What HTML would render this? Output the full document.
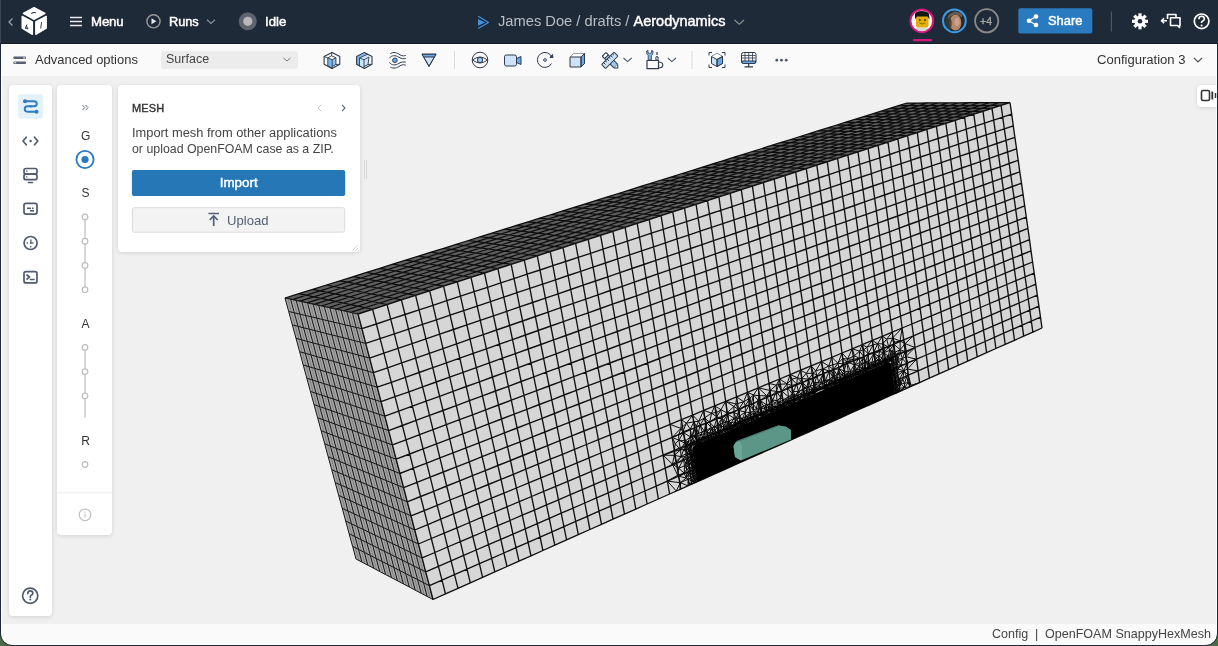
<!DOCTYPE html>
<html><head><meta charset="utf-8">
<style>
*{box-sizing:border-box;margin:0;padding:0}
html,body{width:1218px;height:646px;overflow:hidden}
body{background:#1f2a38;font-family:"Liberation Sans",sans-serif;position:relative}
.abs{position:absolute}
.ht,.abs{will-change:transform}
#green{position:absolute;left:0;top:600px;width:1218px;height:46px;background:#4b6b47}
#frame{position:absolute;left:0;top:0;width:1218px;height:646px;background:#1f2a38;border-radius:0 0 13px 13px}
#app{position:absolute;left:1px;top:44px;width:1216px;height:601px;background:#fff;border-radius:0 0 12px 12px;overflow:hidden}
#tb{position:absolute;left:1px;top:1px;width:1214px;height:31px;background:#fafafa}
#vp{position:absolute;left:1px;top:32px;width:1214px;height:548px;background:#f0f0f0;overflow:hidden}
#ft{position:absolute;left:1px;top:580px;width:1214px;height:20px;background:#fafafa}
.ht{position:absolute;color:#fff;font-size:14px;font-weight:normal;-webkit-text-stroke:0.45px #fff;white-space:nowrap;line-height:1}
.card{position:absolute;background:#fff;border-radius:4px;box-shadow:0 1px 4px rgba(0,0,0,0.13)}
</style></head>
<body>
<div id="green"></div>
<div id="frame"></div>
<div style="position:absolute;left:0;top:0;width:1px;height:44px;background:#3b4556"></div>
<div style="position:absolute;left:0;top:43px;width:1218px;height:1px;background:#141c27"></div>

<!-- HEADER -->
<svg class="abs" style="left:0;top:0" width="1218" height="44">
  <!-- back chevron -->
  <path d="M12.5 18.5 L9 22 L12.5 25.5" stroke="#9aa0aa" stroke-width="1.3" fill="none"/>
  <!-- logo cube -->
  <g fill="#fff" stroke="#fff" stroke-width="1.4" stroke-linejoin="round">
    <path d="M23.4 13.4 L34.1 7.6 L44.9 13.4 L34.1 19.3 Z"/>
    <path d="M22.2 16.4 L32.4 21.9 L32.4 34.3 L22.2 28.2 Z"/>
    <path d="M35.8 21.9 L46.2 16.4 L46.2 28.2 L35.8 34.3 Z"/>
  </g>
  <path d="M31.2 13.6 q2.2 -1.6 4.6 -0.9" stroke="#1f2a38" stroke-width="1.1" fill="none"/>
  <path d="M27 24.5 l-1.8 3.8 h3.2 M26.6 25.5 l0.8 3.8" stroke="#1f2a38" stroke-width="0.9" fill="none"/>
  <path d="M41.6 22 l-0.9 6.5" stroke="#1f2a38" stroke-width="0.9" fill="none"/>
  <!-- hamburger -->
  <path d="M70 17.5 H82 M70 21.5 H82 M70 25.5 H82" stroke="#e8eaee" stroke-width="1.7"/>
  <!-- play circle -->
  <circle cx="153.5" cy="21.3" r="6.6" stroke="#9a9a9a" stroke-width="1.4" fill="none"/>
  <path d="M151.5 18.3 L156.3 21.3 L151.5 24.3 Z" fill="#e8e8e8"/>
  <path d="M207 19.8 L211 23.5 L215 19.8" stroke="#8a8f96" stroke-width="1.2" fill="none"/>
  <!-- idle -->
  <circle cx="247.8" cy="21.3" r="9" fill="#5c6470"/>
  <circle cx="247.8" cy="21.3" r="4.6" fill="#b8b8b8"/>
  <!-- title arrow -->
  <path d="M478.2 16.3 L488.5 22.4 L478.2 28.5" fill="none" stroke="#3d93e0" stroke-width="1.2" stroke-linejoin="round"/><path d="M478 19.1 L485 22.4 L478 25.7 Z" fill="#3d93e0"/>
  <path d="M734.5 20 L739.3 24.3 L744 20" stroke="#8a8f96" stroke-width="1.2" fill="none"/>
  <!-- avatars -->
  <defs><clipPath id="av1"><circle cx="921.8" cy="20.8" r="11"/></clipPath><clipPath id="av2"><circle cx="954.4" cy="20.8" r="11"/></clipPath></defs>
  <g clip-path="url(#av1)">
    <rect x="905" y="5" width="34" height="34" fill="#f6f6f6"/>
    <rect x="908" y="28" width="28" height="6" fill="#d8d8d8"/>
    <rect x="916" y="15.5" width="12.5" height="12" rx="2" fill="#e3ae0a"/>
    <path d="M915 19.5 L915 14 q1 -3 6.5 -3 q6.5 0 7.5 3 L929.5 19.5 L927.5 16.5 L917 16.5 Z" fill="#151515"/>
    <circle cx="919.8" cy="20" r="0.9" fill="#3a2a00"/><circle cx="925" cy="20" r="0.9" fill="#3a2a00"/>
    <path d="M919.5 23 q2.8 2 5.5 0" stroke="#6a4a00" stroke-width="0.7" fill="none"/>
  </g>
  <circle cx="921.8" cy="20.8" r="11.4" fill="none" stroke="#d6187c" stroke-width="2"/>
  <rect x="912.8" y="39.1" width="19.3" height="2.1" rx="1" fill="#d6187c"/>
  <g clip-path="url(#av2)">
    <rect x="940" y="5" width="30" height="32" fill="#262a2a"/>
    <ellipse cx="949" cy="23" rx="4" ry="8" fill="#2e3a34"/>
    <ellipse cx="955.5" cy="22.5" rx="5.8" ry="8" fill="#b4876c"/>
    <path d="M948 16 q6 -8 14 -2 l0 4 q-3 -4 -8 -3 q-4 1 -6 4z" fill="#6a5a4e"/>
    <path d="M950 19 q2 4 0 9" stroke="#5a4032" stroke-width="1.6" fill="none"/>
    <ellipse cx="957" cy="22" rx="2.5" ry="4" fill="#d0a088"/>
  </g>
  <circle cx="954.4" cy="20.8" r="11.4" fill="none" stroke="#3a9be8" stroke-width="2"/>
  <circle cx="986.7" cy="20.8" r="11.6" fill="none" stroke="#8b8b8b" stroke-width="1.8"/>
  <!-- share btn -->
  <rect x="1018.3" y="8.2" width="74" height="25.3" rx="2" fill="#2a7abf"/>
  <g fill="#fff">
    <circle cx="1036" cy="16.5" r="2.3"/><circle cx="1029" cy="20.8" r="2.3"/><circle cx="1036" cy="25" r="2.3"/>
  </g>
  <path d="M1029 20.8 L1036 16.5 M1029 20.8 L1036 25" stroke="#fff" stroke-width="1.3"/>
  <rect x="1110.8" y="11.5" width="1.2" height="20" fill="#4d5663"/>
  <!-- gear -->
  <g transform="translate(1140,21.3)">
    <circle r="5.5" fill="#fff"/>
    <g fill="#fff">
      <rect x="-1.6" y="-8" width="3.2" height="16"/>
      <rect x="-1.6" y="-8" width="3.2" height="16" transform="rotate(45)"/>
      <rect x="-1.6" y="-8" width="3.2" height="16" transform="rotate(90)"/>
      <rect x="-1.6" y="-8" width="3.2" height="16" transform="rotate(135)"/>
    </g>
    <circle r="2.3" fill="#1f2a38"/>
  </g>
  <!-- switch icon -->
  <g stroke="#fff" stroke-width="1.6" fill="none" stroke-linejoin="round">
    <path d="M1167.5 19 V14.5 H1176 V17.5"/>
    <path d="M1170.5 17.8 H1180 V25.5 H1179.5 V27.5 L1177.5 25.5 H1170.5 Z" fill="#1f2a38"/>
    <path d="M1161.5 20.8 H1167 M1164 18.3 L1161.5 20.8 L1164 23.3"/>
  </g>
  <!-- help -->
  <circle cx="1201.6" cy="21.3" r="7.3" stroke="#fff" stroke-width="1.7" fill="none"/>
  <path d="M1198.9 19.2 q0 -2.9 2.7 -2.9 q2.7 0 2.7 2.6 q0 1.6 -2 2.4 q-0.8 0.4 -0.8 1.7" stroke="#fff" stroke-width="1.6" fill="none"/>
  <circle cx="1201.6" cy="25.6" r="1" fill="#fff"/>
</svg>
<div class="ht" style="left:91px;top:15px;font-size:13.2px;letter-spacing:-0.1px">Menu</div>
<div class="ht" style="left:169px;top:16px;font-size:12.8px;letter-spacing:-0.1px">Runs</div>
<div class="ht" style="left:265.4px;top:15px;font-size:13.2px">Idle</div>
<div class="ht" style="left:498px;top:14.2px;font-size:14.7px;font-weight:normal;-webkit-text-stroke:0;color:#b9bec6">James Doe / drafts / <span style="color:#fff;font-weight:normal;-webkit-text-stroke:0.45px #fff;font-size:14.5px">Aerodynamics</span></div>
<div class="ht" style="left:980px;top:16px;font-size:10.6px;color:#a4a4a4;-webkit-text-stroke:0.4px #a4a4a4">+4</div>
<div class="ht" style="left:1048px;top:15px;font-size:12.9px">Share</div>
<div id="app">
  <div id="tb"></div>
  <div id="vp"></div>
  <div id="ft"></div>
</div>

<!-- MESH -->
<svg width="1218" height="646" viewBox="0 0 1218 646" style="position:absolute;left:0;top:0">
<polygon points="285.0,298.0 907.0,103.0 1010.0,102.5 358.0,314.0" fill="#606060"/>
<path d="M285.0,298.0 L292.3,299.6 L299.6,301.2 L306.9,302.8 L314.2,304.4 L321.5,306.0 L328.8,307.6 L336.1,309.2 L343.4,310.8 L350.7,312.4 L358.0,314.0 M298.9,293.6 L306.3,295.2 L313.7,296.8 L321.0,298.3 L328.4,299.9 L335.8,301.4 L343.1,303.0 L350.5,304.6 L357.9,306.1 L365.2,307.7 L372.6,309.3 M312.7,289.3 L320.2,290.8 L327.6,292.4 L335.0,293.9 L342.5,295.4 L349.9,296.9 L357.3,298.5 L364.8,300.0 L372.2,301.5 L379.7,303.0 L387.1,304.6 M326.4,285.0 L333.9,286.5 L341.4,288.0 L348.9,289.5 L356.4,291.0 L363.9,292.5 L371.4,294.0 L378.9,295.4 L386.4,296.9 L393.9,298.4 L401.4,299.9 M340.0,280.8 L347.5,282.2 L355.1,283.7 L362.6,285.1 L370.2,286.6 L377.8,288.0 L385.3,289.5 L392.9,291.0 L400.5,292.4 L408.0,293.9 L415.6,295.3 M353.4,276.6 L361.0,278.0 L368.6,279.4 L376.2,280.8 L383.9,282.2 L391.5,283.7 L399.1,285.1 L406.8,286.5 L414.4,287.9 L422.0,289.3 L429.7,290.8 M366.6,272.4 L374.3,273.8 L382.0,275.2 L389.7,276.6 L397.4,277.9 L405.1,279.3 L412.8,280.7 L420.5,282.1 L428.2,283.5 L435.9,284.9 L443.6,286.2 M379.8,268.3 L387.5,269.6 L395.3,271.0 L403.0,272.3 L410.8,273.7 L418.6,275.0 L426.3,276.4 L434.1,277.7 L441.8,279.1 L449.6,280.4 L457.3,281.8 M392.8,264.2 L400.6,265.5 L408.4,266.8 L416.3,268.1 L424.1,269.5 L431.9,270.8 L439.7,272.1 L447.5,273.4 L455.4,274.7 L463.2,276.0 L471.0,277.3 M405.7,260.2 L413.6,261.4 L421.5,262.7 L429.3,264.0 L437.2,265.3 L445.1,266.6 L453.0,267.8 L460.9,269.1 L468.7,270.4 L476.6,271.7 L484.5,273.0 M418.5,256.2 L426.4,257.4 L434.4,258.7 L442.3,259.9 L450.2,261.1 L458.2,262.4 L466.1,263.6 L474.1,264.9 L482.0,266.1 L490.0,267.4 L497.9,268.6 M431.1,252.2 L439.1,253.4 L447.1,254.6 L455.1,255.8 L463.1,257.0 L471.1,258.3 L479.1,259.5 L487.2,260.7 L495.2,261.9 L503.2,263.1 L511.2,264.3 M443.7,248.3 L451.7,249.4 L459.8,250.6 L467.8,251.8 L475.9,253.0 L484.0,254.2 L492.0,255.3 L500.1,256.5 L508.2,257.7 L516.2,258.9 L524.3,260.1 M456.1,244.4 L464.2,245.5 L472.3,246.7 L480.4,247.8 L488.6,249.0 L496.7,250.1 L504.8,251.2 L512.9,252.4 L521.1,253.5 L529.2,254.7 L537.3,255.8 M468.4,240.5 L476.6,241.6 L484.7,242.7 L492.9,243.9 L501.1,245.0 L509.3,246.1 L517.5,247.2 L525.7,248.3 L533.8,249.4 L542.0,250.5 L550.2,251.6 M480.6,236.7 L488.8,237.8 L497.0,238.9 L505.3,239.9 L513.5,241.0 L521.8,242.1 L530.0,243.2 L538.3,244.3 L546.5,245.3 L554.7,246.4 L563.0,247.5 M492.6,232.9 L500.9,234.0 L509.2,235.0 L517.5,236.1 L525.8,237.1 L534.1,238.2 L542.4,239.2 L550.7,240.3 L559.0,241.3 L567.3,242.3 L575.6,243.4 M504.6,229.2 L513.0,230.2 L521.3,231.2 L529.7,232.2 L538.0,233.2 L546.4,234.2 L554.7,235.3 L563.1,236.3 L571.5,237.3 L579.8,238.3 L588.2,239.3 M516.4,225.4 L524.9,226.4 L533.3,227.4 L541.7,228.4 L550.1,229.4 L558.5,230.4 L566.9,231.4 L575.4,232.3 L583.8,233.3 L592.2,234.3 L600.6,235.3 M528.2,221.8 L536.7,222.7 L545.1,223.7 L553.6,224.6 L562.1,225.6 L570.6,226.5 L579.0,227.5 L587.5,228.4 L596.0,229.4 L604.5,230.4 L612.9,231.3 M539.8,218.1 L548.4,219.0 L556.9,220.0 L565.4,220.9 L573.9,221.8 L582.5,222.7 L591.0,223.7 L599.5,224.6 L608.1,225.5 L616.6,226.4 L625.1,227.3 M551.4,214.5 L560.0,215.4 L568.5,216.3 L577.1,217.2 L585.7,218.1 L594.3,219.0 L602.9,219.9 L611.5,220.7 L620.0,221.6 L628.6,222.5 L637.2,223.4 M562.8,210.9 L571.4,211.8 L580.1,212.6 L588.7,213.5 L597.4,214.4 L606.0,215.2 L614.6,216.1 L623.3,217.0 L631.9,217.8 L640.6,218.7 L649.2,219.5 M574.1,207.4 L582.8,208.2 L591.5,209.0 L600.2,209.9 L608.9,210.7 L617.6,211.5 L626.3,212.4 L635.0,213.2 L643.7,214.0 L652.4,214.9 L661.1,215.7 M585.4,203.8 L594.1,204.6 L602.9,205.4 L611.6,206.2 L620.4,207.0 L629.1,207.9 L637.8,208.7 L646.6,209.5 L655.3,210.3 L664.1,211.1 L672.8,211.9 M596.5,200.3 L605.3,201.1 L614.1,201.9 L622.9,202.7 L631.7,203.4 L640.5,204.2 L649.3,205.0 L658.1,205.8 L666.9,206.5 L675.7,207.3 L684.5,208.1 M607.5,196.9 L616.4,197.6 L625.2,198.4 L634.1,199.1 L642.9,199.9 L651.8,200.6 L660.6,201.4 L669.5,202.1 L678.4,202.8 L687.2,203.6 L696.1,204.3 M618.4,193.5 L627.4,194.2 L636.3,194.9 L645.2,195.6 L654.1,196.3 L663.0,197.0 L671.9,197.8 L680.8,198.5 L689.7,199.2 L698.6,199.9 L707.5,200.6 M629.3,190.1 L638.2,190.8 L647.2,191.4 L656.2,192.1 L665.1,192.8 L674.1,193.5 L683.1,194.2 L692.0,194.9 L701.0,195.6 L709.9,196.2 L718.9,196.9 M640.0,186.7 L649.0,187.4 L658.1,188.0 L667.1,188.7 L676.1,189.3 L685.1,190.0 L694.1,190.6 L703.1,191.3 L712.1,192.0 L721.1,192.6 L730.2,193.3 M650.7,183.4 L659.7,184.0 L668.8,184.6 L677.9,185.2 L686.9,185.9 L696.0,186.5 L705.1,187.1 L714.1,187.8 L723.2,188.4 L732.3,189.0 L741.3,189.7 M661.2,180.0 L670.4,180.6 L679.5,181.3 L688.6,181.9 L697.7,182.5 L706.8,183.1 L715.9,183.7 L725.0,184.3 L734.2,184.9 L743.3,185.5 L752.4,186.1 M671.7,176.8 L680.9,177.3 L690.0,177.9 L699.2,178.5 L708.4,179.1 L717.5,179.6 L726.7,180.2 L735.9,180.8 L745.0,181.4 L754.2,181.9 L763.4,182.5 M682.1,173.5 L691.3,174.1 L700.5,174.6 L709.7,175.2 L718.9,175.7 L728.2,176.2 L737.4,176.8 L746.6,177.3 L755.8,177.9 L765.0,178.4 L774.2,179.0 M692.4,170.3 L701.6,170.8 L710.9,171.3 L720.2,171.8 L729.4,172.4 L738.7,172.9 L748.0,173.4 L757.2,173.9 L766.5,174.4 L775.8,175.0 L785.0,175.5 M702.6,167.1 L711.9,167.6 L721.2,168.1 L730.5,168.6 L739.8,169.1 L749.1,169.5 L758.5,170.0 L767.8,170.5 L777.1,171.0 L786.4,171.5 L795.7,172.0 M712.7,163.9 L722.1,164.4 L731.4,164.8 L740.8,165.3 L750.1,165.8 L759.5,166.2 L768.9,166.7 L778.2,167.2 L787.6,167.6 L797.0,168.1 L806.3,168.6 M722.7,160.8 L732.1,161.2 L741.5,161.6 L751.0,162.1 L760.4,162.5 L769.8,163.0 L779.2,163.4 L788.6,163.8 L798.0,164.3 L807.4,164.7 L816.8,165.2 M732.7,157.7 L742.1,158.1 L751.6,158.5 L761.1,158.9 L770.5,159.3 L780.0,159.7 L789.4,160.1 L798.9,160.5 L808.3,161.0 L817.8,161.4 L827.3,161.8 M742.5,154.6 L752.0,154.9 L761.6,155.3 L771.1,155.7 L780.6,156.1 L790.1,156.5 L799.6,156.9 L809.1,157.3 L818.6,157.7 L828.1,158.0 L837.6,158.4 M752.3,151.5 L761.9,151.9 L771.4,152.2 L781.0,152.6 L790.5,152.9 L800.1,153.3 L809.6,153.7 L819.2,154.0 L828.8,154.4 L838.3,154.7 L847.9,155.1 M762.0,148.5 L771.6,148.8 L781.2,149.1 L790.8,149.5 L800.4,149.8 L810.0,150.1 L819.6,150.5 L829.2,150.8 L838.8,151.1 L848.4,151.5 L858.0,151.8 M771.6,145.4 L781.3,145.7 L790.9,146.1 L800.6,146.4 L810.2,146.7 L819.9,147.0 L829.5,147.3 L839.2,147.6 L848.8,147.9 L858.5,148.2 L868.1,148.5 M781.2,142.4 L790.9,142.7 L800.6,143.0 L810.3,143.3 L820.0,143.6 L829.6,143.9 L839.3,144.1 L849.0,144.4 L858.7,144.7 L868.4,145.0 L878.1,145.3 M790.6,139.5 L800.4,139.7 L810.1,140.0 L819.9,140.3 L829.6,140.5 L839.3,140.8 L849.1,141.0 L858.8,141.3 L868.6,141.5 L878.3,141.8 L888.0,142.1 M800.0,136.5 L809.8,136.8 L819.6,137.0 L829.4,137.2 L839.2,137.5 L849.0,137.7 L858.7,137.9 L868.5,138.2 L878.3,138.4 L888.1,138.6 L897.9,138.9 M809.3,133.6 L819.2,133.8 L829.0,134.0 L838.8,134.2 L848.7,134.5 L858.5,134.7 L868.3,134.9 L878.1,135.1 L888.0,135.3 L897.8,135.5 L907.6,135.7 M818.6,130.7 L828.5,130.9 L838.3,131.1 L848.2,131.3 L858.1,131.5 L868.0,131.6 L877.8,131.8 L887.7,132.0 L897.6,132.2 L907.4,132.4 L917.3,132.6 M827.7,127.8 L837.7,128.0 L847.6,128.2 L857.5,128.3 L867.4,128.5 L877.3,128.6 L887.3,128.8 L897.2,129.0 L907.1,129.1 L917.0,129.3 L926.9,129.4 M836.8,125.0 L846.8,125.1 L856.8,125.3 L866.7,125.4 L876.7,125.5 L886.6,125.7 L896.6,125.8 L906.6,126.0 L916.5,126.1 L926.5,126.2 L936.4,126.4 M845.8,122.2 L855.9,122.3 L865.9,122.4 L875.9,122.5 L885.9,122.6 L895.9,122.7 L905.9,122.8 L915.9,123.0 L925.9,123.1 L935.9,123.2 L945.9,123.3 M854.8,119.4 L864.8,119.5 L874.9,119.5 L884.9,119.6 L895.0,119.7 L905.0,119.8 L915.1,119.9 L925.1,120.0 L935.2,120.1 L945.2,120.2 L955.3,120.3 M863.7,116.6 L873.8,116.7 L883.8,116.7 L893.9,116.8 L904.0,116.8 L914.1,116.9 L924.2,117.0 L934.3,117.0 L944.4,117.1 L954.5,117.2 L964.6,117.2 M872.5,113.8 L882.6,113.9 L892.7,113.9 L902.9,114.0 L913.0,114.0 L923.1,114.0 L933.3,114.1 L943.4,114.1 L953.5,114.2 L963.7,114.2 L973.8,114.2 M881.2,111.1 L891.4,111.1 L901.6,111.1 L911.7,111.1 L921.9,111.2 L932.1,111.2 L942.3,111.2 L952.4,111.2 L962.6,111.2 L972.8,111.3 L983.0,111.3 M889.9,108.4 L900.1,108.4 L910.3,108.4 L920.5,108.4 L930.7,108.4 L941.0,108.3 L951.2,108.3 L961.4,108.3 L971.6,108.3 L981.8,108.3 L992.0,108.3 M898.5,105.7 L908.7,105.6 L919.0,105.6 L929.2,105.6 L939.5,105.6 L949.8,105.5 L960.0,105.5 L970.3,105.5 L980.5,105.5 L990.8,105.4 L1001.1,105.4 M907.0,103.0 L917.3,103.0 L927.6,102.9 L937.9,102.8 L948.2,102.8 L958.5,102.8 L968.8,102.7 L979.1,102.7 L989.4,102.6 L999.7,102.5 L1010.0,102.5 M285.0,298.0 L298.9,293.6 L312.7,289.3 L326.4,285.0 L340.0,280.8 L353.4,276.6 L366.6,272.4 L379.8,268.3 L392.8,264.2 L405.7,260.2 L418.5,256.2 L431.1,252.2 L443.7,248.3 L456.1,244.4 L468.4,240.5 L480.6,236.7 L492.6,232.9 L504.6,229.2 L516.4,225.4 L528.2,221.8 L539.8,218.1 L551.4,214.5 L562.8,210.9 L574.1,207.4 L585.4,203.8 L596.5,200.3 L607.5,196.9 L618.4,193.5 L629.3,190.1 L640.0,186.7 L650.7,183.4 L661.2,180.0 L671.7,176.8 L682.1,173.5 L692.4,170.3 L702.6,167.1 L712.7,163.9 L722.7,160.8 L732.7,157.7 L742.5,154.6 L752.3,151.5 L762.0,148.5 L771.6,145.4 L781.2,142.4 L790.6,139.5 L800.0,136.5 L809.3,133.6 L818.6,130.7 L827.7,127.8 L836.8,125.0 L845.8,122.2 L854.8,119.4 L863.7,116.6 L872.5,113.8 L881.2,111.1 L889.9,108.4 L898.5,105.7 L907.0,103.0 M292.3,299.6 L306.3,295.2 L320.2,290.8 L333.9,286.5 L347.5,282.2 L361.0,278.0 L374.3,273.8 L387.5,269.6 L400.6,265.5 L413.6,261.4 L426.4,257.4 L439.1,253.4 L451.7,249.4 L464.2,245.5 L476.6,241.6 L488.8,237.8 L500.9,234.0 L513.0,230.2 L524.9,226.4 L536.7,222.7 L548.4,219.0 L560.0,215.4 L571.4,211.8 L582.8,208.2 L594.1,204.6 L605.3,201.1 L616.4,197.6 L627.4,194.2 L638.2,190.8 L649.0,187.4 L659.7,184.0 L670.4,180.6 L680.9,177.3 L691.3,174.1 L701.6,170.8 L711.9,167.6 L722.1,164.4 L732.1,161.2 L742.1,158.1 L752.0,154.9 L761.9,151.9 L771.6,148.8 L781.3,145.7 L790.9,142.7 L800.4,139.7 L809.8,136.8 L819.2,133.8 L828.5,130.9 L837.7,128.0 L846.8,125.1 L855.9,122.3 L864.8,119.5 L873.8,116.7 L882.6,113.9 L891.4,111.1 L900.1,108.4 L908.7,105.6 L917.3,103.0 M299.6,301.2 L313.7,296.8 L327.6,292.4 L341.4,288.0 L355.1,283.7 L368.6,279.4 L382.0,275.2 L395.3,271.0 L408.4,266.8 L421.5,262.7 L434.4,258.7 L447.1,254.6 L459.8,250.6 L472.3,246.7 L484.7,242.7 L497.0,238.9 L509.2,235.0 L521.3,231.2 L533.3,227.4 L545.1,223.7 L556.9,220.0 L568.5,216.3 L580.1,212.6 L591.5,209.0 L602.9,205.4 L614.1,201.9 L625.2,198.4 L636.3,194.9 L647.2,191.4 L658.1,188.0 L668.8,184.6 L679.5,181.3 L690.0,177.9 L700.5,174.6 L710.9,171.3 L721.2,168.1 L731.4,164.8 L741.5,161.6 L751.6,158.5 L761.6,155.3 L771.4,152.2 L781.2,149.1 L790.9,146.1 L800.6,143.0 L810.1,140.0 L819.6,137.0 L829.0,134.0 L838.3,131.1 L847.6,128.2 L856.8,125.3 L865.9,122.4 L874.9,119.5 L883.8,116.7 L892.7,113.9 L901.6,111.1 L910.3,108.4 L919.0,105.6 L927.6,102.9 M306.9,302.8 L321.0,298.3 L335.0,293.9 L348.9,289.5 L362.6,285.1 L376.2,280.8 L389.7,276.6 L403.0,272.3 L416.3,268.1 L429.3,264.0 L442.3,259.9 L455.1,255.8 L467.8,251.8 L480.4,247.8 L492.9,243.9 L505.3,239.9 L517.5,236.1 L529.7,232.2 L541.7,228.4 L553.6,224.6 L565.4,220.9 L577.1,217.2 L588.7,213.5 L600.2,209.9 L611.6,206.2 L622.9,202.7 L634.1,199.1 L645.2,195.6 L656.2,192.1 L667.1,188.7 L677.9,185.2 L688.6,181.9 L699.2,178.5 L709.7,175.2 L720.2,171.8 L730.5,168.6 L740.8,165.3 L751.0,162.1 L761.1,158.9 L771.1,155.7 L781.0,152.6 L790.8,149.5 L800.6,146.4 L810.3,143.3 L819.9,140.3 L829.4,137.2 L838.8,134.2 L848.2,131.3 L857.5,128.3 L866.7,125.4 L875.9,122.5 L884.9,119.6 L893.9,116.8 L902.9,114.0 L911.7,111.1 L920.5,108.4 L929.2,105.6 L937.9,102.8 M314.2,304.4 L328.4,299.9 L342.5,295.4 L356.4,291.0 L370.2,286.6 L383.9,282.2 L397.4,277.9 L410.8,273.7 L424.1,269.5 L437.2,265.3 L450.2,261.1 L463.1,257.0 L475.9,253.0 L488.6,249.0 L501.1,245.0 L513.5,241.0 L525.8,237.1 L538.0,233.2 L550.1,229.4 L562.1,225.6 L573.9,221.8 L585.7,218.1 L597.4,214.4 L608.9,210.7 L620.4,207.0 L631.7,203.4 L642.9,199.9 L654.1,196.3 L665.1,192.8 L676.1,189.3 L686.9,185.9 L697.7,182.5 L708.4,179.1 L718.9,175.7 L729.4,172.4 L739.8,169.1 L750.1,165.8 L760.4,162.5 L770.5,159.3 L780.6,156.1 L790.5,152.9 L800.4,149.8 L810.2,146.7 L820.0,143.6 L829.6,140.5 L839.2,137.5 L848.7,134.5 L858.1,131.5 L867.4,128.5 L876.7,125.5 L885.9,122.6 L895.0,119.7 L904.0,116.8 L913.0,114.0 L921.9,111.2 L930.7,108.4 L939.5,105.6 L948.2,102.8 M321.5,306.0 L335.8,301.4 L349.9,296.9 L363.9,292.5 L377.8,288.0 L391.5,283.7 L405.1,279.3 L418.6,275.0 L431.9,270.8 L445.1,266.6 L458.2,262.4 L471.1,258.3 L484.0,254.2 L496.7,250.1 L509.3,246.1 L521.8,242.1 L534.1,238.2 L546.4,234.2 L558.5,230.4 L570.6,226.5 L582.5,222.7 L594.3,219.0 L606.0,215.2 L617.6,211.5 L629.1,207.9 L640.5,204.2 L651.8,200.6 L663.0,197.0 L674.1,193.5 L685.1,190.0 L696.0,186.5 L706.8,183.1 L717.5,179.6 L728.2,176.2 L738.7,172.9 L749.1,169.5 L759.5,166.2 L769.8,163.0 L780.0,159.7 L790.1,156.5 L800.1,153.3 L810.0,150.1 L819.9,147.0 L829.6,143.9 L839.3,140.8 L849.0,137.7 L858.5,134.7 L868.0,131.6 L877.3,128.6 L886.6,125.7 L895.9,122.7 L905.0,119.8 L914.1,116.9 L923.1,114.0 L932.1,111.2 L941.0,108.3 L949.8,105.5 L958.5,102.8 M328.8,307.6 L343.1,303.0 L357.3,298.5 L371.4,294.0 L385.3,289.5 L399.1,285.1 L412.8,280.7 L426.3,276.4 L439.7,272.1 L453.0,267.8 L466.1,263.6 L479.1,259.5 L492.0,255.3 L504.8,251.2 L517.5,247.2 L530.0,243.2 L542.4,239.2 L554.7,235.3 L566.9,231.4 L579.0,227.5 L591.0,223.7 L602.9,219.9 L614.6,216.1 L626.3,212.4 L637.8,208.7 L649.3,205.0 L660.6,201.4 L671.9,197.8 L683.1,194.2 L694.1,190.6 L705.1,187.1 L715.9,183.7 L726.7,180.2 L737.4,176.8 L748.0,173.4 L758.5,170.0 L768.9,166.7 L779.2,163.4 L789.4,160.1 L799.6,156.9 L809.6,153.7 L819.6,150.5 L829.5,147.3 L839.3,144.1 L849.1,141.0 L858.7,137.9 L868.3,134.9 L877.8,131.8 L887.3,128.8 L896.6,125.8 L905.9,122.8 L915.1,119.9 L924.2,117.0 L933.3,114.1 L942.3,111.2 L951.2,108.3 L960.0,105.5 L968.8,102.7 M336.1,309.2 L350.5,304.6 L364.8,300.0 L378.9,295.4 L392.9,291.0 L406.8,286.5 L420.5,282.1 L434.1,277.7 L447.5,273.4 L460.9,269.1 L474.1,264.9 L487.2,260.7 L500.1,256.5 L512.9,252.4 L525.7,248.3 L538.3,244.3 L550.7,240.3 L563.1,236.3 L575.4,232.3 L587.5,228.4 L599.5,224.6 L611.5,220.7 L623.3,217.0 L635.0,213.2 L646.6,209.5 L658.1,205.8 L669.5,202.1 L680.8,198.5 L692.0,194.9 L703.1,191.3 L714.1,187.8 L725.0,184.3 L735.9,180.8 L746.6,177.3 L757.2,173.9 L767.8,170.5 L778.2,167.2 L788.6,163.8 L798.9,160.5 L809.1,157.3 L819.2,154.0 L829.2,150.8 L839.2,147.6 L849.0,144.4 L858.8,141.3 L868.5,138.2 L878.1,135.1 L887.7,132.0 L897.2,129.0 L906.6,126.0 L915.9,123.0 L925.1,120.0 L934.3,117.0 L943.4,114.1 L952.4,111.2 L961.4,108.3 L970.3,105.5 L979.1,102.7 M343.4,310.8 L357.9,306.1 L372.2,301.5 L386.4,296.9 L400.5,292.4 L414.4,287.9 L428.2,283.5 L441.8,279.1 L455.4,274.7 L468.7,270.4 L482.0,266.1 L495.2,261.9 L508.2,257.7 L521.1,253.5 L533.8,249.4 L546.5,245.3 L559.0,241.3 L571.5,237.3 L583.8,233.3 L596.0,229.4 L608.1,225.5 L620.0,221.6 L631.9,217.8 L643.7,214.0 L655.3,210.3 L666.9,206.5 L678.4,202.8 L689.7,199.2 L701.0,195.6 L712.1,192.0 L723.2,188.4 L734.2,184.9 L745.0,181.4 L755.8,177.9 L766.5,174.4 L777.1,171.0 L787.6,167.6 L798.0,164.3 L808.3,161.0 L818.6,157.7 L828.8,154.4 L838.8,151.1 L848.8,147.9 L858.7,144.7 L868.6,141.5 L878.3,138.4 L888.0,135.3 L897.6,132.2 L907.1,129.1 L916.5,126.1 L925.9,123.1 L935.2,120.1 L944.4,117.1 L953.5,114.2 L962.6,111.2 L971.6,108.3 L980.5,105.5 L989.4,102.6 M350.7,312.4 L365.2,307.7 L379.7,303.0 L393.9,298.4 L408.0,293.9 L422.0,289.3 L435.9,284.9 L449.6,280.4 L463.2,276.0 L476.6,271.7 L490.0,267.4 L503.2,263.1 L516.2,258.9 L529.2,254.7 L542.0,250.5 L554.7,246.4 L567.3,242.3 L579.8,238.3 L592.2,234.3 L604.5,230.4 L616.6,226.4 L628.6,222.5 L640.6,218.7 L652.4,214.9 L664.1,211.1 L675.7,207.3 L687.2,203.6 L698.6,199.9 L709.9,196.2 L721.1,192.6 L732.3,189.0 L743.3,185.5 L754.2,181.9 L765.0,178.4 L775.8,175.0 L786.4,171.5 L797.0,168.1 L807.4,164.7 L817.8,161.4 L828.1,158.0 L838.3,154.7 L848.4,151.5 L858.5,148.2 L868.4,145.0 L878.3,141.8 L888.1,138.6 L897.8,135.5 L907.4,132.4 L917.0,129.3 L926.5,126.2 L935.9,123.2 L945.2,120.2 L954.5,117.2 L963.7,114.2 L972.8,111.3 L981.8,108.3 L990.8,105.4 L999.7,102.5 M358.0,314.0 L372.6,309.3 L387.1,304.6 L401.4,299.9 L415.6,295.3 L429.7,290.8 L443.6,286.2 L457.3,281.8 L471.0,277.3 L484.5,273.0 L497.9,268.6 L511.2,264.3 L524.3,260.1 L537.3,255.8 L550.2,251.6 L563.0,247.5 L575.6,243.4 L588.2,239.3 L600.6,235.3 L612.9,231.3 L625.1,227.3 L637.2,223.4 L649.2,219.5 L661.1,215.7 L672.8,211.9 L684.5,208.1 L696.1,204.3 L707.5,200.6 L718.9,196.9 L730.2,193.3 L741.3,189.7 L752.4,186.1 L763.4,182.5 L774.2,179.0 L785.0,175.5 L795.7,172.0 L806.3,168.6 L816.8,165.2 L827.3,161.8 L837.6,158.4 L847.9,155.1 L858.0,151.8 L868.1,148.5 L878.1,145.3 L888.0,142.1 L897.9,138.9 L907.6,135.7 L917.3,132.6 L926.9,129.4 L936.4,126.4 L945.9,123.3 L955.3,120.3 L964.6,117.2 L973.8,114.2 L983.0,111.3 L992.0,108.3 L1001.1,105.4 L1010.0,102.5" stroke="#0e0e0e" stroke-width="1.25" fill="none"/>
<polygon points="285.0,298.0 358.0,314.0 433.0,599.5 356.0,559.0" fill="#a6a6a6"/>
<path d="M287.8,298.6 L289.6,305.4 L291.5,312.1 L293.3,318.9 L295.1,325.6 L297.0,332.4 L298.8,339.1 L300.6,345.8 L302.4,352.5 L304.2,359.1 L306.1,365.8 L307.9,372.5 L309.7,379.1 L311.5,385.7 L313.3,392.4 L315.1,399.0 L316.9,405.6 L318.6,412.1 L320.4,418.7 L322.2,425.3 L324.0,431.8 L325.8,438.4 L327.5,444.9 L329.3,451.4 L331.1,457.9 L332.9,464.4 L334.6,470.9 L336.4,477.4 L338.1,483.9 L339.9,490.3 L341.6,496.7 L343.4,503.2 L345.1,509.6 L346.9,516.0 L348.6,522.4 L350.3,528.8 L352.1,535.2 L353.8,541.5 L355.5,547.9 L357.2,554.2 L359.0,560.6 M293.4,299.8 L295.3,306.7 L297.1,313.5 L299.0,320.3 L300.8,327.1 L302.6,333.8 L304.5,340.6 L306.3,347.3 L308.1,354.1 L309.9,360.8 L311.8,367.5 L313.6,374.2 L315.4,380.9 L317.2,387.6 L319.0,394.3 L320.8,400.9 L322.6,407.6 L324.4,414.2 L326.2,420.8 L328.0,427.4 L329.8,434.0 L331.6,440.6 L333.3,447.2 L335.1,453.8 L336.9,460.3 L338.7,466.9 L340.4,473.4 L342.2,479.9 L344.0,486.4 L345.7,492.9 L347.5,499.4 L349.2,505.9 L351.0,512.3 L352.7,518.8 L354.5,525.2 L356.2,531.7 L358.0,538.1 L359.7,544.5 L361.4,550.9 L363.2,557.3 L364.9,563.7 M299.0,301.1 L300.9,307.9 L302.7,314.8 L304.6,321.6 L306.4,328.5 L308.3,335.3 L310.1,342.1 L312.0,348.9 L313.8,355.7 L315.6,362.5 L317.4,369.2 L319.3,376.0 L321.1,382.7 L322.9,389.5 L324.7,396.2 L326.5,402.9 L328.3,409.6 L330.1,416.2 L331.9,422.9 L333.7,429.6 L335.5,436.2 L337.3,442.9 L339.1,449.5 L340.9,456.1 L342.7,462.7 L344.5,469.3 L346.2,475.9 L348.0,482.4 L349.8,489.0 L351.6,495.5 L353.3,502.1 L355.1,508.6 L356.8,515.1 L358.6,521.6 L360.4,528.1 L362.1,534.6 L363.8,541.0 L365.6,547.5 L367.3,553.9 L369.1,560.4 L370.8,566.8 M304.7,302.3 L306.5,309.2 L308.4,316.1 L310.2,323.0 L312.1,329.9 L313.9,336.8 L315.8,343.6 L317.6,350.5 L319.5,357.3 L321.3,364.1 L323.1,370.9 L325.0,377.7 L326.8,384.5 L328.6,391.3 L330.4,398.1 L332.3,404.8 L334.1,411.6 L335.9,418.3 L337.7,425.0 L339.5,431.7 L341.3,438.4 L343.1,445.1 L344.9,451.8 L346.7,458.4 L348.5,465.1 L350.3,471.7 L352.1,478.3 L353.8,484.9 L355.6,491.5 L357.4,498.1 L359.2,504.7 L360.9,511.3 L362.7,517.8 L364.5,524.4 L366.2,530.9 L368.0,537.4 L369.7,544.0 L371.5,550.5 L373.2,557.0 L375.0,563.4 L376.7,569.9 M310.3,303.5 L312.1,310.5 L314.0,317.5 L315.9,324.4 L317.7,331.3 L319.6,338.3 L321.4,345.2 L323.3,352.1 L325.1,358.9 L327.0,365.8 L328.8,372.7 L330.7,379.5 L332.5,386.3 L334.3,393.2 L336.2,400.0 L338.0,406.8 L339.8,413.6 L341.6,420.3 L343.5,427.1 L345.3,433.9 L347.1,440.6 L348.9,447.3 L350.7,454.0 L352.5,460.7 L354.3,467.4 L356.1,474.1 L357.9,480.8 L359.7,487.5 L361.5,494.1 L363.2,500.7 L365.0,507.4 L366.8,514.0 L368.6,520.6 L370.3,527.2 L372.1,533.8 L373.9,540.3 L375.6,546.9 L377.4,553.4 L379.2,560.0 L380.9,566.5 L382.7,573.0 M315.9,304.8 L317.8,311.8 L319.6,318.8 L321.5,325.8 L323.4,332.8 L325.2,339.7 L327.1,346.7 L329.0,353.6 L330.8,360.6 L332.7,367.5 L334.5,374.4 L336.4,381.3 L338.2,388.2 L340.1,395.0 L341.9,401.9 L343.7,408.7 L345.6,415.6 L347.4,422.4 L349.2,429.2 L351.0,436.0 L352.9,442.8 L354.7,449.6 L356.5,456.3 L358.3,463.1 L360.1,469.8 L361.9,476.6 L363.7,483.3 L365.5,490.0 L367.3,496.7 L369.1,503.4 L370.9,510.0 L372.7,516.7 L374.4,523.3 L376.2,530.0 L378.0,536.6 L379.8,543.2 L381.5,549.8 L383.3,556.4 L385.1,563.0 L386.8,569.6 L388.6,576.1 M321.5,306.0 L323.4,313.1 L325.3,320.1 L327.2,327.2 L329.0,334.2 L330.9,341.2 L332.8,348.2 L334.6,355.2 L336.5,362.2 L338.4,369.1 L340.2,376.1 L342.1,383.0 L343.9,390.0 L345.8,396.9 L347.6,403.8 L349.5,410.7 L351.3,417.6 L353.1,424.4 L355.0,431.3 L356.8,438.1 L358.6,445.0 L360.5,451.8 L362.3,458.6 L364.1,465.4 L365.9,472.2 L367.7,479.0 L369.5,485.7 L371.3,492.5 L373.1,499.2 L374.9,506.0 L376.7,512.7 L378.5,519.4 L380.3,526.1 L382.1,532.8 L383.9,539.4 L385.6,546.1 L387.4,552.8 L389.2,559.4 L391.0,566.0 L392.7,572.6 L394.5,579.2 M327.1,307.2 L329.0,314.3 L330.9,321.4 L332.8,328.5 L334.7,335.6 L336.6,342.7 L338.4,349.7 L340.3,356.8 L342.2,363.8 L344.1,370.8 L345.9,377.8 L347.8,384.8 L349.6,391.8 L351.5,398.7 L353.3,405.7 L355.2,412.6 L357.0,419.6 L358.9,426.5 L360.7,433.4 L362.6,440.3 L364.4,447.2 L366.2,454.0 L368.1,460.9 L369.9,467.7 L371.7,474.6 L373.5,481.4 L375.3,488.2 L377.1,495.0 L379.0,501.8 L380.8,508.6 L382.6,515.3 L384.4,522.1 L386.2,528.8 L388.0,535.6 L389.7,542.3 L391.5,549.0 L393.3,555.7 L395.1,562.4 L396.9,569.1 L398.7,575.7 L400.4,582.4 M332.7,308.5 L334.6,315.6 L336.5,322.8 L338.4,329.9 L340.3,337.0 L342.2,344.1 L344.1,351.2 L346.0,358.3 L347.9,365.4 L349.7,372.5 L351.6,379.5 L353.5,386.6 L355.4,393.6 L357.2,400.6 L359.1,407.6 L360.9,414.6 L362.8,421.6 L364.6,428.5 L366.5,435.5 L368.3,442.4 L370.2,449.4 L372.0,456.3 L373.8,463.2 L375.7,470.1 L377.5,477.0 L379.3,483.8 L381.2,490.7 L383.0,497.5 L384.8,504.4 L386.6,511.2 L388.4,518.0 L390.2,524.8 L392.0,531.6 L393.8,538.4 L395.6,545.1 L397.4,551.9 L399.2,558.6 L401.0,565.4 L402.8,572.1 L404.6,578.8 L406.3,585.5 M338.3,309.7 L340.3,316.9 L342.2,324.1 L344.1,331.3 L346.0,338.5 L347.9,345.6 L349.8,352.8 L351.7,359.9 L353.5,367.0 L355.4,374.1 L357.3,381.2 L359.2,388.3 L361.1,395.4 L362.9,402.5 L364.8,409.5 L366.7,416.5 L368.5,423.6 L370.4,430.6 L372.2,437.6 L374.1,444.6 L375.9,451.5 L377.8,458.5 L379.6,465.5 L381.5,472.4 L383.3,479.3 L385.1,486.2 L387.0,493.2 L388.8,500.0 L390.6,506.9 L392.4,513.8 L394.3,520.7 L396.1,527.5 L397.9,534.3 L399.7,541.2 L401.5,548.0 L403.3,554.8 L405.1,561.6 L406.9,568.3 L408.7,575.1 L410.5,581.9 L412.3,588.6 M344.0,310.9 L345.9,318.2 L347.8,325.4 L349.7,332.7 L351.6,339.9 L353.5,347.1 L355.4,354.3 L357.3,361.5 L359.2,368.6 L361.1,375.8 L363.0,382.9 L364.9,390.1 L366.8,397.2 L368.7,404.3 L370.5,411.4 L372.4,418.5 L374.3,425.6 L376.1,432.6 L378.0,439.7 L379.9,446.7 L381.7,453.7 L383.6,460.7 L385.4,467.7 L387.3,474.7 L389.1,481.7 L391.0,488.7 L392.8,495.6 L394.6,502.6 L396.5,509.5 L398.3,516.4 L400.1,523.3 L401.9,530.2 L403.8,537.1 L405.6,544.0 L407.4,550.8 L409.2,557.7 L411.0,564.5 L412.8,571.3 L414.6,578.1 L416.4,584.9 L418.2,591.7 M349.6,312.2 L351.5,319.5 L353.4,326.8 L355.3,334.0 L357.3,341.3 L359.2,348.6 L361.1,355.8 L363.0,363.0 L364.9,370.3 L366.8,377.5 L368.7,384.7 L370.6,391.8 L372.5,399.0 L374.4,406.2 L376.3,413.3 L378.1,420.4 L380.0,427.6 L381.9,434.7 L383.8,441.8 L385.6,448.9 L387.5,455.9 L389.3,463.0 L391.2,470.0 L393.1,477.1 L394.9,484.1 L396.8,491.1 L398.6,498.1 L400.4,505.1 L402.3,512.1 L404.1,519.0 L406.0,526.0 L407.8,532.9 L409.6,539.8 L411.4,546.7 L413.3,553.7 L415.1,560.5 L416.9,567.4 L418.7,574.3 L420.5,581.1 L422.3,588.0 L424.1,594.8 M355.2,313.4 L357.1,320.7 L359.1,328.1 L361.0,335.4 L362.9,342.7 L364.8,350.0 L366.8,357.3 L368.7,364.6 L370.6,371.9 L372.5,379.1 L374.4,386.4 L376.3,393.6 L378.2,400.8 L380.1,408.0 L382.0,415.2 L383.9,422.4 L385.8,429.6 L387.6,436.7 L389.5,443.9 L391.4,451.0 L393.3,458.1 L395.1,465.2 L397.0,472.3 L398.9,479.4 L400.7,486.5 L402.6,493.5 L404.4,500.6 L406.3,507.6 L408.1,514.6 L410.0,521.6 L411.8,528.6 L413.6,535.6 L415.5,542.6 L417.3,549.5 L419.1,556.5 L421.0,563.4 L422.8,570.4 L424.6,577.3 L426.4,584.2 L428.2,591.1 L430.0,597.9" stroke="#7a7a7a" stroke-width="0.9" fill="none"/>
<path d="M285.0,298.0 L288.7,311.5 L292.3,324.9 L296.0,338.3 L299.6,351.7 L303.2,364.9 L306.8,378.2 L310.4,391.4 L314.0,404.6 L317.6,417.7 L321.1,430.7 L324.7,443.8 L328.2,456.7 L331.7,469.7 L335.2,482.6 L338.7,495.4 L342.2,508.2 L345.7,521.0 L349.1,533.7 L352.6,546.4 L356.0,559.0 M290.6,299.2 L294.3,312.8 L298.0,326.3 L301.6,339.8 L305.3,353.3 L308.9,366.7 L312.5,380.0 L316.1,393.3 L319.7,406.6 L323.3,419.8 L326.9,432.9 L330.4,446.1 L334.0,459.1 L337.5,472.2 L341.0,485.1 L344.6,498.1 L348.0,511.0 L351.5,523.8 L355.0,536.6 L358.5,549.4 L361.9,562.1 M296.2,300.5 L299.9,314.1 L303.6,327.8 L307.3,341.4 L311.0,354.9 L314.6,368.4 L318.2,381.8 L321.9,395.2 L325.5,408.6 L329.1,421.9 L332.7,435.1 L336.2,448.3 L339.8,461.5 L343.3,474.6 L346.9,487.7 L350.4,500.7 L353.9,513.7 L357.4,526.7 L360.9,539.6 L364.4,552.4 L367.8,565.2 M301.8,301.7 L305.6,315.5 L309.3,329.2 L313.0,342.9 L316.6,356.5 L320.3,370.1 L323.9,383.6 L327.6,397.1 L331.2,410.6 L334.8,424.0 L338.4,437.3 L342.0,450.6 L345.6,463.9 L349.2,477.1 L352.7,490.3 L356.2,503.4 L359.8,516.5 L363.3,529.5 L366.8,542.5 L370.3,555.4 L373.8,568.3 M307.5,302.9 L311.2,316.8 L314.9,330.6 L318.6,344.4 L322.3,358.1 L326.0,371.8 L329.7,385.4 L333.3,399.0 L337.0,412.6 L340.6,426.1 L344.2,439.5 L347.8,452.9 L351.4,466.3 L355.0,479.6 L358.5,492.8 L362.1,506.0 L365.6,519.2 L369.2,532.3 L372.7,545.4 L376.2,558.5 L379.7,571.5 M313.1,304.2 L316.8,318.1 L320.6,332.0 L324.3,345.9 L328.0,359.7 L331.7,373.5 L335.4,387.2 L339.0,400.9 L342.7,414.6 L346.3,428.2 L350.0,441.7 L353.6,455.2 L357.2,468.6 L360.8,482.0 L364.4,495.4 L367.9,508.7 L371.5,522.0 L375.0,535.2 L378.6,548.4 L382.1,561.5 L385.6,574.6 M318.7,305.4 L322.5,319.5 L326.2,333.5 L329.9,347.4 L333.7,361.4 L337.4,375.2 L341.1,389.1 L344.8,402.8 L348.4,416.6 L352.1,430.2 L355.7,443.9 L359.4,457.5 L363.0,471.0 L366.6,484.5 L370.2,498.0 L373.8,511.4 L377.4,524.7 L380.9,538.0 L384.5,551.3 L388.0,564.5 L391.5,577.7 M324.3,306.6 L328.1,320.8 L331.9,334.9 L335.6,349.0 L339.3,363.0 L343.1,376.9 L346.8,390.9 L350.5,404.7 L354.2,418.6 L357.9,432.3 L361.5,446.1 L365.2,459.8 L368.8,473.4 L372.4,487.0 L376.0,500.5 L379.6,514.0 L383.2,527.5 L386.8,540.9 L390.4,554.2 L393.9,567.5 L397.5,580.8 M329.9,307.8 L333.7,322.1 L337.5,336.3 L341.3,350.5 L345.0,364.6 L348.8,378.7 L352.5,392.7 L356.2,406.6 L359.9,420.6 L363.6,434.4 L367.3,448.3 L371.0,462.0 L374.6,475.8 L378.2,489.4 L381.9,503.1 L385.5,516.7 L389.1,530.2 L392.7,543.7 L396.3,557.2 L399.8,570.6 L403.4,583.9 M335.5,309.1 L339.3,323.4 L343.1,337.7 L346.9,352.0 L350.7,366.2 L354.5,380.4 L358.2,394.5 L361.9,408.5 L365.7,422.6 L369.4,436.5 L373.1,450.4 L376.7,464.3 L380.4,478.1 L384.1,491.9 L387.7,505.6 L391.3,519.3 L395.0,533.0 L398.6,546.5 L402.2,560.1 L405.7,573.6 L409.3,587.0 M341.2,310.3 L345.0,324.8 L348.8,339.2 L352.6,353.5 L356.4,367.8 L360.2,382.1 L363.9,396.3 L367.7,410.5 L371.4,424.6 L375.1,438.6 L378.8,452.6 L382.5,466.6 L386.2,480.5 L389.9,494.4 L393.5,508.2 L397.2,522.0 L400.8,535.7 L404.4,549.4 L408.0,563.0 L411.6,576.6 L415.2,590.2 M346.8,311.5 L350.6,326.1 L354.4,340.6 L358.3,355.0 L362.1,369.5 L365.8,383.8 L369.6,398.1 L373.4,412.4 L377.1,426.6 L380.9,440.7 L384.6,454.8 L388.3,468.9 L392.0,482.9 L395.7,496.9 L399.4,510.8 L403.0,524.6 L406.7,538.5 L410.3,552.2 L413.9,566.0 L417.6,579.6 L421.2,593.3 M352.4,312.8 L356.2,327.4 L360.1,342.0 L363.9,356.6 L367.7,371.1 L371.5,385.5 L375.3,399.9 L379.1,414.3 L382.9,428.6 L386.6,442.8 L390.4,457.0 L394.1,471.2 L397.8,485.3 L401.5,499.3 L405.2,513.3 L408.9,527.3 L412.5,541.2 L416.2,555.1 L419.8,568.9 L423.5,582.7 L427.1,596.4 M358.0,314.0 L361.9,328.7 L365.7,343.4 L369.6,358.1 L373.4,372.7 L377.2,387.2 L381.0,401.7 L384.8,416.2 L388.6,430.6 L392.4,444.9 L396.1,459.2 L399.9,473.5 L403.6,487.6 L407.3,501.8 L411.0,515.9 L414.7,530.0 L418.4,544.0 L422.1,557.9 L425.7,571.8 L429.4,585.7 L433.0,599.5 M285.0,298.0 L290.6,299.2 L296.2,300.5 L301.8,301.7 L307.5,302.9 L313.1,304.2 L318.7,305.4 L324.3,306.6 L329.9,307.8 L335.5,309.1 L341.2,310.3 L346.8,311.5 L352.4,312.8 L358.0,314.0 M288.7,311.5 L294.3,312.8 L299.9,314.1 L305.6,315.5 L311.2,316.8 L316.8,318.1 L322.5,319.5 L328.1,320.8 L333.7,322.1 L339.3,323.4 L345.0,324.8 L350.6,326.1 L356.2,327.4 L361.9,328.7 M292.3,324.9 L298.0,326.3 L303.6,327.8 L309.3,329.2 L314.9,330.6 L320.6,332.0 L326.2,333.5 L331.9,334.9 L337.5,336.3 L343.1,337.7 L348.8,339.2 L354.4,340.6 L360.1,342.0 L365.7,343.4 M296.0,338.3 L301.6,339.8 L307.3,341.4 L313.0,342.9 L318.6,344.4 L324.3,345.9 L329.9,347.4 L335.6,349.0 L341.3,350.5 L346.9,352.0 L352.6,353.5 L358.3,355.0 L363.9,356.6 L369.6,358.1 M299.6,351.7 L305.3,353.3 L311.0,354.9 L316.6,356.5 L322.3,358.1 L328.0,359.7 L333.7,361.4 L339.3,363.0 L345.0,364.6 L350.7,366.2 L356.4,367.8 L362.1,369.5 L367.7,371.1 L373.4,372.7 M303.2,364.9 L308.9,366.7 L314.6,368.4 L320.3,370.1 L326.0,371.8 L331.7,373.5 L337.4,375.2 L343.1,376.9 L348.8,378.7 L354.5,380.4 L360.2,382.1 L365.8,383.8 L371.5,385.5 L377.2,387.2 M306.8,378.2 L312.5,380.0 L318.2,381.8 L323.9,383.6 L329.7,385.4 L335.4,387.2 L341.1,389.1 L346.8,390.9 L352.5,392.7 L358.2,394.5 L363.9,396.3 L369.6,398.1 L375.3,399.9 L381.0,401.7 M310.4,391.4 L316.1,393.3 L321.9,395.2 L327.6,397.1 L333.3,399.0 L339.0,400.9 L344.8,402.8 L350.5,404.7 L356.2,406.6 L361.9,408.5 L367.7,410.5 L373.4,412.4 L379.1,414.3 L384.8,416.2 M314.0,404.6 L319.7,406.6 L325.5,408.6 L331.2,410.6 L337.0,412.6 L342.7,414.6 L348.4,416.6 L354.2,418.6 L359.9,420.6 L365.7,422.6 L371.4,424.6 L377.1,426.6 L382.9,428.6 L388.6,430.6 M317.6,417.7 L323.3,419.8 L329.1,421.9 L334.8,424.0 L340.6,426.1 L346.3,428.2 L352.1,430.2 L357.9,432.3 L363.6,434.4 L369.4,436.5 L375.1,438.6 L380.9,440.7 L386.6,442.8 L392.4,444.9 M321.1,430.7 L326.9,432.9 L332.7,435.1 L338.4,437.3 L344.2,439.5 L350.0,441.7 L355.7,443.9 L361.5,446.1 L367.3,448.3 L373.1,450.4 L378.8,452.6 L384.6,454.8 L390.4,457.0 L396.1,459.2 M324.7,443.8 L330.4,446.1 L336.2,448.3 L342.0,450.6 L347.8,452.9 L353.6,455.2 L359.4,457.5 L365.2,459.8 L371.0,462.0 L376.7,464.3 L382.5,466.6 L388.3,468.9 L394.1,471.2 L399.9,473.5 M328.2,456.7 L334.0,459.1 L339.8,461.5 L345.6,463.9 L351.4,466.3 L357.2,468.6 L363.0,471.0 L368.8,473.4 L374.6,475.8 L380.4,478.1 L386.2,480.5 L392.0,482.9 L397.8,485.3 L403.6,487.6 M331.7,469.7 L337.5,472.2 L343.3,474.6 L349.2,477.1 L355.0,479.6 L360.8,482.0 L366.6,484.5 L372.4,487.0 L378.2,489.4 L384.1,491.9 L389.9,494.4 L395.7,496.9 L401.5,499.3 L407.3,501.8 M335.2,482.6 L341.0,485.1 L346.9,487.7 L352.7,490.3 L358.5,492.8 L364.4,495.4 L370.2,498.0 L376.0,500.5 L381.9,503.1 L387.7,505.6 L393.5,508.2 L399.4,510.8 L405.2,513.3 L411.0,515.9 M338.7,495.4 L344.6,498.1 L350.4,500.7 L356.2,503.4 L362.1,506.0 L367.9,508.7 L373.8,511.4 L379.6,514.0 L385.5,516.7 L391.3,519.3 L397.2,522.0 L403.0,524.6 L408.9,527.3 L414.7,530.0 M342.2,508.2 L348.0,511.0 L353.9,513.7 L359.8,516.5 L365.6,519.2 L371.5,522.0 L377.4,524.7 L383.2,527.5 L389.1,530.2 L395.0,533.0 L400.8,535.7 L406.7,538.5 L412.5,541.2 L418.4,544.0 M345.7,521.0 L351.5,523.8 L357.4,526.7 L363.3,529.5 L369.2,532.3 L375.0,535.2 L380.9,538.0 L386.8,540.9 L392.7,543.7 L398.6,546.5 L404.4,549.4 L410.3,552.2 L416.2,555.1 L422.1,557.9 M349.1,533.7 L355.0,536.6 L360.9,539.6 L366.8,542.5 L372.7,545.4 L378.6,548.4 L384.5,551.3 L390.4,554.2 L396.3,557.2 L402.2,560.1 L408.0,563.0 L413.9,566.0 L419.8,568.9 L425.7,571.8 M352.6,546.4 L358.5,549.4 L364.4,552.4 L370.3,555.4 L376.2,558.5 L382.1,561.5 L388.0,564.5 L393.9,567.5 L399.8,570.6 L405.7,573.6 L411.6,576.6 L417.6,579.6 L423.5,582.7 L429.4,585.7 M356.0,559.0 L361.9,562.1 L367.8,565.2 L373.8,568.3 L379.7,571.5 L385.6,574.6 L391.5,577.7 L397.5,580.8 L403.4,583.9 L409.3,587.0 L415.2,590.2 L421.2,593.3 L427.1,596.4 L433.0,599.5" stroke="#151515" stroke-width="1" fill="none"/>
<polygon points="358.0,314.0 1010.0,102.5 1042.0,328.0 433.0,599.5" fill="#d6d6d6"/>
<path d="M358.0,314.0 L361.9,328.7 L365.7,343.4 L369.6,358.1 L373.4,372.7 L377.2,387.2 L381.0,401.7 L384.8,416.2 L388.6,430.6 L392.4,444.9 L396.1,459.2 L399.9,473.5 L403.6,487.6 L407.3,501.8 L411.0,515.9 L414.7,530.0 L418.4,544.0 L422.1,557.9 L425.7,571.8 L429.4,585.7 L433.0,599.5 M372.6,309.3 L376.4,324.0 L380.1,338.6 L383.9,353.2 L387.6,367.8 L391.3,382.3 L395.0,396.7 L398.7,411.1 L402.4,425.5 L406.0,439.8 L409.7,454.0 L413.3,468.2 L417.0,482.4 L420.6,496.5 L424.2,510.6 L427.8,524.6 L431.3,538.5 L434.9,552.5 L438.4,566.3 L442.0,580.1 L445.5,593.9 M387.1,304.6 L390.7,319.2 L394.4,333.8 L398.0,348.4 L401.7,362.9 L405.3,377.4 L408.9,391.8 L412.4,406.1 L416.0,420.4 L419.6,434.7 L423.1,448.9 L426.7,463.1 L430.2,477.2 L433.7,491.3 L437.2,505.3 L440.7,519.2 L444.2,533.2 L447.6,547.0 L451.1,560.9 L454.5,574.6 L458.0,588.4 M401.4,299.9 L405.0,314.5 L408.5,329.1 L412.1,343.6 L415.6,358.1 L419.1,372.5 L422.6,386.9 L426.1,401.2 L429.5,415.4 L433.0,429.7 L436.5,443.8 L439.9,457.9 L443.3,472.0 L446.7,486.0 L450.1,500.0 L453.5,513.9 L456.9,527.8 L460.3,541.6 L463.6,555.4 L467.0,569.2 L470.3,582.9 M415.6,295.3 L419.1,309.9 L422.5,324.4 L425.9,338.9 L429.4,353.3 L432.8,367.7 L436.2,382.0 L439.6,396.3 L443.0,410.5 L446.3,424.7 L449.7,438.8 L453.0,452.9 L456.4,466.9 L459.7,480.9 L463.0,494.8 L466.3,508.7 L469.6,522.5 L472.8,536.3 L476.1,550.0 L479.4,563.7 L482.6,577.4 M429.7,290.8 L433.0,305.3 L436.4,319.8 L439.7,334.2 L443.0,348.6 L446.4,362.9 L449.7,377.2 L453.0,391.4 L456.3,405.6 L459.5,419.7 L462.8,433.8 L466.0,447.8 L469.3,461.8 L472.5,475.7 L475.7,489.6 L478.9,503.4 L482.1,517.2 L485.3,531.0 L488.5,544.7 L491.7,558.3 L494.8,571.9 M443.6,286.2 L446.8,300.7 L450.1,315.2 L453.4,329.5 L456.6,343.9 L459.8,358.1 L463.0,372.4 L466.3,386.5 L469.4,400.7 L472.6,414.8 L475.8,428.8 L479.0,442.8 L482.1,456.7 L485.3,470.6 L488.4,484.5 L491.5,498.2 L494.6,512.0 L497.7,525.7 L500.8,539.4 L503.9,553.0 L507.0,566.5 M457.3,281.8 L460.5,296.2 L463.7,310.6 L466.9,324.9 L470.0,339.2 L473.2,353.4 L476.3,367.6 L479.4,381.8 L482.5,395.8 L485.6,409.9 L488.7,423.9 L491.8,437.8 L494.9,451.7 L497.9,465.5 L501.0,479.3 L504.0,493.1 L507.0,506.8 L510.0,520.5 L513.0,534.1 L516.0,547.6 L519.0,561.1 M471.0,277.3 L474.1,291.7 L477.2,306.1 L480.3,320.4 L483.3,334.6 L486.4,348.8 L489.4,362.9 L492.5,377.0 L495.5,391.0 L498.5,405.0 L501.5,419.0 L504.5,432.9 L507.5,446.7 L510.5,460.5 L513.4,474.3 L516.4,488.0 L519.3,501.6 L522.3,515.2 L525.2,528.8 L528.1,542.3 L531.0,555.8 M484.5,273.0 L487.5,287.3 L490.5,301.6 L493.5,315.8 L496.5,330.0 L499.5,344.1 L502.5,358.2 L505.4,372.3 L508.4,386.3 L511.3,400.2 L514.2,414.1 L517.1,428.0 L520.1,441.8 L522.9,455.5 L525.8,469.2 L528.7,482.9 L531.6,496.5 L534.4,510.1 L537.3,523.6 L540.1,537.1 L542.9,550.5 M497.9,268.6 L500.8,282.9 L503.8,297.1 L506.7,311.3 L509.6,325.5 L512.5,339.6 L515.4,353.6 L518.3,367.6 L521.1,381.5 L524.0,395.4 L526.8,409.3 L529.7,423.1 L532.5,436.8 L535.3,450.5 L538.1,464.2 L540.9,477.8 L543.7,491.4 L546.5,504.9 L549.3,518.4 L552.0,531.8 L554.8,545.2 M511.2,264.3 L514.0,278.6 L516.9,292.7 L519.7,306.9 L522.6,321.0 L525.4,335.0 L528.2,349.0 L531.0,363.0 L533.8,376.9 L536.6,390.7 L539.3,404.5 L542.1,418.3 L544.9,432.0 L547.6,445.6 L550.4,459.2 L553.1,472.8 L555.8,486.3 L558.5,499.8 L561.2,513.2 L563.9,526.6 L566.6,539.9 M524.3,260.1 L527.1,274.2 L529.9,288.4 L532.6,302.5 L535.4,316.5 L538.2,330.5 L540.9,344.5 L543.6,358.3 L546.3,372.2 L549.1,386.0 L551.8,399.8 L554.5,413.5 L557.1,427.1 L559.8,440.7 L562.5,454.3 L565.1,467.8 L567.8,481.3 L570.4,494.7 L573.1,508.1 L575.7,521.4 L578.3,534.7 M537.3,255.8 L540.0,270.0 L542.7,284.1 L545.4,298.1 L548.1,312.1 L550.8,326.0 L553.5,339.9 L556.1,353.8 L558.8,367.6 L561.4,381.3 L564.1,395.0 L566.7,408.7 L569.3,422.3 L571.9,435.9 L574.5,449.4 L577.1,462.9 L579.7,476.3 L582.3,489.7 L584.8,503.0 L587.4,516.3 L589.9,529.5 M550.2,251.6 L552.9,265.7 L555.5,279.8 L558.1,293.8 L560.8,307.7 L563.4,321.6 L566.0,335.5 L568.6,349.2 L571.2,363.0 L573.7,376.7 L576.3,390.4 L578.9,404.0 L581.4,417.5 L584.0,431.0 L586.5,444.5 L589.0,457.9 L591.5,471.3 L594.0,484.6 L596.5,497.9 L599.0,511.2 L601.5,524.4 M563.0,247.5 L565.6,261.5 L568.1,275.5 L570.7,289.5 L573.3,303.4 L575.8,317.2 L578.4,331.0 L580.9,344.8 L583.4,358.5 L585.9,372.1 L588.4,385.7 L590.9,399.3 L593.4,412.8 L595.9,426.3 L598.4,439.7 L600.8,453.0 L603.3,466.4 L605.7,479.7 L608.2,492.9 L610.6,506.1 L613.0,519.2 M575.6,243.4 L578.2,257.4 L580.7,271.3 L583.2,285.2 L585.7,299.1 L588.2,312.8 L590.6,326.6 L593.1,340.3 L595.6,353.9 L598.0,367.5 L600.5,381.1 L602.9,394.6 L605.3,408.1 L607.8,421.5 L610.2,434.9 L612.6,448.2 L615.0,461.5 L617.3,474.7 L619.7,487.9 L622.1,501.0 L624.5,514.1 M588.2,239.3 L590.6,253.3 L593.1,267.2 L595.5,281.0 L598.0,294.8 L600.4,308.5 L602.8,322.2 L605.2,335.9 L607.6,349.5 L610.0,363.0 L612.4,376.5 L614.8,390.0 L617.2,403.4 L619.5,416.8 L621.9,430.1 L624.2,443.4 L626.6,456.6 L628.9,469.8 L631.2,482.9 L633.5,496.0 L635.8,509.1 M600.6,235.3 L603.0,249.2 L605.4,263.0 L607.8,276.8 L610.2,290.5 L612.5,304.2 L614.9,317.9 L617.3,331.5 L619.6,345.0 L621.9,358.5 L624.3,372.0 L626.6,385.4 L628.9,398.8 L631.2,412.1 L633.5,425.3 L635.8,438.6 L638.1,451.8 L640.4,464.9 L642.6,478.0 L644.9,491.0 L647.1,504.0 M612.9,231.3 L615.3,245.1 L617.6,258.9 L619.9,272.7 L622.3,286.3 L624.6,300.0 L626.9,313.6 L629.2,327.1 L631.5,340.6 L633.8,354.1 L636.0,367.5 L638.3,380.8 L640.6,394.1 L642.8,407.4 L645.1,420.6 L647.3,433.8 L649.5,446.9 L651.8,460.0 L654.0,473.1 L656.2,486.1 L658.4,499.0 M625.1,227.3 L627.4,241.1 L629.7,254.9 L632.0,268.5 L634.3,282.2 L636.5,295.8 L638.8,309.3 L641.0,322.8 L643.3,336.2 L645.5,349.6 L647.7,363.0 L649.9,376.3 L652.1,389.6 L654.3,402.8 L656.5,415.9 L658.7,429.1 L660.9,442.2 L663.1,455.2 L665.2,468.2 L667.4,481.1 L669.6,494.0 M637.2,223.4 L639.5,237.2 L641.7,250.8 L643.9,264.5 L646.1,278.0 L648.4,291.6 L650.6,305.1 L652.8,318.5 L655.0,331.9 L657.1,345.2 L659.3,358.5 L661.5,371.8 L663.6,385.0 L665.8,398.2 L667.9,411.3 L670.1,424.4 L672.2,437.4 L674.3,450.4 L676.5,463.3 L678.6,476.2 L680.7,489.1 M649.2,219.5 L651.4,233.2 L653.6,246.8 L655.8,260.4 L657.9,273.9 L660.1,287.4 L662.3,300.9 L664.4,314.2 L666.6,327.6 L668.7,340.9 L670.8,354.1 L672.9,367.3 L675.1,380.5 L677.2,393.6 L679.3,406.7 L681.4,419.7 L683.4,432.7 L685.5,445.6 L687.6,458.5 L689.7,471.4 L691.7,484.2 M661.1,215.7 L663.2,229.3 L665.4,242.9 L667.5,256.4 L669.6,269.9 L671.7,283.3 L673.9,296.7 L676.0,310.0 L678.1,323.3 L680.2,336.5 L682.2,349.7 L684.3,362.9 L686.4,376.0 L688.5,389.1 L690.5,402.1 L692.6,415.1 L694.6,428.0 L696.6,440.9 L698.7,453.7 L700.7,466.5 L702.7,479.3 M672.8,211.9 L674.9,225.4 L677.0,238.9 L679.1,252.4 L681.2,265.8 L683.3,279.2 L685.4,292.5 L687.4,305.8 L689.5,319.1 L691.5,332.2 L693.6,345.4 L695.6,358.5 L697.6,371.5 L699.7,384.6 L701.7,397.5 L703.7,410.4 L705.7,423.3 L707.7,436.2 L709.7,448.9 L711.6,461.7 L713.6,474.4 M684.5,208.1 L686.6,221.6 L688.6,235.1 L690.7,248.5 L692.7,261.8 L694.8,275.2 L696.8,288.4 L698.8,301.7 L700.8,314.8 L702.8,328.0 L704.8,341.1 L706.8,354.1 L708.8,367.1 L710.8,380.1 L712.8,393.0 L714.7,405.9 L716.7,418.7 L718.7,431.5 L720.6,444.2 L722.5,456.9 L724.5,469.6 M696.1,204.3 L698.1,217.8 L700.1,231.2 L702.1,244.6 L704.1,257.9 L706.1,271.1 L708.1,284.4 L710.1,297.5 L712.1,310.7 L714.0,323.7 L716.0,336.8 L718.0,349.8 L719.9,362.7 L721.9,375.6 L723.8,388.5 L725.7,401.3 L727.6,414.1 L729.6,426.8 L731.5,439.5 L733.4,452.1 L735.3,464.7 M707.5,200.6 L709.5,214.0 L711.5,227.4 L713.5,240.7 L715.4,253.9 L717.4,267.1 L719.4,280.3 L721.3,293.4 L723.2,306.5 L725.2,319.5 L727.1,332.5 L729.0,345.5 L730.9,358.4 L732.8,371.2 L734.7,384.0 L736.6,396.8 L738.5,409.5 L740.4,422.2 L742.3,434.8 L744.1,447.4 L746.0,460.0 M718.9,196.9 L720.8,210.3 L722.8,223.6 L724.7,236.8 L726.7,250.0 L728.6,263.2 L730.5,276.3 L732.4,289.4 L734.3,302.4 L736.2,315.4 L738.1,328.3 L740.0,341.2 L741.9,354.0 L743.8,366.8 L745.6,379.6 L747.5,392.3 L749.3,405.0 L751.2,417.6 L753.0,430.2 L754.9,442.7 L756.7,455.2 M730.2,193.3 L732.1,206.6 L734.0,219.8 L735.9,233.0 L737.8,246.1 L739.7,259.2 L741.6,272.3 L743.4,285.3 L745.3,298.3 L747.2,311.2 L749.0,324.1 L750.9,336.9 L752.7,349.7 L754.6,362.5 L756.4,375.2 L758.3,387.8 L760.1,400.4 L761.9,413.0 L763.7,425.5 L765.5,438.0 L767.3,450.5 M741.3,189.7 L743.2,202.9 L745.1,216.1 L747.0,229.2 L748.8,242.3 L750.7,255.3 L752.5,268.4 L754.4,281.3 L756.2,294.2 L758.1,307.1 L759.9,319.9 L761.7,332.7 L763.5,345.4 L765.4,358.1 L767.2,370.8 L769.0,383.4 L770.7,395.9 L772.5,408.5 L774.3,420.9 L776.1,433.4 L777.9,445.8 M752.4,186.1 L754.2,199.2 L756.1,212.4 L757.9,225.5 L759.8,238.5 L761.6,251.5 L763.4,264.4 L765.3,277.3 L767.1,290.2 L768.9,303.0 L770.7,315.8 L772.5,328.5 L774.3,341.2 L776.0,353.8 L777.8,366.4 L779.6,379.0 L781.4,391.5 L783.1,403.9 L784.9,416.4 L786.6,428.7 L788.4,441.1 M763.4,182.5 L765.2,195.6 L767.0,208.7 L768.8,221.7 L770.6,234.7 L772.4,247.6 L774.2,260.5 L776.0,273.4 L777.8,286.2 L779.6,298.9 L781.4,311.7 L783.1,324.3 L784.9,336.9 L786.7,349.5 L788.4,362.1 L790.2,374.6 L791.9,387.0 L793.6,399.4 L795.4,411.8 L797.1,424.1 L798.8,436.4 M774.2,179.0 L776.0,192.0 L777.8,205.1 L779.6,218.0 L781.4,230.9 L783.2,243.8 L785.0,256.7 L786.7,269.5 L788.5,282.2 L790.3,294.9 L792.0,307.6 L793.7,320.2 L795.5,332.8 L797.2,345.3 L798.9,357.8 L800.7,370.2 L802.4,382.6 L804.1,395.0 L805.8,407.3 L807.5,419.6 L809.2,431.8 M785.0,175.5 L786.8,188.5 L788.6,201.4 L790.3,214.4 L792.1,227.2 L793.9,240.0 L795.6,252.8 L797.4,265.6 L799.1,278.3 L800.8,290.9 L802.6,303.5 L804.3,316.1 L806.0,328.6 L807.7,341.1 L809.4,353.5 L811.1,365.9 L812.8,378.2 L814.5,390.5 L816.1,402.8 L817.8,415.0 L819.5,427.2 M795.7,172.0 L797.5,185.0 L799.2,197.9 L801.0,210.7 L802.7,223.5 L804.4,236.3 L806.2,249.0 L807.9,261.7 L809.6,274.3 L811.3,286.9 L813.0,299.5 L814.7,312.0 L816.4,324.4 L818.1,336.9 L819.8,349.2 L821.5,361.6 L823.1,373.9 L824.8,386.1 L826.5,398.3 L828.1,410.5 L829.8,422.6 M806.3,168.6 L808.1,181.5 L809.8,194.3 L811.5,207.1 L813.2,219.9 L815.0,232.6 L816.7,245.2 L818.4,257.9 L820.1,270.4 L821.7,283.0 L823.4,295.5 L825.1,307.9 L826.8,320.3 L828.5,332.7 L830.1,345.0 L831.8,357.3 L833.4,369.5 L835.1,381.7 L836.7,393.9 L838.3,406.0 L840.0,418.1 M816.8,165.2 L818.6,178.0 L820.3,190.8 L822.0,203.5 L823.7,216.2 L825.4,228.9 L827.1,241.5 L828.7,254.0 L830.4,266.6 L832.1,279.1 L833.8,291.5 L835.4,303.9 L837.1,316.2 L838.7,328.5 L840.4,340.8 L842.0,353.0 L843.6,365.2 L845.3,377.4 L846.9,389.5 L848.5,401.5 L850.1,413.5 M827.3,161.8 L829.0,174.6 L830.7,187.3 L832.4,200.0 L834.0,212.6 L835.7,225.2 L837.4,237.8 L839.1,250.3 L840.7,262.7 L842.4,275.2 L844.0,287.5 L845.7,299.9 L847.3,312.2 L848.9,324.4 L850.6,336.6 L852.2,348.8 L853.8,360.9 L855.4,373.0 L857.0,385.1 L858.6,397.1 L860.2,409.0 M837.6,158.4 L839.3,171.1 L841.0,183.8 L842.6,196.4 L844.3,209.0 L846.0,221.6 L847.6,234.1 L849.3,246.5 L850.9,258.9 L852.6,271.3 L854.2,283.6 L855.8,295.9 L857.5,308.1 L859.1,320.3 L860.7,332.5 L862.3,344.6 L863.9,356.7 L865.5,368.7 L867.1,380.7 L868.7,392.7 L870.2,404.6 M847.9,155.1 L849.5,167.8 L851.2,180.4 L852.9,192.9 L854.5,205.5 L856.2,217.9 L857.8,230.4 L859.4,242.8 L861.1,255.1 L862.7,267.4 L864.3,279.7 L865.9,291.9 L867.6,304.1 L869.2,316.3 L870.8,328.4 L872.3,340.4 L873.9,352.4 L875.5,364.4 L877.1,376.4 L878.7,388.3 L880.2,400.1 M858.0,151.8 L859.7,164.4 L861.3,177.0 L863.0,189.5 L864.6,201.9 L866.3,214.4 L867.9,226.7 L869.5,239.1 L871.1,251.4 L872.8,263.6 L874.4,275.8 L876.0,288.0 L877.6,300.1 L879.2,312.2 L880.8,324.3 L882.3,336.3 L883.9,348.2 L885.5,360.2 L887.0,372.0 L888.6,383.9 L890.2,395.7 M868.1,148.5 L869.8,161.1 L871.4,173.6 L873.0,186.0 L874.7,198.4 L876.3,210.8 L877.9,223.1 L879.5,235.4 L881.1,247.6 L882.8,259.8 L884.4,272.0 L885.9,284.1 L887.5,296.2 L889.1,308.2 L890.7,320.2 L892.3,332.1 L893.8,344.1 L895.4,355.9 L896.9,367.8 L898.5,379.5 L900.0,391.3 M878.1,145.3 L879.8,157.8 L881.4,170.2 L883.0,182.6 L884.6,195.0 L886.3,207.3 L887.9,219.5 L889.5,231.8 L891.1,243.9 L892.7,256.1 L894.3,268.2 L895.8,280.2 L897.4,292.2 L899.0,304.2 L900.6,316.2 L902.1,328.0 L903.7,339.9 L905.2,351.7 L906.8,363.5 L908.3,375.2 L909.9,386.9 M888.0,142.1 L889.7,154.5 L891.3,166.9 L892.9,179.2 L894.5,191.5 L896.1,203.8 L897.7,216.0 L899.3,228.1 L900.9,240.3 L902.5,252.3 L904.1,264.4 L905.7,276.4 L907.3,288.3 L908.8,300.3 L910.4,312.1 L911.9,324.0 L913.5,335.8 L915.0,347.5 L916.6,359.2 L918.1,370.9 L919.6,382.6 M897.9,138.9 L899.5,151.2 L901.1,163.6 L902.7,175.8 L904.3,188.1 L906.0,200.3 L907.5,212.4 L909.1,224.5 L910.7,236.6 L912.3,248.6 L913.9,260.6 L915.5,272.5 L917.0,284.4 L918.6,296.3 L920.1,308.1 L921.7,319.9 L923.2,331.7 L924.8,343.4 L926.3,355.0 L927.8,366.6 L929.4,378.2 M907.6,135.7 L909.3,148.0 L910.9,160.3 L912.5,172.5 L914.1,184.7 L915.7,196.8 L917.3,208.9 L918.9,221.0 L920.4,233.0 L922.0,244.9 L923.6,256.9 L925.2,268.7 L926.7,280.6 L928.3,292.4 L929.8,304.2 L931.4,315.9 L932.9,327.6 L934.4,339.2 L936.0,350.8 L937.5,362.4 L939.0,373.9 M917.3,132.6 L918.9,144.8 L920.5,157.0 L922.2,169.2 L923.8,181.3 L925.3,193.4 L926.9,205.4 L928.5,217.4 L930.1,229.4 L931.7,241.3 L933.2,253.1 L934.8,265.0 L936.4,276.8 L937.9,288.5 L939.5,300.2 L941.0,311.9 L942.5,323.5 L944.1,335.1 L945.6,346.6 L947.1,358.2 L948.6,369.6 M926.9,129.4 L928.5,141.6 L930.1,153.8 L931.8,165.9 L933.3,177.9 L934.9,190.0 L936.5,201.9 L938.1,213.9 L939.7,225.8 L941.3,237.6 L942.8,249.4 L944.4,261.2 L945.9,272.9 L947.5,284.6 L949.0,296.3 L950.6,307.9 L952.1,319.5 L953.6,331.0 L955.2,342.5 L956.7,353.9 L958.2,365.4 M936.4,126.4 L938.1,138.5 L939.7,150.6 L941.3,162.6 L942.9,174.6 L944.5,186.6 L946.1,198.5 L947.6,210.4 L949.2,222.2 L950.8,234.0 L952.3,245.8 L953.9,257.5 L955.5,269.1 L957.0,280.8 L958.6,292.4 L960.1,303.9 L961.6,315.4 L963.2,326.9 L964.7,338.4 L966.2,349.8 L967.7,361.1 M945.9,123.3 L947.5,135.4 L949.1,147.4 L950.7,159.4 L952.3,171.3 L953.9,183.2 L955.5,195.1 L957.1,206.9 L958.7,218.7 L960.2,230.4 L961.8,242.1 L963.4,253.8 L964.9,265.4 L966.5,277.0 L968.0,288.5 L969.5,300.0 L971.1,311.5 L972.6,322.9 L974.1,334.3 L975.7,345.6 L977.2,356.9 M955.3,120.3 L956.9,132.3 L958.5,144.2 L960.1,156.2 L961.7,168.0 L963.3,179.9 L964.9,191.7 L966.5,203.4 L968.1,215.2 L969.6,226.8 L971.2,238.5 L972.8,250.1 L974.3,261.6 L975.9,273.2 L977.4,284.6 L978.9,296.1 L980.5,307.5 L982.0,318.8 L983.5,330.2 L985.1,341.5 L986.6,352.7 M964.6,117.2 L966.2,129.2 L967.8,141.1 L969.4,153.0 L971.0,164.8 L972.6,176.6 L974.2,188.3 L975.8,200.0 L977.4,211.7 L979.0,223.3 L980.5,234.9 L982.1,246.4 L983.6,257.9 L985.2,269.4 L986.8,280.8 L988.3,292.2 L989.8,303.5 L991.4,314.8 L992.9,326.1 L994.4,337.3 L995.9,348.5 M973.8,114.2 L975.4,126.1 L977.0,138.0 L978.7,149.8 L980.3,161.6 L981.9,173.3 L983.5,185.0 L985.1,196.6 L986.6,208.2 L988.2,219.8 L989.8,231.3 L991.4,242.8 L992.9,254.2 L994.5,265.6 L996.0,277.0 L997.6,288.3 L999.1,299.6 L1000.7,310.9 L1002.2,322.1 L1003.7,333.2 L1005.2,344.4 M983.0,111.3 L984.6,123.1 L986.2,134.9 L987.8,146.6 L989.4,158.3 L991.1,170.0 L992.7,181.6 L994.2,193.2 L995.8,204.8 L997.4,216.3 L999.0,227.7 L1000.6,239.2 L1002.1,250.5 L1003.7,261.9 L1005.3,273.2 L1006.8,284.5 L1008.4,295.7 L1009.9,306.9 L1011.4,318.1 L1013.0,329.2 L1014.5,340.3 M992.0,108.3 L993.7,120.1 L995.3,131.8 L996.9,143.5 L998.6,155.2 L1000.2,166.8 L1001.8,178.3 L1003.4,189.9 L1005.0,201.3 L1006.6,212.8 L1008.2,224.2 L1009.7,235.6 L1011.3,246.9 L1012.9,258.2 L1014.4,269.4 L1016.0,280.7 L1017.6,291.8 L1019.1,303.0 L1020.6,314.1 L1022.2,325.1 L1023.7,336.2 M1001.1,105.4 L1002.7,117.1 L1004.3,128.8 L1006.0,140.4 L1007.6,152.0 L1009.2,163.5 L1010.8,175.0 L1012.4,186.5 L1014.1,197.9 L1015.7,209.3 L1017.2,220.7 L1018.8,232.0 L1020.4,243.3 L1022.0,254.5 L1023.6,265.7 L1025.1,276.8 L1026.7,288.0 L1028.2,299.0 L1029.8,310.1 L1031.3,321.1 L1032.9,332.1 M1010.0,102.5 L1011.7,114.1 L1013.3,125.8 L1014.9,137.3 L1016.6,148.9 L1018.2,160.3 L1019.8,171.8 L1021.5,183.2 L1023.1,194.6 L1024.7,205.9 L1026.3,217.2 L1027.9,228.4 L1029.5,239.7 L1031.0,250.8 L1032.6,262.0 L1034.2,273.1 L1035.8,284.1 L1037.3,295.2 L1038.9,306.1 L1040.5,317.1 L1042.0,328.0 M358.0,314.0 L372.6,309.3 L387.1,304.6 L401.4,299.9 L415.6,295.3 L429.7,290.8 L443.6,286.2 L457.3,281.8 L471.0,277.3 L484.5,273.0 L497.9,268.6 L511.2,264.3 L524.3,260.1 L537.3,255.8 L550.2,251.6 L563.0,247.5 L575.6,243.4 L588.2,239.3 L600.6,235.3 L612.9,231.3 L625.1,227.3 L637.2,223.4 L649.2,219.5 L661.1,215.7 L672.8,211.9 L684.5,208.1 L696.1,204.3 L707.5,200.6 L718.9,196.9 L730.2,193.3 L741.3,189.7 L752.4,186.1 L763.4,182.5 L774.2,179.0 L785.0,175.5 L795.7,172.0 L806.3,168.6 L816.8,165.2 L827.3,161.8 L837.6,158.4 L847.9,155.1 L858.0,151.8 L868.1,148.5 L878.1,145.3 L888.0,142.1 L897.9,138.9 L907.6,135.7 L917.3,132.6 L926.9,129.4 L936.4,126.4 L945.9,123.3 L955.3,120.3 L964.6,117.2 L973.8,114.2 L983.0,111.3 L992.0,108.3 L1001.1,105.4 L1010.0,102.5 M361.9,328.7 L376.4,324.0 L390.7,319.2 L405.0,314.5 L419.1,309.9 L433.0,305.3 L446.8,300.7 L460.5,296.2 L474.1,291.7 L487.5,287.3 L500.8,282.9 L514.0,278.6 L527.1,274.2 L540.0,270.0 L552.9,265.7 L565.6,261.5 L578.2,257.4 L590.6,253.3 L603.0,249.2 L615.3,245.1 L627.4,241.1 L639.5,237.2 L651.4,233.2 L663.2,229.3 L674.9,225.4 L686.6,221.6 L698.1,217.8 L709.5,214.0 L720.8,210.3 L732.1,206.6 L743.2,202.9 L754.2,199.2 L765.2,195.6 L776.0,192.0 L786.8,188.5 L797.5,185.0 L808.1,181.5 L818.6,178.0 L829.0,174.6 L839.3,171.1 L849.5,167.8 L859.7,164.4 L869.8,161.1 L879.8,157.8 L889.7,154.5 L899.5,151.2 L909.3,148.0 L918.9,144.8 L928.5,141.6 L938.1,138.5 L947.5,135.4 L956.9,132.3 L966.2,129.2 L975.4,126.1 L984.6,123.1 L993.7,120.1 L1002.7,117.1 L1011.7,114.1 M365.7,343.4 L380.1,338.6 L394.4,333.8 L408.5,329.1 L422.5,324.4 L436.4,319.8 L450.1,315.2 L463.7,310.6 L477.2,306.1 L490.5,301.6 L503.8,297.1 L516.9,292.7 L529.9,288.4 L542.7,284.1 L555.5,279.8 L568.1,275.5 L580.7,271.3 L593.1,267.2 L605.4,263.0 L617.6,258.9 L629.7,254.9 L641.7,250.8 L653.6,246.8 L665.4,242.9 L677.0,238.9 L688.6,235.1 L700.1,231.2 L711.5,227.4 L722.8,223.6 L734.0,219.8 L745.1,216.1 L756.1,212.4 L767.0,208.7 L777.8,205.1 L788.6,201.4 L799.2,197.9 L809.8,194.3 L820.3,190.8 L830.7,187.3 L841.0,183.8 L851.2,180.4 L861.3,177.0 L871.4,173.6 L881.4,170.2 L891.3,166.9 L901.1,163.6 L910.9,160.3 L920.5,157.0 L930.1,153.8 L939.7,150.6 L949.1,147.4 L958.5,144.2 L967.8,141.1 L977.0,138.0 L986.2,134.9 L995.3,131.8 L1004.3,128.8 L1013.3,125.8 M369.6,358.1 L383.9,353.2 L398.0,348.4 L412.1,343.6 L425.9,338.9 L439.7,334.2 L453.4,329.5 L466.9,324.9 L480.3,320.4 L493.5,315.8 L506.7,311.3 L519.7,306.9 L532.6,302.5 L545.4,298.1 L558.1,293.8 L570.7,289.5 L583.2,285.2 L595.5,281.0 L607.8,276.8 L619.9,272.7 L632.0,268.5 L643.9,264.5 L655.8,260.4 L667.5,256.4 L679.1,252.4 L690.7,248.5 L702.1,244.6 L713.5,240.7 L724.7,236.8 L735.9,233.0 L747.0,229.2 L757.9,225.5 L768.8,221.7 L779.6,218.0 L790.3,214.4 L801.0,210.7 L811.5,207.1 L822.0,203.5 L832.4,200.0 L842.6,196.4 L852.9,192.9 L863.0,189.5 L873.0,186.0 L883.0,182.6 L892.9,179.2 L902.7,175.8 L912.5,172.5 L922.2,169.2 L931.8,165.9 L941.3,162.6 L950.7,159.4 L960.1,156.2 L969.4,153.0 L978.7,149.8 L987.8,146.6 L996.9,143.5 L1006.0,140.4 L1014.9,137.3 M373.4,372.7 L387.6,367.8 L401.7,362.9 L415.6,358.1 L429.4,353.3 L443.0,348.6 L456.6,343.9 L470.0,339.2 L483.3,334.6 L496.5,330.0 L509.6,325.5 L522.6,321.0 L535.4,316.5 L548.1,312.1 L560.8,307.7 L573.3,303.4 L585.7,299.1 L598.0,294.8 L610.2,290.5 L622.3,286.3 L634.3,282.2 L646.1,278.0 L657.9,273.9 L669.6,269.9 L681.2,265.8 L692.7,261.8 L704.1,257.9 L715.4,253.9 L726.7,250.0 L737.8,246.1 L748.8,242.3 L759.8,238.5 L770.6,234.7 L781.4,230.9 L792.1,227.2 L802.7,223.5 L813.2,219.9 L823.7,216.2 L834.0,212.6 L844.3,209.0 L854.5,205.5 L864.6,201.9 L874.7,198.4 L884.6,195.0 L894.5,191.5 L904.3,188.1 L914.1,184.7 L923.8,181.3 L933.3,177.9 L942.9,174.6 L952.3,171.3 L961.7,168.0 L971.0,164.8 L980.3,161.6 L989.4,158.3 L998.6,155.2 L1007.6,152.0 L1016.6,148.9 M377.2,387.2 L391.3,382.3 L405.3,377.4 L419.1,372.5 L432.8,367.7 L446.4,362.9 L459.8,358.1 L473.2,353.4 L486.4,348.8 L499.5,344.1 L512.5,339.6 L525.4,335.0 L538.2,330.5 L550.8,326.0 L563.4,321.6 L575.8,317.2 L588.2,312.8 L600.4,308.5 L612.5,304.2 L624.6,300.0 L636.5,295.8 L648.4,291.6 L660.1,287.4 L671.7,283.3 L683.3,279.2 L694.8,275.2 L706.1,271.1 L717.4,267.1 L728.6,263.2 L739.7,259.2 L750.7,255.3 L761.6,251.5 L772.4,247.6 L783.2,243.8 L793.9,240.0 L804.4,236.3 L815.0,232.6 L825.4,228.9 L835.7,225.2 L846.0,221.6 L856.2,217.9 L866.3,214.4 L876.3,210.8 L886.3,207.3 L896.1,203.8 L906.0,200.3 L915.7,196.8 L925.3,193.4 L934.9,190.0 L944.5,186.6 L953.9,183.2 L963.3,179.9 L972.6,176.6 L981.9,173.3 L991.1,170.0 L1000.2,166.8 L1009.2,163.5 L1018.2,160.3 M381.0,401.7 L395.0,396.7 L408.9,391.8 L422.6,386.9 L436.2,382.0 L449.7,377.2 L463.0,372.4 L476.3,367.6 L489.4,362.9 L502.5,358.2 L515.4,353.6 L528.2,349.0 L540.9,344.5 L553.5,339.9 L566.0,335.5 L578.4,331.0 L590.6,326.6 L602.8,322.2 L614.9,317.9 L626.9,313.6 L638.8,309.3 L650.6,305.1 L662.3,300.9 L673.9,296.7 L685.4,292.5 L696.8,288.4 L708.1,284.4 L719.4,280.3 L730.5,276.3 L741.6,272.3 L752.5,268.4 L763.4,264.4 L774.2,260.5 L785.0,256.7 L795.6,252.8 L806.2,249.0 L816.7,245.2 L827.1,241.5 L837.4,237.8 L847.6,234.1 L857.8,230.4 L867.9,226.7 L877.9,223.1 L887.9,219.5 L897.7,216.0 L907.5,212.4 L917.3,208.9 L926.9,205.4 L936.5,201.9 L946.1,198.5 L955.5,195.1 L964.9,191.7 L974.2,188.3 L983.5,185.0 L992.7,181.6 L1001.8,178.3 L1010.8,175.0 L1019.8,171.8 M384.8,416.2 L398.7,411.1 L412.4,406.1 L426.1,401.2 L439.6,396.3 L453.0,391.4 L466.3,386.5 L479.4,381.8 L492.5,377.0 L505.4,372.3 L518.3,367.6 L531.0,363.0 L543.6,358.3 L556.1,353.8 L568.6,349.2 L580.9,344.8 L593.1,340.3 L605.2,335.9 L617.3,331.5 L629.2,327.1 L641.0,322.8 L652.8,318.5 L664.4,314.2 L676.0,310.0 L687.4,305.8 L698.8,301.7 L710.1,297.5 L721.3,293.4 L732.4,289.4 L743.4,285.3 L754.4,281.3 L765.3,277.3 L776.0,273.4 L786.7,269.5 L797.4,265.6 L807.9,261.7 L818.4,257.9 L828.7,254.0 L839.1,250.3 L849.3,246.5 L859.4,242.8 L869.5,239.1 L879.5,235.4 L889.5,231.8 L899.3,228.1 L909.1,224.5 L918.9,221.0 L928.5,217.4 L938.1,213.9 L947.6,210.4 L957.1,206.9 L966.5,203.4 L975.8,200.0 L985.1,196.6 L994.2,193.2 L1003.4,189.9 L1012.4,186.5 L1021.5,183.2 M388.6,430.6 L402.4,425.5 L416.0,420.4 L429.5,415.4 L443.0,410.5 L456.3,405.6 L469.4,400.7 L482.5,395.8 L495.5,391.0 L508.4,386.3 L521.1,381.5 L533.8,376.9 L546.3,372.2 L558.8,367.6 L571.2,363.0 L583.4,358.5 L595.6,353.9 L607.6,349.5 L619.6,345.0 L631.5,340.6 L643.3,336.2 L655.0,331.9 L666.6,327.6 L678.1,323.3 L689.5,319.1 L700.8,314.8 L712.1,310.7 L723.2,306.5 L734.3,302.4 L745.3,298.3 L756.2,294.2 L767.1,290.2 L777.8,286.2 L788.5,282.2 L799.1,278.3 L809.6,274.3 L820.1,270.4 L830.4,266.6 L840.7,262.7 L850.9,258.9 L861.1,255.1 L871.1,251.4 L881.1,247.6 L891.1,243.9 L900.9,240.3 L910.7,236.6 L920.4,233.0 L930.1,229.4 L939.7,225.8 L949.2,222.2 L958.7,218.7 L968.1,215.2 L977.4,211.7 L986.6,208.2 L995.8,204.8 L1005.0,201.3 L1014.1,197.9 L1023.1,194.6 M392.4,444.9 L406.0,439.8 L419.6,434.7 L433.0,429.7 L446.3,424.7 L459.5,419.7 L472.6,414.8 L485.6,409.9 L498.5,405.0 L511.3,400.2 L524.0,395.4 L536.6,390.7 L549.1,386.0 L561.4,381.3 L573.7,376.7 L585.9,372.1 L598.0,367.5 L610.0,363.0 L621.9,358.5 L633.8,354.1 L645.5,349.6 L657.1,345.2 L668.7,340.9 L680.2,336.5 L691.5,332.2 L702.8,328.0 L714.0,323.7 L725.2,319.5 L736.2,315.4 L747.2,311.2 L758.1,307.1 L768.9,303.0 L779.6,298.9 L790.3,294.9 L800.8,290.9 L811.3,286.9 L821.7,283.0 L832.1,279.1 L842.4,275.2 L852.6,271.3 L862.7,267.4 L872.8,263.6 L882.8,259.8 L892.7,256.1 L902.5,252.3 L912.3,248.6 L922.0,244.9 L931.7,241.3 L941.3,237.6 L950.8,234.0 L960.2,230.4 L969.6,226.8 L979.0,223.3 L988.2,219.8 L997.4,216.3 L1006.6,212.8 L1015.7,209.3 L1024.7,205.9 M396.1,459.2 L409.7,454.0 L423.1,448.9 L436.5,443.8 L449.7,438.8 L462.8,433.8 L475.8,428.8 L488.7,423.9 L501.5,419.0 L514.2,414.1 L526.8,409.3 L539.3,404.5 L551.8,399.8 L564.1,395.0 L576.3,390.4 L588.4,385.7 L600.5,381.1 L612.4,376.5 L624.3,372.0 L636.0,367.5 L647.7,363.0 L659.3,358.5 L670.8,354.1 L682.2,349.7 L693.6,345.4 L704.8,341.1 L716.0,336.8 L727.1,332.5 L738.1,328.3 L749.0,324.1 L759.9,319.9 L770.7,315.8 L781.4,311.7 L792.0,307.6 L802.6,303.5 L813.0,299.5 L823.4,295.5 L833.8,291.5 L844.0,287.5 L854.2,283.6 L864.3,279.7 L874.4,275.8 L884.4,272.0 L894.3,268.2 L904.1,264.4 L913.9,260.6 L923.6,256.9 L933.2,253.1 L942.8,249.4 L952.3,245.8 L961.8,242.1 L971.2,238.5 L980.5,234.9 L989.8,231.3 L999.0,227.7 L1008.2,224.2 L1017.2,220.7 L1026.3,217.2 M399.9,473.5 L413.3,468.2 L426.7,463.1 L439.9,457.9 L453.0,452.9 L466.0,447.8 L479.0,442.8 L491.8,437.8 L504.5,432.9 L517.1,428.0 L529.7,423.1 L542.1,418.3 L554.5,413.5 L566.7,408.7 L578.9,404.0 L590.9,399.3 L602.9,394.6 L614.8,390.0 L626.6,385.4 L638.3,380.8 L649.9,376.3 L661.5,371.8 L672.9,367.3 L684.3,362.9 L695.6,358.5 L706.8,354.1 L718.0,349.8 L729.0,345.5 L740.0,341.2 L750.9,336.9 L761.7,332.7 L772.5,328.5 L783.1,324.3 L793.7,320.2 L804.3,316.1 L814.7,312.0 L825.1,307.9 L835.4,303.9 L845.7,299.9 L855.8,295.9 L865.9,291.9 L876.0,288.0 L885.9,284.1 L895.8,280.2 L905.7,276.4 L915.5,272.5 L925.2,268.7 L934.8,265.0 L944.4,261.2 L953.9,257.5 L963.4,253.8 L972.8,250.1 L982.1,246.4 L991.4,242.8 L1000.6,239.2 L1009.7,235.6 L1018.8,232.0 L1027.9,228.4 M403.6,487.6 L417.0,482.4 L430.2,477.2 L443.3,472.0 L456.4,466.9 L469.3,461.8 L482.1,456.7 L494.9,451.7 L507.5,446.7 L520.1,441.8 L532.5,436.8 L544.9,432.0 L557.1,427.1 L569.3,422.3 L581.4,417.5 L593.4,412.8 L605.3,408.1 L617.2,403.4 L628.9,398.8 L640.6,394.1 L652.1,389.6 L663.6,385.0 L675.1,380.5 L686.4,376.0 L697.6,371.5 L708.8,367.1 L719.9,362.7 L730.9,358.4 L741.9,354.0 L752.7,349.7 L763.5,345.4 L774.3,341.2 L784.9,336.9 L795.5,332.8 L806.0,328.6 L816.4,324.4 L826.8,320.3 L837.1,316.2 L847.3,312.2 L857.5,308.1 L867.6,304.1 L877.6,300.1 L887.5,296.2 L897.4,292.2 L907.3,288.3 L917.0,284.4 L926.7,280.6 L936.4,276.8 L945.9,272.9 L955.5,269.1 L964.9,265.4 L974.3,261.6 L983.6,257.9 L992.9,254.2 L1002.1,250.5 L1011.3,246.9 L1020.4,243.3 L1029.5,239.7 M407.3,501.8 L420.6,496.5 L433.7,491.3 L446.7,486.0 L459.7,480.9 L472.5,475.7 L485.3,470.6 L497.9,465.5 L510.5,460.5 L522.9,455.5 L535.3,450.5 L547.6,445.6 L559.8,440.7 L571.9,435.9 L584.0,431.0 L595.9,426.3 L607.8,421.5 L619.5,416.8 L631.2,412.1 L642.8,407.4 L654.3,402.8 L665.8,398.2 L677.2,393.6 L688.5,389.1 L699.7,384.6 L710.8,380.1 L721.9,375.6 L732.8,371.2 L743.8,366.8 L754.6,362.5 L765.4,358.1 L776.0,353.8 L786.7,349.5 L797.2,345.3 L807.7,341.1 L818.1,336.9 L828.5,332.7 L838.7,328.5 L848.9,324.4 L859.1,320.3 L869.2,316.3 L879.2,312.2 L889.1,308.2 L899.0,304.2 L908.8,300.3 L918.6,296.3 L928.3,292.4 L937.9,288.5 L947.5,284.6 L957.0,280.8 L966.5,277.0 L975.9,273.2 L985.2,269.4 L994.5,265.6 L1003.7,261.9 L1012.9,258.2 L1022.0,254.5 L1031.0,250.8 M411.0,515.9 L424.2,510.6 L437.2,505.3 L450.1,500.0 L463.0,494.8 L475.7,489.6 L488.4,484.5 L501.0,479.3 L513.4,474.3 L525.8,469.2 L538.1,464.2 L550.4,459.2 L562.5,454.3 L574.5,449.4 L586.5,444.5 L598.4,439.7 L610.2,434.9 L621.9,430.1 L633.5,425.3 L645.1,420.6 L656.5,415.9 L667.9,411.3 L679.3,406.7 L690.5,402.1 L701.7,397.5 L712.8,393.0 L723.8,388.5 L734.7,384.0 L745.6,379.6 L756.4,375.2 L767.2,370.8 L777.8,366.4 L788.4,362.1 L798.9,357.8 L809.4,353.5 L819.8,349.2 L830.1,345.0 L840.4,340.8 L850.6,336.6 L860.7,332.5 L870.8,328.4 L880.8,324.3 L890.7,320.2 L900.6,316.2 L910.4,312.1 L920.1,308.1 L929.8,304.2 L939.5,300.2 L949.0,296.3 L958.6,292.4 L968.0,288.5 L977.4,284.6 L986.8,280.8 L996.0,277.0 L1005.3,273.2 L1014.4,269.4 L1023.6,265.7 L1032.6,262.0 M414.7,530.0 L427.8,524.6 L440.7,519.2 L453.5,513.9 L466.3,508.7 L478.9,503.4 L491.5,498.2 L504.0,493.1 L516.4,488.0 L528.7,482.9 L540.9,477.8 L553.1,472.8 L565.1,467.8 L577.1,462.9 L589.0,457.9 L600.8,453.0 L612.6,448.2 L624.2,443.4 L635.8,438.6 L647.3,433.8 L658.7,429.1 L670.1,424.4 L681.4,419.7 L692.6,415.1 L703.7,410.4 L714.7,405.9 L725.7,401.3 L736.6,396.8 L747.5,392.3 L758.3,387.8 L769.0,383.4 L779.6,379.0 L790.2,374.6 L800.7,370.2 L811.1,365.9 L821.5,361.6 L831.8,357.3 L842.0,353.0 L852.2,348.8 L862.3,344.6 L872.3,340.4 L882.3,336.3 L892.3,332.1 L902.1,328.0 L911.9,324.0 L921.7,319.9 L931.4,315.9 L941.0,311.9 L950.6,307.9 L960.1,303.9 L969.5,300.0 L978.9,296.1 L988.3,292.2 L997.6,288.3 L1006.8,284.5 L1016.0,280.7 L1025.1,276.8 L1034.2,273.1 M418.4,544.0 L431.3,538.5 L444.2,533.2 L456.9,527.8 L469.6,522.5 L482.1,517.2 L494.6,512.0 L507.0,506.8 L519.3,501.6 L531.6,496.5 L543.7,491.4 L555.8,486.3 L567.8,481.3 L579.7,476.3 L591.5,471.3 L603.3,466.4 L615.0,461.5 L626.6,456.6 L638.1,451.8 L649.5,446.9 L660.9,442.2 L672.2,437.4 L683.4,432.7 L694.6,428.0 L705.7,423.3 L716.7,418.7 L727.6,414.1 L738.5,409.5 L749.3,405.0 L760.1,400.4 L770.7,395.9 L781.4,391.5 L791.9,387.0 L802.4,382.6 L812.8,378.2 L823.1,373.9 L833.4,369.5 L843.6,365.2 L853.8,360.9 L863.9,356.7 L873.9,352.4 L883.9,348.2 L893.8,344.1 L903.7,339.9 L913.5,335.8 L923.2,331.7 L932.9,327.6 L942.5,323.5 L952.1,319.5 L961.6,315.4 L971.1,311.5 L980.5,307.5 L989.8,303.5 L999.1,299.6 L1008.4,295.7 L1017.6,291.8 L1026.7,288.0 L1035.8,284.1 M422.1,557.9 L434.9,552.5 L447.6,547.0 L460.3,541.6 L472.8,536.3 L485.3,531.0 L497.7,525.7 L510.0,520.5 L522.3,515.2 L534.4,510.1 L546.5,504.9 L558.5,499.8 L570.4,494.7 L582.3,489.7 L594.0,484.6 L605.7,479.7 L617.3,474.7 L628.9,469.8 L640.4,464.9 L651.8,460.0 L663.1,455.2 L674.3,450.4 L685.5,445.6 L696.6,440.9 L707.7,436.2 L718.7,431.5 L729.6,426.8 L740.4,422.2 L751.2,417.6 L761.9,413.0 L772.5,408.5 L783.1,403.9 L793.6,399.4 L804.1,395.0 L814.5,390.5 L824.8,386.1 L835.1,381.7 L845.3,377.4 L855.4,373.0 L865.5,368.7 L875.5,364.4 L885.5,360.2 L895.4,355.9 L905.2,351.7 L915.0,347.5 L924.8,343.4 L934.4,339.2 L944.1,335.1 L953.6,331.0 L963.2,326.9 L972.6,322.9 L982.0,318.8 L991.4,314.8 L1000.7,310.9 L1009.9,306.9 L1019.1,303.0 L1028.2,299.0 L1037.3,295.2 M425.7,571.8 L438.4,566.3 L451.1,560.9 L463.6,555.4 L476.1,550.0 L488.5,544.7 L500.8,539.4 L513.0,534.1 L525.2,528.8 L537.3,523.6 L549.3,518.4 L561.2,513.2 L573.1,508.1 L584.8,503.0 L596.5,497.9 L608.2,492.9 L619.7,487.9 L631.2,482.9 L642.6,478.0 L654.0,473.1 L665.2,468.2 L676.5,463.3 L687.6,458.5 L698.7,453.7 L709.7,448.9 L720.6,444.2 L731.5,439.5 L742.3,434.8 L753.0,430.2 L763.7,425.5 L774.3,420.9 L784.9,416.4 L795.4,411.8 L805.8,407.3 L816.1,402.8 L826.5,398.3 L836.7,393.9 L846.9,389.5 L857.0,385.1 L867.1,380.7 L877.1,376.4 L887.0,372.0 L896.9,367.8 L906.8,363.5 L916.6,359.2 L926.3,355.0 L936.0,350.8 L945.6,346.6 L955.2,342.5 L964.7,338.4 L974.1,334.3 L983.5,330.2 L992.9,326.1 L1002.2,322.1 L1011.4,318.1 L1020.6,314.1 L1029.8,310.1 L1038.9,306.1 M429.4,585.7 L442.0,580.1 L454.5,574.6 L467.0,569.2 L479.4,563.7 L491.7,558.3 L503.9,553.0 L516.0,547.6 L528.1,542.3 L540.1,537.1 L552.0,531.8 L563.9,526.6 L575.7,521.4 L587.4,516.3 L599.0,511.2 L610.6,506.1 L622.1,501.0 L633.5,496.0 L644.9,491.0 L656.2,486.1 L667.4,481.1 L678.6,476.2 L689.7,471.4 L700.7,466.5 L711.6,461.7 L722.5,456.9 L733.4,452.1 L744.1,447.4 L754.9,442.7 L765.5,438.0 L776.1,433.4 L786.6,428.7 L797.1,424.1 L807.5,419.6 L817.8,415.0 L828.1,410.5 L838.3,406.0 L848.5,401.5 L858.6,397.1 L868.7,392.7 L878.7,388.3 L888.6,383.9 L898.5,379.5 L908.3,375.2 L918.1,370.9 L927.8,366.6 L937.5,362.4 L947.1,358.2 L956.7,353.9 L966.2,349.8 L975.7,345.6 L985.1,341.5 L994.4,337.3 L1003.7,333.2 L1013.0,329.2 L1022.2,325.1 L1031.3,321.1 L1040.5,317.1 M433.0,599.5 L445.5,593.9 L458.0,588.4 L470.3,582.9 L482.6,577.4 L494.8,571.9 L507.0,566.5 L519.0,561.1 L531.0,555.8 L542.9,550.5 L554.8,545.2 L566.6,539.9 L578.3,534.7 L589.9,529.5 L601.5,524.4 L613.0,519.2 L624.5,514.1 L635.8,509.1 L647.1,504.0 L658.4,499.0 L669.6,494.0 L680.7,489.1 L691.7,484.2 L702.7,479.3 L713.6,474.4 L724.5,469.6 L735.3,464.7 L746.0,460.0 L756.7,455.2 L767.3,450.5 L777.9,445.8 L788.4,441.1 L798.8,436.4 L809.2,431.8 L819.5,427.2 L829.8,422.6 L840.0,418.1 L850.1,413.5 L860.2,409.0 L870.2,404.6 L880.2,400.1 L890.2,395.7 L900.0,391.3 L909.9,386.9 L919.6,382.6 L929.4,378.2 L939.0,373.9 L948.6,369.6 L958.2,365.4 L967.7,361.1 L977.2,356.9 L986.6,352.7 L995.9,348.5 L1005.2,344.4 L1014.5,340.3 L1023.7,336.2 L1032.9,332.1 L1042.0,328.0" stroke="#111" stroke-width="1.35" fill="none"/>
<path d="M767.8,405.2 L768.9,407.0 M806.3,373.4 L813.4,373.2 M854.4,364.9 L850.4,370.9 M814.0,385.2 L815.8,384.3 M684.2,473.1 L687.0,472.7 M895.4,355.9 L896.0,359.5 M780.6,397.6 L783.1,399.8 M797.8,396.5 L797.8,395.1 M788.1,400.5 L788.6,398.7 M772.5,408.5 L771.7,405.2 M842.6,372.5 L844.9,375.1 M853.1,371.1 L855.3,372.3 M853.4,359.3 L859.2,358.4 M689.3,470.9 L689.7,468.2 M812.2,389.2 L812.0,391.2 M879.6,360.4 L882.0,357.8 M869.3,363.5 L871.9,362.5 M691.4,443.1 L691.0,440.2 M824.3,383.6 L823.6,386.3 M883.3,352.9 L888.3,355.9 M718.1,427.7 L718.0,425.3 M698.9,438.9 L701.0,434.6 M899.9,378.5 L903.8,370.8 M705.7,423.3 L704.4,418.0 M689.7,471.4 L690.3,473.5 M727.6,414.1 L723.6,420.4 M712.1,428.5 L714.2,427.1 M704.4,418.0 L709.7,422.2 M721.9,418.4 L721.0,409.7 M897.2,366.8 L894.6,367.5 M829.9,379.1 L832.4,376.4 M738.5,409.5 L745.4,405.6 M771.7,405.2 L774.7,407.3 M872.3,340.4 L877.6,343.7 M896.9,364.6 L893.9,365.5 M726.9,412.9 L733.9,412.4 M792.3,393.8 L795.0,395.9 M803.8,391.9 L802.9,389.4 M797.4,377.7 L800.9,381.5 M769.0,395.1 L770.1,390.5 M707.5,434.3 L706.8,432.2 M749.9,415.3 L752.1,417.2 M899.0,389.8 L899.3,388.3 M822.1,383.1 L824.3,383.6 M897.5,372.4 L897.0,373.6 M831.6,381.0 L832.4,376.4 M844.9,375.1 L845.2,377.1 M776.9,400.6 L774.7,403.2 M779.6,379.0 L776.3,385.2 M812.2,389.2 L814.0,385.2 M731.1,422.9 L729.8,426.6 M898.2,369.0 L896.8,370.0 M859.6,369.8 L856.7,369.3 M859.9,362.6 L859.2,358.4 M790.2,374.6 L797.4,377.7 M839.6,373.4 L842.6,372.5 M833.4,369.5 L837.0,374.7 M868.2,353.7 L868.1,361.9 M850.4,370.9 L852.4,374.0 M906.8,363.5 L907.8,362.5 M736.8,419.2 L737.9,423.3 M873.7,353.9 L871.9,362.5 M697.8,436.0 L697.7,440.3 M897.2,366.8 L896.9,364.6 M739.3,410.6 L739.6,416.0 M818.7,382.2 L819.4,385.7 M899.0,381.9 L900.4,381.3 M718.1,427.7 L720.9,426.7 M825.4,380.7 L823.8,380.2 M733.9,412.4 L734.0,406.5 M705.7,423.3 L704.4,431.2 M758.1,410.9 L760.4,409.3 M750.1,412.7 L753.6,410.6 M838.6,373.9 L836.6,377.8 M825.4,380.7 L823.8,373.1 M791.9,379.1 L797.4,377.7 M906.8,363.5 L903.8,370.8 M770.7,395.9 L770.1,390.5 M893.8,344.1 L892.6,338.0 M681.0,456.7 L684.7,456.7 M850.5,374.8 L850.4,370.9 M826.6,381.2 L829.6,380.3 M770.7,395.9 L769.8,403.8 M728.1,423.0 L728.3,427.4 M894.7,342.2 L892.6,338.0 M879.6,351.4 L882.5,349.1 M802.4,382.6 L807.1,386.8 M689.1,464.0 L689.0,461.5 M731.1,422.9 L730.9,425.9 M882.0,357.8 L884.4,358.2 M815.9,387.5 L816.9,389.0 M905.2,351.7 L906.5,352.5 M774.7,403.2 L775.1,406.8 M864.7,366.1 L864.3,368.9 M898.5,379.5 L896.0,377.5 M745.3,412.0 L739.6,416.0 M736.8,419.2 L739.0,422.2 M863.9,356.7 L865.6,361.4 M735.4,423.3 L735.4,421.5 M687.8,460.4 L690.3,459.4 M712.9,431.5 L715.2,432.4 M720.7,430.2 L720.9,426.7 M894.8,354.3 L893.7,356.8 M749.3,405.0 L745.4,405.6 M696.2,426.4 L698.7,421.3 M675.2,443.7 L680.6,449.8 M753.5,395.0 L758.9,395.7 M736.6,396.8 L735.9,404.0 M685.5,445.6 L684.6,443.0 M763.6,406.1 L766.3,404.7 M804.5,387.4 L807.1,386.8 M781.4,391.5 L780.6,397.6 M714.6,430.0 L716.1,432.5 M676.5,463.3 L683.5,459.0 M795.0,395.9 L797.8,395.1 M763.6,412.1 L764.7,407.8 M689.7,471.4 L692.2,468.2 M900.0,391.3 L904.6,387.5 M919.6,382.6 L911.0,385.3 M905.2,351.7 L902.4,358.7 M824.3,383.6 L826.5,385.2 M850.4,370.9 L853.1,371.1 M859.9,362.6 L862.0,363.9 M878.5,360.7 L879.6,360.4 M900.1,341.0 L905.1,343.6 M913.5,335.8 L905.1,343.6 M833.4,369.5 L831.9,371.4 M879.9,360.7 L879.6,360.4 M740.1,417.8 L739.0,422.2 M869.3,363.5 L868.3,367.7 M886.9,359.5 L888.3,355.9 M690.3,429.1 L686.4,423.2 M899.0,381.9 L896.3,383.3 M677.6,475.3 L684.2,473.1 M705.1,431.2 L711.3,427.5 M766.8,395.8 L769.0,395.1 M749.3,405.0 L750.1,412.7 M781.8,391.1 L778.7,384.4 M711.3,427.5 L709.7,433.0 M718.0,424.0 L714.2,427.1 M801.3,393.9 L803.8,391.9 M788.5,396.8 L788.6,398.7 M839.7,378.9 L840.4,376.7 M812.8,378.2 L808.6,379.0 M868.6,361.8 L868.2,353.7 M674.3,450.4 L680.6,449.8 M918.1,370.9 L907.4,369.1 M829.6,380.3 L831.6,381.0 M793.4,391.5 L792.3,393.8 M854.5,355.7 L859.2,358.4 M856.7,369.3 L857.8,371.9 M687.0,472.7 L686.7,469.2 M897.5,362.5 L897.8,359.1 M854.4,364.9 L859.2,365.4 M904.5,383.4 L902.8,379.3 M873.6,363.2 L871.9,362.5 M687.0,455.2 L686.5,453.2 M712.1,428.5 L714.6,430.0 M694.6,428.0 L692.6,436.3 M873.9,352.4 L873.7,353.9 M875.3,360.4 L877.6,363.0 M711.6,413.2 L716.9,412.4 M896.9,364.6 L894.6,367.5 M667.4,481.1 L676.3,491.0 M896.0,377.5 L897.4,375.9 M862.3,344.6 L866.9,347.2 M890.7,354.0 L889.2,358.0 M754.1,413.2 L754.9,415.4 M766.0,407.5 L768.9,407.0 M801.5,378.7 L806.3,373.4 M712.3,432.6 L712.1,428.5 M747.5,392.3 L749.9,398.1 M791.6,398.5 L788.6,398.7 M834.2,375.9 L836.6,377.8 M846.7,361.7 L853.4,359.3 M850.1,374.8 L850.4,370.9 M909.9,386.9 L911.0,385.3 M788.5,396.8 L791.1,396.9 M791.9,387.0 L796.8,384.1 M892.3,332.1 L892.6,338.0 M853.8,360.9 L846.7,361.7 M812.2,389.2 L813.3,390.7 M771.7,405.2 L775.1,406.8 M888.8,347.4 L892.6,338.0 M904.6,387.5 L908.1,382.5 M903.7,339.9 L905.1,343.6 M899.3,388.3 L897.2,387.5 M718.1,427.7 L720.7,430.2 M825.4,380.7 L824.3,383.6 M900.0,391.3 L899.7,390.8 M899.1,378.9 L900.4,381.3 M742.3,418.8 L745.8,416.1 M878.5,360.7 L877.6,363.0 M823.8,373.1 L823.8,380.2 M716.8,416.8 L716.9,412.4 M675.9,461.6 L681.0,456.7 M750.1,412.7 L754.1,413.2 M898.9,384.7 L897.2,387.5 M768.9,407.0 L769.8,403.8 M754.1,413.2 L753.6,410.6 M674.3,455.3 L680.6,449.8 M696.6,433.7 L692.6,436.3 M751.2,404.1 L753.6,410.6 M842.6,375.0 L841.6,378.5 M702.6,436.4 L704.4,433.8 M783.1,399.8 L785.0,402.2 M756.4,408.3 L758.3,400.3 M812.8,380.4 L816.9,375.7 M667.4,481.1 L680.3,482.7 M908.3,375.2 L903.8,370.8 M758.3,387.8 L766.8,395.8 M707.5,434.3 L709.7,433.0 M689.7,471.4 L692.5,471.2 M855.3,372.3 L855.0,370.3 M844.2,370.9 L846.7,361.7 M813.4,373.2 L816.9,375.7 M791.6,398.5 L791.1,396.9 M856.7,369.3 L859.2,365.4 M888.8,347.4 L886.7,339.1 M823.1,373.9 L816.9,375.7 M885.6,359.4 L884.4,358.2 M681.0,456.7 L686.5,453.2 M899.1,378.9 L897.4,375.9 M873.7,353.9 L875.3,360.4 M812.8,380.4 L810.3,386.2 M853.8,360.9 L854.4,364.9 M716.7,418.7 L716.8,416.8 M714.6,430.0 L718.1,427.7 M738.5,409.5 L733.9,412.4 M718.0,424.0 L721.9,418.4 M872.3,340.4 L866.9,347.2 M703.7,410.4 L711.6,413.2 M740.1,417.8 L742.3,418.8 M756.4,408.3 L753.6,410.6 M733.9,412.4 L738.0,414.4 M689.7,468.2 L691.9,467.4 M716.8,416.8 L721.9,418.4 M818.7,382.2 L816.9,375.7 M795.0,395.9 L797.8,396.5 M688.0,485.8 L688.1,479.2 M768.9,407.0 L771.7,405.2 M718.1,427.7 L718.3,431.8 M844.1,376.7 L842.6,375.0 M816.9,375.7 L815.7,370.8 M686.2,478.0 L687.0,472.7 M790.2,374.6 L787.0,383.8 M808.6,379.0 L812.8,380.4 M906.8,363.5 L902.4,358.7 M863.9,349.7 L868.2,353.7 M685.8,444.6 L684.6,443.0 M723.6,420.4 L726.0,421.6 M883.3,352.9 L888.8,347.4 M896.1,362.4 L896.0,359.5 M899.9,378.5 L900.4,381.3 M904.5,383.4 L906.8,376.7 M864.7,366.1 L865.3,368.3 M685.7,450.3 L688.3,448.9 M899.0,381.9 L896.9,385.0 M863.9,356.7 L863.9,349.7 M685.8,444.6 L687.3,444.5 M690.9,477.8 L692.9,476.4 M743.1,419.9 L742.3,418.8 M892.8,354.1 L894.8,352.4 M745.8,416.1 L747.4,416.8 M749.3,405.0 L753.6,410.6 M900.1,349.7 L894.8,352.4 M770.1,390.5 L776.3,385.2 M770.9,407.1 L768.9,407.0 M774.7,403.2 L778.0,402.8 M888.3,355.9 L886.3,359.3 M819.4,385.7 L820.9,382.1 M896.0,359.5 L893.5,359.9 M781.4,391.5 L778.7,384.4 M714.6,430.0 L717.0,432.4 M804.4,394.2 L803.8,391.9 M899.9,378.5 L897.4,375.9 M859.2,358.4 L862.7,359.0 M894.8,354.3 L895.9,355.6 M828.8,366.0 L838.0,363.3 M859.6,367.1 L862.0,363.9 M897.5,362.5 L898.7,361.6 M859.5,351.2 L863.9,349.7 M905.2,351.7 L900.1,349.7 M896.9,367.8 L894.6,368.3 M735.4,421.5 L732.2,425.4 M873.6,363.2 L873.5,364.5 M692.7,438.6 L692.6,436.3 M793.6,399.4 L793.3,396.5 M694.6,428.0 L696.6,433.7 M735.8,418.1 L734.2,418.3 M804.5,387.4 L806.6,388.1 M879.9,360.7 L882.0,357.8 M831.9,371.4 L832.4,376.4 M672.5,464.2 L677.6,475.3 M836.6,377.8 L838.0,380.0 M904.6,387.5 L899.7,390.8 M778.0,402.8 L777.7,400.8 M838.9,368.9 L839.6,373.4 M903.8,370.8 L897.4,375.9 M735.8,418.1 L733.9,412.4 M776.5,391.4 L776.3,385.2 M676.5,463.3 L675.9,461.6 M767.8,405.2 L769.8,403.8 M895.4,355.9 L895.9,355.6 M749.3,405.0 L749.9,398.1 M781.8,391.1 L788.5,396.8 M684.2,473.1 L686.7,469.2 M808.2,386.8 L810.3,386.2 M865.6,361.4 L862.7,359.0 M684.5,465.8 L686.2,465.5 M823.1,368.9 L829.1,371.1 M853.1,371.1 L855.0,370.3 M838.3,379.8 L836.6,377.8 M862.7,367.6 L862.0,363.9 M727.6,414.1 L728.9,421.2 M843.6,365.2 L842.8,363.9 M691.0,440.2 L690.5,436.9 M709.7,433.0 L712.1,428.5 M727.6,414.1 L721.9,418.4 M831.8,357.3 L838.0,363.3 M893.7,356.8 L896.0,359.5 M674.3,455.3 L681.0,456.7 M714.7,405.9 L716.9,412.4 M771.7,405.2 L774.7,403.2 M686.2,478.0 L688.3,474.3 M755.7,412.5 L754.9,415.4 M896.9,364.6 L894.3,364.5 M728.9,421.2 L734.2,418.3 M726.9,412.9 L734.0,406.5 M788.5,396.8 L787.4,387.7 M896.9,367.8 L898.2,369.0 M760.1,400.4 L760.0,407.9 M772.7,400.0 L769.8,403.8 M829.1,371.1 L828.8,366.0 M776.9,400.6 L780.6,397.6 M725.7,401.3 L735.9,404.0 M674.3,450.4 L673.9,451.6 M898.2,369.0 L897.2,366.8 M902.4,358.7 L897.8,359.1 M815.7,370.8 L823.1,368.9 M823.1,373.9 L818.7,382.2 M876.2,358.1 L873.7,353.9 M903.8,370.8 L900.9,365.2 M897.5,362.5 L896.9,364.6 M900.9,365.2 L902.4,358.7 M686.1,449.2 L686.6,446.1 M692.6,415.1 L686.4,423.2 M696.1,436.6 L696.1,435.0 M723.7,426.4 L722.9,423.1 M802.4,382.6 L802.9,389.4 M714.2,427.1 L718.1,427.7 M718.1,427.7 L720.2,424.4 M873.6,363.2 L872.6,365.1 M739.6,416.0 L742.3,418.8 M686.1,449.2 L688.3,448.9 M691.6,436.3 L690.5,436.9 M691.6,436.3 L690.3,429.1 M678.8,440.2 L685.5,440.9 M898.9,384.7 L896.9,385.0 M739.3,410.6 L745.4,405.6 M838.6,373.9 L837.0,374.7 M705.1,431.2 L704.4,431.2 M686.2,478.0 L688.1,479.2 M884.4,358.2 L886.3,359.3 M755.7,412.5 L756.5,414.8 M772.7,400.0 L776.5,391.4 M681.0,456.7 L683.8,449.6 M836.6,377.8 L837.0,374.7 M772.7,400.0 L771.7,405.2 M768.9,407.0 L767.1,410.5 M791.9,387.0 L787.4,387.7 M904.5,383.4 L900.8,384.0 M685.5,440.9 L684.6,443.0 M802.4,382.6 L808.6,379.0 M821.5,361.6 L815.7,370.8 M855.0,370.3 L856.7,369.3 M868.6,361.8 L869.3,363.5 M791.6,398.5 L793.3,396.5 M868.4,363.7 L868.3,367.7 M902.8,379.3 L906.8,376.7 M882.9,343.9 L888.8,347.4 M675.9,461.6 L674.3,455.3 M712.9,431.5 L714.6,430.0 M814.8,382.7 L815.8,384.3 M892.0,357.0 L890.7,354.0 M852.2,348.8 L859.5,351.2 M892.2,352.0 L894.8,352.4 M723.7,426.4 L725.9,426.0 M675.2,443.7 L678.8,440.2 M834.4,380.0 L831.6,381.0 M745.3,412.0 L745.4,405.6 M898.5,379.5 L899.1,378.9 M687.6,458.5 L687.0,455.2 M896.0,359.5 L893.6,361.7 M760.4,409.3 L760.7,413.2 M840.3,379.0 L840.4,376.7 M678.6,476.2 L686.2,478.0 M814.3,387.7 L814.0,385.2 M795.0,395.9 L794.9,399.0 M769.0,383.4 L776.3,385.2 M795.0,395.9 L798.3,391.4 M834.4,380.0 L832.9,376.6 M687.0,455.2 L689.4,453.8 M842.6,375.0 L842.6,372.5 M905.2,351.7 L900.4,352.3 M709.7,422.2 L714.2,427.1 M824.3,383.6 L826.6,381.2 M825.4,380.7 L829.1,371.1 M689.6,464.3 L689.7,468.2 M725.9,426.0 L727.1,427.4 M902.4,358.7 L900.4,352.3 M900.4,352.3 L900.1,349.7 M865.6,361.4 L868.1,361.9 M878.8,356.1 L878.5,360.7 M804.5,387.4 L806.7,389.8 M868.6,361.8 L871.9,362.5 M715.2,432.4 L714.6,430.0 M683.4,432.7 L690.5,436.9 M683.4,432.7 L690.3,429.1 M864.7,366.1 L866.8,368.5 M703.7,410.4 L698.7,421.3 M882.3,336.3 L877.6,343.7 M899.0,381.9 L896.6,382.0 M684.6,443.0 L687.8,441.9 M896.9,367.8 L896.8,370.0 M766.8,395.8 L770.1,390.5 M749.3,405.0 L751.2,404.1 M766.8,395.8 L769.8,403.8 M684.5,465.8 L686.7,469.2 M736.6,396.8 L743.7,401.8 M663.1,455.2 L672.5,464.2 M794.0,399.3 L795.0,395.9 M801.3,393.9 L802.9,389.4 M814.8,382.7 L818.7,382.2 M689.7,471.4 L688.3,474.3 M883.3,352.9 L882.5,349.1 M854.5,355.7 L859.5,351.2 M764.7,407.8 L766.0,410.9 M907.4,369.1 L907.8,362.5 M865.2,363.0 L868.4,363.7 M800.7,370.2 L801.5,378.7 M729.1,421.7 L728.1,423.0 M843.6,365.2 L844.2,370.9 M898.9,384.7 L899.0,381.9 M692.7,438.6 L696.1,436.6 M798.4,392.0 L802.9,389.4 M876.2,358.1 L875.3,360.4 M720.2,424.4 L722.9,423.1 M694.6,428.0 L694.0,421.8 M704.4,433.8 L704.4,431.2 M833.4,369.5 L838.0,363.3 M692.6,436.3 L696.1,436.6 M873.9,352.4 L873.2,344.8 M696.6,440.9 L696.1,436.6 M747.4,416.8 L747.5,418.8 M702.2,431.9 L700.1,425.1 M760.1,413.8 L758.1,410.9 M689.0,461.5 L690.3,459.4 M778.0,402.8 L779.8,401.9 M776.5,391.4 L780.6,397.6 M893.8,344.1 L894.8,352.4 M902.4,358.7 L898.7,361.6 M705.1,431.2 L706.8,432.2 M854.4,364.9 L853.1,371.1 M781.8,391.1 L787.0,383.8 M900.4,352.3 L897.8,359.1 M834.2,375.9 L837.0,374.7 M803.8,391.9 L805.6,393.8 M766.0,407.5 L766.0,410.9 M688.3,474.3 L690.9,477.8 M909.9,386.9 L908.1,382.5 M687.6,458.5 L687.8,460.4 M812.8,378.2 L812.8,380.4 M868.6,361.8 L873.7,353.9 M862.0,363.9 L864.7,366.1 M687.6,458.5 L690.3,459.4 M691.9,481.1 L690.9,477.8 M896.9,364.6 L896.1,362.4 M842.0,353.0 L842.7,358.6 M681.0,456.7 L680.6,449.8 M725.7,401.3 L721.0,409.7 M718.0,425.3 L720.2,424.4 M739.3,410.6 L745.3,412.0 M686.6,446.1 L688.3,448.9 M780.6,397.6 L781.8,391.1 M721.9,418.4 L726.9,412.9 M753.4,404.5 L753.5,395.0 M873.9,352.4 L879.6,351.4 M783.1,399.8 L785.6,400.0 M772.7,400.0 L776.9,400.6 M823.8,373.1 L823.1,368.9 M702.2,431.9 L698.2,433.5 M667.4,481.1 L677.6,475.3 M909.9,386.9 L904.6,387.5 M760.1,400.4 L758.9,395.7 M803.8,391.9 L806.7,389.8 M835.5,379.1 L838.0,380.0 M823.1,373.9 L820.9,382.1 M842.8,363.9 L842.7,358.6 M855.8,371.2 L855.0,370.3 M813.4,373.2 L815.7,370.8 M776.9,400.6 L778.0,402.8 M847.3,374.0 L849.1,375.4 M902.8,379.3 L900.8,384.0 M832.4,376.4 L834.2,375.9 M904.6,387.5 L904.5,383.4 M854.4,364.9 L855.0,370.3 M750.1,412.7 L745.8,416.1 M693.2,442.8 L692.7,438.6 M853.8,360.9 L853.4,359.3 M720.9,426.7 L720.2,424.4 M688.1,479.2 L691.9,481.1 M738.5,409.5 L734.0,406.5 M818.7,382.2 L820.9,382.1 M889.7,350.4 L890.7,354.0 M898.5,379.5 L899.0,381.9 M687.6,458.5 L686.8,459.3 M832.9,376.6 L831.6,381.0 M825.4,380.7 L826.6,381.2 M725.7,401.3 L726.9,412.9 M716.8,416.8 L721.0,409.7 M806.7,393.3 L806.7,389.8 M838.6,373.9 L840.4,376.7 M825.4,380.7 L829.9,379.1 M806.7,389.8 L806.6,388.1 M686.5,453.2 L689.4,453.8 M798.3,391.4 L802.9,389.4 M808.6,379.0 L813.4,373.2 M770.7,395.9 L776.5,391.4 M823.8,373.1 L829.1,371.1 M863.9,349.7 L866.9,347.2 M835.5,379.1 L834.2,375.9 M836.6,377.8 L840.4,376.7 M772.7,400.0 L774.7,403.2 M758.3,387.8 L770.1,390.5 M728.1,423.0 L729.8,426.6 M814.3,387.7 L813.3,390.7 M855.8,371.2 L856.7,369.3 M854.4,364.9 L859.2,358.4 M687.8,441.9 L690.2,443.9 M672.2,437.4 L678.8,440.2 M731.1,422.9 L732.2,425.4 M889.7,350.4 L888.3,355.9 M807.1,386.8 L808.2,386.8 M883.3,352.9 L882.0,357.8 M735.4,421.5 L737.9,423.3 M896.0,359.5 L895.9,355.6 M687.6,458.5 L684.7,456.7 M680.0,489.4 L680.3,482.7 M745.3,412.0 L742.3,418.8 M696.1,436.6 L697.7,440.3 M808.6,379.0 L808.2,386.8 M685.8,444.6 L687.8,441.9 M750.1,412.7 L747.4,416.8 M678.8,440.2 L678.7,434.8 M829.3,382.5 L826.6,381.2 M738.0,414.4 L739.3,410.6 M690.3,473.5 L692.5,471.2 M709.7,422.2 L711.6,413.2 M716.7,418.7 L721.9,418.4 M884.4,358.2 L882.8,360.9 M702.6,436.4 L698.9,438.9 M758.1,410.9 L758.0,414.6 M872.3,340.4 L873.2,344.8 M787.0,383.8 L791.8,385.5 M882.3,336.3 L886.7,339.1 M723.7,426.4 L722.7,429.8 M840.4,376.7 L839.6,373.4 M814.3,387.7 L815.9,387.5 M829.9,379.1 L829.1,371.1 M868.2,353.7 L866.9,347.2 M802.4,382.6 L796.8,384.1 M894.8,354.3 L894.8,352.4 M816.9,375.7 L823.1,368.9 M896.9,367.8 L894.6,367.5 M873.7,353.9 L878.8,356.1 M790.2,374.6 L791.9,379.1 M902.8,379.3 L903.8,370.8 M680.3,482.7 L688.1,479.2 M897.8,359.1 L897.0,354.3 M683.5,459.0 L686.8,459.3 M678.8,440.2 L684.6,443.0 M694.6,428.0 L696.2,426.4 M871.9,362.5 L872.6,365.1 M833.4,369.5 L838.9,368.9 M852.2,348.8 L847.6,359.0 M897.5,372.4 L894.9,373.1 M686.7,469.2 L689.3,470.9 M681.4,419.7 L686.4,423.2 M706.8,432.2 L709.7,433.0 M738.0,414.4 L739.6,416.0 M672.5,464.2 L678.7,468.3 M724.6,427.9 L723.7,426.4 M890.7,354.0 L892.8,354.1 M687.0,455.2 L689.8,454.4 M904.6,387.5 L899.3,388.3 M686.4,423.2 L694.0,421.8 M682.7,431.8 L686.4,423.2 M766.3,404.7 L769.8,403.8 M686.5,453.2 L688.8,451.5 M896.8,370.0 L894.6,370.0 M781.8,391.1 L787.4,387.7 M711.3,427.5 L712.1,428.5 M778.7,384.4 L787.0,383.8 M684.5,465.8 L685.9,463.3 M823.1,368.9 L828.8,366.0 M878.8,356.1 L879.6,351.4 M770.9,407.1 L771.7,405.2 M683.5,459.0 L684.7,456.7 M904.6,387.5 L900.8,384.0 M723.7,426.4 L723.8,429.0 M840.4,376.7 L842.6,375.0 M793.4,391.5 L795.0,395.9 M868.2,353.7 L873.7,353.9 M871.3,364.9 L869.3,363.5 M697.8,436.0 L698.2,433.5 M691.7,484.2 L691.9,481.1 M677.6,475.3 L678.7,468.3 M691.9,481.1 L693.9,482.2 M696.6,433.7 L696.2,426.4 M721.0,409.7 L726.9,412.9 M696.2,426.4 L694.0,421.8 M831.9,371.4 L834.2,375.9 M760.1,400.4 L758.3,400.3 M785.0,402.2 L785.6,400.0 M691.7,484.2 L693.9,482.2 M892.3,332.1 L886.7,339.1 M700.1,425.1 L698.2,433.5 M674.3,450.4 L675.2,443.7 M838.9,368.9 L842.6,372.5 M788.6,398.7 L791.1,396.9 M787.4,387.7 L787.0,383.8 M776.5,391.4 L778.7,384.4 M806.7,389.8 L805.6,393.8 M859.6,369.8 L859.6,367.1 M897.5,362.5 L896.1,362.4 M692.4,475.8 L690.3,473.5 M868.4,363.7 L868.1,361.9 M766.0,407.5 L767.1,410.5 M811.1,365.9 L813.4,373.2 M865.6,361.4 L868.2,353.7 M878.8,356.1 L883.3,352.9 M788.5,396.8 L792.3,393.8 M900.1,349.7 L905.1,343.6 M687.6,458.5 L690.5,455.9 M871.3,364.9 L871.9,362.5 M895.9,355.6 L897.8,359.1 M686.2,478.0 L684.2,473.1 M714.2,427.1 L718.0,425.3 M685.9,463.3 L689.1,464.0 M685.5,445.6 L683.8,449.6 M843.6,365.2 L846.7,361.7 M897.4,375.9 L895.4,374.2 M726.0,421.6 L728.9,421.2 M760.0,407.9 L758.9,408.2 M751.2,404.1 L749.9,398.1 M727.6,414.1 L726.9,412.9 M754.1,413.2 L755.7,412.5 M696.6,433.7 L696.1,435.0 M678.7,434.8 L680.9,428.4 M779.8,401.9 L783.2,403.5 M844.2,370.9 L842.6,372.5 M780.6,397.6 L777.7,400.8 M735.9,404.0 L743.7,401.8 M702.2,431.9 L701.0,434.6 M838.9,368.9 L838.0,363.3 M848.3,371.8 L847.3,374.0 M854.4,364.9 L859.9,362.6 M916.6,359.2 L907.4,369.1 M902.1,328.0 L900.1,341.0 M908.1,382.5 L906.8,376.7 M859.6,369.8 L862.7,367.6 M868.4,363.7 L869.3,363.5 M882.9,343.9 L886.7,339.1 M705.7,423.3 L700.1,425.1 M812.8,380.4 L814.0,385.2 M670.1,424.4 L680.9,428.4 M692.6,415.1 L694.0,421.8 M791.9,387.0 L792.3,393.8 M685.5,440.9 L687.8,441.9 M690.3,473.5 L692.2,474.2 M720.9,426.7 L723.7,426.4 M728.1,423.0 L728.9,421.2 M829.9,379.1 L826.6,381.2 M738.5,409.5 L738.0,414.4 M723.7,426.4 L726.0,421.6 M690.9,477.8 L693.3,477.9 M893.0,350.9 L892.2,352.0 M698.7,421.3 L704.4,418.0 M898.5,379.5 L897.4,375.9 M756.0,415.3 L755.7,412.5 M756.4,408.3 L755.7,412.5 M707.5,434.3 L705.2,436.3 M758.3,387.8 L753.5,395.0 M749.9,415.3 L750.0,417.5 M754.1,413.2 L752.1,417.2 M678.6,476.2 L684.2,473.1 M691.6,436.3 L692.6,436.3 M840.4,376.7 L841.6,378.5 M760.0,407.9 L760.4,409.3 M900.9,365.2 L898.7,361.6 M718.1,427.7 L719.7,431.1 M892.0,357.0 L892.8,354.1 M883.9,348.2 L888.8,347.4 M690.0,484.9 L691.9,481.1 M689.6,464.3 L689.1,464.0 M835.5,379.1 L836.6,377.8 M859.2,365.4 L862.0,363.9 M687.6,458.5 L689.8,454.4 M908.3,375.2 L911.0,385.3 M768.9,407.0 L769.7,409.5 M915.0,347.5 L905.8,356.7 M869.9,367.2 L869.3,363.5 M869.3,363.5 L869.2,367.5 M821.5,361.6 L823.1,368.9 M692.7,438.6 L694.2,442.2 M883.3,352.9 L884.4,358.2 M684.2,473.1 L684.5,465.8 M684.5,465.8 L683.5,459.0 M899.0,389.8 L897.9,389.9 M735.4,421.5 L734.2,418.3 M682.7,431.8 L690.3,429.1 M863.9,356.7 L868.2,353.7 M706.8,422.7 L704.4,418.0 M743.1,419.9 L745.8,416.1 M896.8,370.0 L894.9,371.5 M829.3,382.5 L829.6,380.3 M896.9,367.8 L897.2,366.8 M680.9,428.4 L686.4,423.2 M689.6,464.3 L686.2,465.5 M793.3,396.5 L792.3,393.8 M758.1,410.9 L759.0,414.5 M796.8,384.1 L797.4,377.7 M888.3,355.9 L887.9,359.5 M814.8,382.7 L816.9,375.7 M848.3,371.8 L849.1,375.4 M683.5,459.0 L685.9,463.3 M778.9,404.4 L778.0,402.8 M865.2,363.0 L868.1,361.9 M882.5,349.1 L882.9,343.9 M873.6,363.2 L875.3,360.4 M729.1,421.7 L728.9,421.2 M778.0,402.8 L777.5,406.6 M893.8,344.1 L900.1,349.7 M907.8,362.5 L905.8,356.7 M900.8,384.0 L900.4,381.3 M696.1,436.6 L694.2,442.2 M735.8,418.1 L736.8,419.2 M896.1,362.4 L897.8,359.1 M818.7,388.2 L815.9,387.5 M692.6,436.3 L696.1,435.0 M716.7,418.7 L709.7,422.2 M672.5,464.2 L674.3,455.3 M740.2,421.6 L742.3,418.8 M747.4,416.8 L749.9,415.3 M882.3,336.3 L882.9,343.9 M788.6,398.7 L790.2,400.7 M735.8,418.1 L738.0,414.4 M807.1,386.8 L808.6,379.0 M806.6,388.1 L808.2,386.8 M776.3,385.2 L778.7,384.4 M692.4,475.8 L690.9,477.8 M900.4,352.3 L897.0,354.3 M686.6,446.1 L689.0,445.5 M809.4,390.0 L808.3,392.8 M688.3,474.3 L690.3,473.5 M893.8,344.1 L893.0,350.9 M838.3,379.8 L840.4,376.7 M798.4,392.0 L795.0,395.9 M862.7,367.6 L864.7,366.1 M812.8,378.2 L813.4,373.2 M729.6,426.8 L728.1,423.0 M862.0,363.9 L865.2,363.0 M687.6,458.5 L690.8,457.1 M800.7,370.2 L806.3,373.4 M862.3,344.6 L859.5,351.2 M697.8,436.0 L701.0,434.6 M897.5,372.4 L903.8,370.8 M810.1,392.2 L809.4,390.0 M691.0,440.2 L692.7,438.6 M726.0,421.6 L728.1,423.0 M686.6,446.1 L687.3,444.5 M758.3,400.3 L758.9,408.2 M829.1,371.1 L832.4,376.4 M678.7,434.8 L682.7,431.8 M873.9,352.4 L877.6,343.7 M753.6,410.6 L755.7,412.5 M764.7,407.8 L763.6,406.1 M688.3,474.3 L688.1,479.2 M809.4,390.0 L808.2,386.8 M685.5,445.6 L686.1,449.2 M900.0,384.1 L899.3,388.3 M788.5,396.8 L783.1,399.8 M829.1,371.1 L831.9,371.4 M760.1,400.4 L763.6,406.1 M810.3,386.2 L814.0,385.2 M824.8,386.1 L824.3,383.6 M776.9,400.6 L777.7,400.8 M779.6,379.0 L778.7,384.4 M680.6,449.8 L683.8,449.6 M902.8,379.3 L900.4,381.3 M806.7,389.8 L806.8,393.2 M859.9,362.6 L862.7,359.0 M903.7,339.9 L900.1,341.0 M876.2,358.1 L878.8,356.1 M864.7,366.1 L865.2,363.0 M890.0,358.1 L890.7,354.0 M798.4,392.0 L797.8,395.1 M822.1,383.1 L822.0,387.4 M804.0,394.5 L803.8,391.9 M812.8,378.2 L816.9,375.7 M831.8,357.3 L828.8,366.0 M898.7,361.6 L897.8,359.1 M674.3,455.3 L673.9,451.6 M672.2,437.4 L680.9,428.4 M688.1,479.2 L690.9,477.8 M696.1,436.6 L697.8,436.0 M696.1,435.0 L698.2,433.5 M842.0,353.0 L847.6,359.0 M722.9,423.1 L726.0,421.6 M685.9,463.3 L686.8,459.3 M832.9,376.6 L832.4,376.4 M745.4,405.6 L743.7,401.8 M691.6,436.3 L692.7,438.6 M838.6,373.9 L839.6,373.4 M892.0,357.0 L893.7,356.8 M685.5,440.9 L690.5,436.9 M734.0,406.5 L735.9,404.0 M767.8,405.2 L766.0,407.5 M791.1,396.9 L793.3,396.5 M780.6,397.6 L779.8,401.9 M788.1,400.5 L785.6,400.0 M803.8,391.9 L802.3,395.4 M838.9,368.9 L844.2,370.9 M809.4,390.0 L810.3,386.2 M791.9,387.0 L793.4,391.5 M877.6,343.7 L882.5,349.1 M900.1,349.7 L900.1,341.0 M916.6,359.2 L905.8,356.7 M672.2,437.4 L678.7,434.8 M727.6,414.1 L726.0,421.6 M823.1,373.9 L823.1,368.9 M698.9,438.9 L697.8,436.0 M725.9,426.0 L726.0,421.6 M853.8,360.9 L859.2,358.4 M694.0,421.8 L698.7,421.3 M753.8,416.4 L754.1,413.2 M829.9,379.1 L829.6,380.3 M738.5,409.5 L735.9,404.0 M745.3,412.0 L750.1,412.7 M783.2,403.5 L783.1,399.8 M756.4,408.3 L758.1,410.9 M787.0,383.8 L791.9,379.1 M760.4,409.3 L761.4,412.9 M814.3,387.7 L815.8,384.3 M812.2,389.2 L810.3,386.2 M691.0,440.2 L690.2,443.9 M842.6,375.0 L844.9,375.1 M873.7,353.9 L879.6,351.4 M806.7,389.8 L808.2,386.8 M833.4,369.5 L834.2,375.9 M873.2,344.8 L877.6,343.7 M685.5,445.6 L685.8,444.6 M796.8,384.1 L798.3,391.4 M908.3,375.2 L906.8,376.7 M889.7,350.4 L893.0,350.9 M915.0,347.5 L905.1,343.6 M878.8,356.1 L879.6,360.4 M686.7,469.2 L689.7,468.2 M897.5,372.4 L894.9,371.5 M899.7,390.8 L897.8,391.9 M672.5,464.2 L675.9,461.6 M686.2,465.5 L689.1,464.0 M683.8,449.6 L686.1,449.2 M890.7,354.0 L892.2,352.0 M700.1,425.1 L698.7,421.3 M690.3,429.1 L694.0,421.8 M678.7,468.3 L684.2,473.1 M758.1,410.9 L758.9,408.2 M897.8,392.3 L899.7,390.8 M678.6,476.2 L677.6,475.3 M706.8,422.7 L711.3,427.5 M725.9,426.0 L728.1,423.0 M900.9,365.2 L897.2,366.8 M760.4,409.3 L763.6,406.1 M829.3,382.5 L831.6,381.0 M791.8,385.5 L791.9,379.1 M777.7,400.8 L779.8,401.9 M883.9,348.2 L882.5,349.1 M690.0,484.9 L688.1,479.2 M716.7,418.7 L714.2,427.1 M815.9,387.5 L815.8,384.3 M702.6,436.4 L701.0,434.6 M718.0,424.0 L718.0,425.3 M758.1,410.9 L760.7,413.2 M900.1,349.7 L897.0,354.3 M846.1,376.7 L844.9,375.1 M888.3,355.9 L889.2,358.0 M838.6,373.9 L838.9,368.9 M898.5,379.5 L896.0,380.4 M865.6,361.4 L862.0,363.9 M879.6,351.4 L877.6,343.7 M868.2,353.7 L873.2,344.8 M802.4,382.6 L800.9,381.5 M868.6,361.8 L868.4,363.7 M911.0,385.3 L908.1,382.5 M875.3,360.4 L878.5,360.7 M683.4,432.7 L682.7,431.8 M698.2,433.5 L701.0,434.6 M898.2,369.0 L903.8,370.8 M876.2,358.1 L878.5,360.7 M690.5,436.9 L692.7,438.6 M863.9,356.7 L859.2,358.4 M704.4,433.8 L706.8,432.2 M852.2,348.8 L854.5,355.7 M724.6,427.9 L725.9,426.0 M785.6,400.0 L786.9,401.9 M743.7,401.8 L749.9,398.1 M793.4,391.5 L796.8,384.1 M758.9,395.7 L766.8,395.8 M781.4,391.5 L776.5,391.4 M747.5,392.3 L753.5,395.0 M769.0,383.4 L770.1,390.5 M791.8,385.5 L796.8,384.1 M847.6,359.0 L853.4,359.3 M683.4,432.7 L678.8,440.2 M711.3,427.5 L714.2,427.1 M663.1,455.2 L674.3,455.3 M906.5,352.5 L905.1,343.6 M859.9,362.6 L859.2,365.4 M685.7,450.3 L686.5,453.2 M846.1,376.7 L847.3,374.0 M804.5,387.4 L803.8,391.9 M793.4,391.5 L798.3,391.4 M833.4,369.5 L828.8,366.0 M886.7,339.1 L892.6,338.0 M879.9,360.7 L878.5,360.7 M895.9,355.6 L897.0,354.3 M696.1,435.0 L697.8,436.0 M685.9,463.3 L689.0,461.5 M676.3,491.0 L680.3,482.7 M684.7,456.7 L686.8,459.3 M897.9,389.9 L899.3,388.3 M749.9,415.3 L754.1,413.2 M676.5,463.3 L672.5,464.2 M897.1,385.8 L898.9,384.7 M705.1,431.2 L706.8,422.7 M779.8,401.9 L783.1,399.8 M753.4,404.5 L758.3,400.3 M896.1,362.4 L894.2,362.9 M882.0,357.8 L882.8,360.9 M764.7,407.8 L766.0,407.5 M747.4,416.8 L750.0,417.5 M809.4,390.0 L812.2,389.2 M760.1,400.4 L766.8,395.8 M794.0,399.3 L793.3,396.5 M900.0,384.1 L899.0,381.9 M823.1,373.9 L823.8,380.2 M788.5,396.8 L785.6,400.0 M842.8,363.9 L846.7,361.7 M871.9,362.5 L875.3,360.4 M820.9,382.1 L823.8,380.2 M916.6,359.2 L907.8,362.5 M842.7,358.6 L847.6,359.0 M847.1,376.0 L847.3,374.0 M800.7,370.2 L797.4,377.7 M823.1,373.9 L823.8,373.1 M854.4,364.9 L856.7,369.3 M864.7,366.1 L868.4,363.7 M811.1,365.9 L815.7,370.8 M701.0,434.6 L704.4,433.8 M779.8,401.9 L780.5,404.6 M720.9,426.7 L722.9,423.1 M738.5,409.5 L739.3,410.6 M895.4,355.9 L893.7,356.8 M896.9,364.6 L898.7,361.6 M753.4,404.5 L753.6,410.6 M731.1,422.9 L734.2,418.3 M707.5,434.3 L704.4,433.8 M680.3,482.7 L686.2,478.0 M687.8,441.9 L691.0,440.2 M755.7,412.5 L758.1,410.9 M795.0,395.9 L796.6,398.5 M758.3,400.3 L758.9,395.7 M751.2,404.1 L753.5,395.0 M902.1,328.0 L892.6,338.0 M712.3,432.6 L709.7,433.0 M844.1,376.7 L844.9,375.1 M705.1,431.2 L704.4,433.8 M696.6,433.7 L698.2,433.5 M848.3,371.8 L846.7,361.7 M806.7,389.8 L809.4,390.0 M846.7,361.7 L847.6,359.0 M687.8,460.4 L686.8,459.3 M893.0,350.9 L894.8,352.4 M908.3,375.2 L908.1,382.5 M915.0,347.5 L906.5,352.5 M814.3,387.7 L814.3,390.2 M689.0,485.4 L688.1,479.2 M899.7,390.8 L899.3,388.3 M899.3,388.3 L898.9,384.7 M802.4,382.6 L798.3,391.4 M686.2,465.5 L689.7,468.2 M687.3,444.5 L687.8,441.9 M683.8,449.6 L686.5,453.2 M903.8,370.8 L907.4,369.1 M742.3,418.8 L742.8,420.9 M842.0,353.0 L838.0,363.3 M888.3,355.9 L890.7,354.0 M745.3,412.0 L745.8,416.1 M899.9,378.5 L902.8,379.3 M723.6,420.4 L721.9,418.4 M705.7,423.3 L706.8,422.7 M808.6,379.0 L810.3,386.2 M678.6,476.2 L680.3,482.7 M750.1,412.7 L749.9,415.3 M692.6,415.1 L698.7,421.3 M760.4,409.3 L764.7,407.8 M736.8,419.2 L739.6,416.0 M883.9,348.2 L883.3,352.9 M709.7,422.2 L716.8,416.8 M680.7,489.1 L680.3,482.7 M829.9,379.1 L831.6,381.0 M834.4,380.0 L834.2,375.9 M770.7,395.9 L766.8,395.8 M898.5,379.5 L896.6,382.0 M895.4,355.9 L894.8,354.3 M758.3,387.8 L758.9,395.7 M899.0,389.8 L899.7,390.8 M897.5,372.4 L897.4,375.9 M802.4,382.6 L804.5,387.4 M862.7,359.0 L862.0,363.9 M812.2,389.2 L814.3,387.7 M866.9,347.2 L873.2,344.8 M815.9,387.5 L814.3,390.2 M683.4,432.7 L685.5,440.9 M839.6,373.4 L842.6,375.0 M906.8,363.5 L907.4,369.1 M893.8,344.1 L900.1,341.0 M691.1,484.4 L691.9,481.1 M733.9,412.4 L734.2,418.3 M894.7,342.2 L900.1,341.0 M878.8,356.1 L882.0,357.8 M821.5,361.6 L828.8,366.0 M714.6,430.0 L714.2,427.1 M691.9,481.1 L693.9,481.2 M740.1,417.8 L739.6,416.0 M678.7,468.3 L683.5,459.0 M718.1,427.7 L717.0,432.4 M815.9,387.5 L819.4,385.7 M826.5,385.2 L826.6,381.2 M781.8,391.1 L783.1,399.8 M791.9,379.1 L796.8,384.1 M808.6,379.0 L806.3,373.4 M770.7,395.9 L769.0,395.1 M893.8,344.1 L894.7,342.2 M718.7,431.5 L718.1,427.7 M853.1,371.1 L852.4,374.0 M844.9,375.1 L847.3,374.0 M833.4,369.5 L829.1,371.1 M879.6,351.4 L883.3,352.9 M787.4,387.7 L792.3,393.8 M681.4,419.7 L680.9,428.4 M807.1,386.8 L806.6,388.1 M905.2,351.7 L905.8,356.7 M894.8,352.4 L897.0,354.3 M899.0,381.9 L899.1,378.9 M868.4,363.7 L866.8,368.5 M902.4,358.7 L905.8,356.7 M682.7,431.8 L680.9,428.4 M735.8,418.1 L739.6,416.0 M714.7,405.9 L721.0,409.7 M749.3,405.0 L745.3,412.0 M897.0,373.6 L895.4,374.2 M896.1,362.4 L894.3,364.5 M696.2,426.4 L700.1,425.1 M753.5,395.0 L758.3,400.3 M688.3,474.3 L687.0,472.7 M685.5,445.6 L686.6,446.1 M685.7,450.3 L683.8,449.6 M893.8,344.1 L888.8,347.4 M900.0,384.1 L898.9,384.7 M787.4,387.7 L791.8,385.5 M842.7,358.6 L846.7,361.7 M859.2,358.4 L859.5,351.2 M689.7,471.4 L692.6,470.6 M859.6,367.1 L859.2,365.4 M897.5,372.4 L898.2,369.0 M778.0,402.8 L775.1,406.8 M900.0,384.1 L900.4,381.3 M798.4,392.0 L798.3,391.4 M690.9,477.8 L690.3,473.5 M694.6,428.0 L690.3,429.1 M680.6,449.8 L684.6,443.0 M727.6,414.1 L734.2,418.3 M705.2,436.3 L704.4,433.8 M873.9,352.4 L868.2,353.7 M875.3,360.4 L875.0,364.2 M687.0,472.7 L689.3,470.9 M731.1,422.9 L735.4,421.5 M862.3,344.6 L863.9,349.7 M680.3,482.7 L688.0,485.8 M690.3,429.1 L690.5,436.9 M684.7,456.7 L686.5,453.2 M758.9,408.2 L760.4,409.3 M838.9,368.9 L837.0,374.7 M751.2,404.1 L753.4,404.5 M727.6,414.1 L733.9,412.4 M747.5,392.3 L743.7,401.8 M749.9,398.1 L753.5,395.0 M767.8,405.2 L766.3,404.7 M889.7,350.4 L892.2,352.0 M844.2,370.9 L844.9,375.1 M791.1,396.9 L792.3,393.8 M696.2,426.4 L698.2,433.5 M687.8,460.4 L689.0,461.5 M702.2,431.9 L704.4,431.2 M838.9,368.9 L842.8,363.9 M848.3,371.8 L850.4,370.9 M791.9,387.0 L791.8,385.5 M838.0,363.3 L842.7,358.6 M877.6,343.7 L882.9,343.9 M779.6,379.0 L787.0,383.8 M884.4,358.2 L888.3,355.9 M903.8,370.8 L906.8,376.7 M705.7,423.3 L705.1,431.2 M683.5,459.0 L681.0,456.7 M736.8,419.2 L740.1,417.8 M728.1,423.0 L731.1,422.9 M899.3,388.3 L900.8,384.0 M834.4,380.0 L835.5,379.1 M756.4,408.3 L753.4,404.5 M711.6,413.2 L716.8,416.8 M687.8,460.4 L685.9,463.3 M756.4,408.3 L758.9,408.2 M832.9,376.6 L834.2,375.9 M745.4,405.6 L749.9,398.1 M749.9,415.3 L751.4,417.4 M776.9,400.6 L776.5,391.4 M760.1,400.4 L758.9,408.2 M822.1,383.1 L820.9,382.1 M760.0,407.9 L763.6,406.1 M672.2,437.4 L675.2,443.7 M801.5,378.7 L808.6,379.0 M712.3,432.6 L712.9,431.5 M721.9,418.4 L720.2,424.4 M844.2,370.9 L847.3,374.0 M850.4,370.9 L851.2,374.7 M846.7,361.7 L854.4,364.9 M811.1,365.9 L806.3,373.4 M908.3,375.2 L907.4,369.1 M905.8,356.7 L906.5,352.5 M893.7,356.8 L892.8,354.1 M892.6,338.0 L900.1,341.0 M818.7,382.2 L815.8,384.3 M703.7,410.4 L704.4,418.0 M896.0,359.5 L897.8,359.1 M899.3,388.3 L897.4,389.2 M678.7,468.3 L684.5,465.8 M735.4,421.5 L736.8,419.2 M689.7,471.4 L689.3,470.9 M706.8,422.7 L709.7,422.2 M691.7,484.2 L694.4,482.6 M900.9,365.2 L896.9,364.6 M704.4,418.0 L711.6,413.2 M883.9,348.2 L882.9,343.9 M738.5,409.5 L743.7,401.8 M665.2,468.2 L672.5,464.2 M793.3,396.5 L795.0,395.9 M884.4,358.2 L885.1,359.9 M702.6,436.4 L705.2,436.3 M770.7,395.9 L772.7,400.0 M796.8,384.1 L800.9,381.5 M685.5,445.6 L680.6,449.8 M815.8,384.3 L819.4,385.7 M797.4,377.7 L801.5,378.7 M720.9,426.7 L722.7,429.8 M889.7,350.4 L888.8,347.4 M723.6,420.4 L722.9,423.1 M728.1,423.0 L727.1,427.4 M822.1,383.1 L823.8,380.2 M778.9,404.4 L779.8,401.9 M897.5,372.4 L896.8,370.0 M844.2,370.9 L848.3,371.8 M686.7,469.2 L686.2,465.5 M802.4,382.6 L801.5,378.7 M894.8,354.3 L897.0,354.3 M868.6,361.8 L868.1,361.9 M856.7,369.3 L859.6,367.1 M815.9,387.5 L816.0,389.4 M721.9,418.4 L722.9,423.1 M686.2,465.5 L685.9,463.3 M729.1,421.7 L731.1,422.9 M906.8,363.5 L905.8,356.7 M898.2,369.0 L900.9,365.2 M819.4,385.7 L822.0,387.4 M689.7,471.4 L687.0,472.7 M862.7,367.6 L864.3,368.9 M863.9,356.7 L859.5,351.2 M745.8,416.1 L744.3,420.3 M712.9,431.5 L712.1,428.5 M814.8,382.7 L814.0,385.2 M680.6,449.8 L678.8,440.2 M818.7,388.2 L819.4,385.7 M716.7,418.7 L718.0,424.0 M689.3,470.9 L692.2,468.2 M711.3,427.5 L709.7,422.2 M691.9,481.1 L693.3,477.9 M893.8,344.1 L889.7,350.4 M894.9,371.4 L896.8,370.0 M700.1,425.1 L704.4,418.0 M785.6,400.0 L788.6,398.7 M763.6,412.1 L760.4,409.3 M797.8,395.1 L801.3,393.9 M800.9,381.5 L801.5,378.7 M847.6,359.0 L854.5,355.7 M824.3,383.6 L823.8,380.2 M683.4,432.7 L678.7,434.8 M718.0,424.0 L720.2,424.4 M663.1,455.2 L673.9,451.6 M906.8,363.5 L900.9,365.2 M685.7,450.3 L686.1,449.2 M900.0,384.1 L900.8,384.0 M853.1,371.1 L854.0,373.6 M685.8,444.6 L686.6,446.1 M694.6,428.0 L691.6,436.3 M883.3,352.9 L889.7,350.4 M865.6,361.4 L865.2,363.0 M892.8,354.1 L892.2,352.0 M804.5,387.4 L802.9,389.4 M904.5,383.4 L908.1,382.5 M905.2,351.7 L905.1,343.6 M684.7,456.7 L687.0,455.2 M685.7,450.3 L688.8,451.5 M863.9,356.7 L862.7,359.0 M745.8,416.1 L745.7,419.8 M894.8,354.3 L892.8,354.1 M673.9,451.6 L680.6,449.8 M896.1,362.4 L893.6,361.7 M764.7,407.8 L766.3,404.7 M766.8,395.8 L766.3,404.7 M711.3,427.5 L706.8,432.2 M702.2,431.9 L704.4,433.8 M758.1,410.9 L756.5,414.8 M770.1,390.5 L776.5,391.4 M848.3,371.8 L850.1,374.8 M700.1,425.1 L704.4,431.2 M838.0,363.3 L842.8,363.9 M814.8,382.7 L812.8,380.4 M760.1,400.4 L766.3,404.7 M853.4,359.3 L854.5,355.7 M819.4,385.7 L822.1,383.1 M781.4,391.5 L781.8,391.1 M846.7,361.7 L850.4,370.9 M676.5,463.3 L681.0,456.7 M899.9,378.5 L899.1,378.9 M806.7,389.8 L808.3,392.8 M859.6,367.1 L862.7,367.6 M896.9,367.8 L894.6,370.0 M897.4,375.9 L897.0,373.6 M843.6,365.2 L838.9,368.9 M798.4,392.0 L801.3,393.9 M822.1,383.1 L823.6,386.3 M735.8,418.1 L735.4,421.5 M714.7,405.9 L711.6,413.2 M875.3,360.4 L876.5,363.6 M728.9,421.2 L731.1,422.9 M690.3,473.5 L692.9,473.2 M687.8,441.9 L690.5,436.9 M716.9,412.4 L721.0,409.7 M725.7,401.3 L734.0,406.5 M740.2,421.6 L740.1,417.8 M766.0,407.5 L766.3,404.7 M754.1,413.2 L754.1,415.9 M676.5,463.3 L678.7,468.3 M769.8,403.8 L771.7,405.2" stroke="#0a0a0a" stroke-width="1.0" fill="none"/>
<path d="" stroke="#111" stroke-width="0.8" fill="none"/>
<path d="M733.9,426.9 L735.1,425.6 M844.1,376.7 L845.2,377.1 M738.9,424.3 L739.0,422.2 M897.1,385.8 L896.8,386.2 M876.5,363.6 L877.6,363.0 M692.0,465.7 L693.4,466.1 M893.8,375.0 L894.2,373.9 M713.6,433.6 L714.7,433.8 M749.8,421.0 L751.8,420.1 M895.1,376.4 L895.4,374.2 M856.5,375.2 L855.4,374.7 M721.8,433.0 L723.4,430.8 M757.0,418.3 L756.5,417.5 M773.7,409.9 L773.8,408.5 M731.9,428.5 L731.3,429.1 M749.7,420.0 L751.8,420.1 M779.1,408.4 L782.0,407.4 M829.3,382.5 L829.7,383.5 M784.8,406.5 L786.3,405.4 M893.8,375.0 L892.6,374.3 M696.2,478.7 L696.9,479.9 M845.3,377.4 L846.5,378.5 M693.1,460.7 L693.7,461.3 M784.4,405.6 L786.3,404.5 M826.5,385.2 L826.3,385.6 M774.7,407.3 L775.3,409.2 M791.8,403.4 L791.7,402.4 M734.7,427.4 L735.1,425.6 M896.2,383.4 L895.4,382.1 M894.9,375.5 L894.0,375.5 M855.4,373.0 L855.4,374.7 M804.6,398.0 L805.5,397.3 M871.2,368.4 L870.5,369.3 M822.9,389.0 L824.0,388.2 M809.1,394.7 L809.6,392.8 M696.6,440.9 L695.8,441.8 M696.9,481.4 L695.4,480.9 M822.0,387.4 L823.6,386.3 M780.7,406.0 L781.6,404.9 M838.8,380.7 L840.1,380.0 M828.7,386.1 L829.0,384.8 M891.0,359.2 L891.6,359.6 M747.7,419.7 L747.5,418.8 M696.2,478.7 L695.4,478.8 M832.4,383.6 L832.8,382.6 M836.0,383.6 L835.3,381.5 M745.2,420.4 L744.3,420.3 M840.7,382.0 L841.5,380.8 M846.1,379.8 L845.2,379.5 M893.0,372.0 L893.8,370.4 M702.9,440.2 L704.2,439.1 M719.9,432.6 L721.7,431.6 M856.8,374.0 L858.2,373.3 M751.9,418.3 L752.9,419.0 M862.2,371.3 L861.3,370.5 M719.7,431.1 L721.3,430.5 M789.5,404.1 L791.8,403.4 M736.9,425.8 L738.2,424.3 M692.7,462.0 L693.7,461.3 M714.7,433.8 L716.1,432.5 M736.6,424.0 L737.9,423.3 M752.9,419.0 L753.7,418.0 M875.5,367.2 L877.0,365.8 M895.0,390.0 L895.0,390.9 M719.3,434.3 L719.6,434.3 M879.9,360.7 L882.8,360.9 M877.8,366.5 L881.2,364.7 M794.1,401.1 L794.0,399.5 M896.6,382.0 L896.0,380.4 M692.2,474.2 L692.9,473.2 M786.9,401.9 L788.6,401.8 M873.6,367.9 L870.5,369.3 M823.9,386.8 L824.8,386.6 M807.3,395.4 L808.7,395.7 M692.3,456.8 L691.4,455.7 M691.4,443.1 L693.2,442.8 M717.7,433.6 L718.5,433.5 M689.2,447.3 L689.0,445.5 M783.2,403.5 L781.6,404.9 M892.6,374.3 L893.4,372.2 M843.2,380.3 L844.2,379.0 M855.4,373.0 L856.9,372.7 M693.6,459.7 L692.6,456.3 M813.8,391.3 L812.9,392.7 M838.0,382.3 L838.8,380.7 M826.7,386.6 L827.4,386.1 M705.2,436.3 L703.6,438.1 M891.5,365.2 L892.1,363.9 M859.4,370.9 L860.8,370.6 M696.6,440.9 L696.7,441.2 M699.5,439.6 L700.8,439.5 M791.7,403.4 L791.7,402.4 M751.2,417.6 L751.4,417.4 M842.7,379.0 L844.2,379.0 M878.0,365.4 L879.3,363.2 M782.9,405.4 L782.1,406.2 M755.3,415.5 L754.9,415.4 M843.7,380.8 L844.1,380.8 M719.6,434.3 L720.8,433.6 M865.5,368.7 L864.3,368.9 M814.5,390.5 L816.5,389.9 M836.0,383.6 L837.8,383.5 M724.0,430.7 L723.8,429.0 M892.6,374.3 L892.5,371.3 M895.4,381.8 L896.6,382.0 M843.4,378.3 L844.2,379.0 M718.5,433.5 L719.9,432.6 M735.6,427.1 L736.9,427.0 M877.6,363.0 L879.3,363.2 M691.2,462.3 L692.3,462.9 M895.0,385.4 L895.5,383.5 M692.2,450.7 L690.7,449.9 M735.1,425.6 L736.9,425.8 M823.5,388.9 L824.2,389.0 M750.0,417.5 L751.4,417.4 M814.5,390.5 L813.8,391.3 M690.5,455.9 L690.8,453.4 M858.5,374.4 L858.3,374.9 M816.5,389.9 L817.3,391.1 M894.2,383.2 L894.0,383.0 M892.5,360.3 L892.9,358.7 M772.2,409.0 L772.3,408.7 M784.8,403.6 L786.2,402.7 M693.2,442.8 L694.2,443.4 M790.8,401.0 L792.1,400.3 M696.3,441.3 L696.6,442.6 M860.5,371.4 L861.3,370.5 M894.4,368.8 L893.8,370.4 M803.4,396.7 L802.3,395.4 M786.3,405.4 L787.5,404.0 M777.3,409.0 L776.8,409.5 M811.1,393.6 L812.1,393.1 M821.3,388.0 L822.9,389.0 M824.8,386.1 L826.3,385.6 M804.3,395.2 L805.6,393.8 M830.0,385.7 L831.6,386.4 M839.3,381.8 L838.8,380.7 M692.9,443.9 L692.7,443.1 M824.0,388.2 L824.8,386.6 M698.5,443.3 L699.3,441.8 M810.1,392.2 L810.4,392.3 M835.1,381.7 L834.8,382.9 M893.0,364.6 L894.3,364.5 M721.7,431.6 L722.7,429.8 M710.5,436.1 L710.8,435.1 M863.2,371.3 L864.5,370.4 M697.9,441.6 L699.5,439.6 M704.2,439.1 L705.2,440.3 M752.1,420.0 L751.8,420.1 M752.3,418.0 L753.7,418.0 M844.9,380.2 L844.2,379.0 M689.7,468.2 L692.0,465.7 M690.4,447.2 L691.4,446.5 M840.3,379.0 L839.7,378.9 M691.9,460.5 L693.6,459.7 M848.3,378.3 L847.0,379.8 M721.3,430.5 L722.7,429.8 M753.8,416.4 L754.1,415.9 M743.0,423.1 L742.8,420.9 M690.2,445.8 L691.4,444.6 M692.4,458.1 L692.6,456.3 M693.7,471.8 L695.6,471.7 M893.8,382.1 L893.6,380.4 M692.2,468.2 L693.5,467.5 M891.6,366.3 L891.5,365.2 M772.8,409.6 L773.8,408.5 M853.0,376.7 L856.5,375.2 M866.7,371.1 L865.5,370.3 M783.6,405.1 L784.8,403.6 M790.0,402.9 L791.7,402.4 M808.7,395.7 L809.1,394.7 M692.2,468.2 L691.9,467.4 M808.7,394.8 L809.6,392.8 M690.8,453.4 L690.8,452.2 M803.4,396.7 L804.3,395.2 M843.1,381.4 L843.2,380.3 M892.3,369.4 L893.3,369.4 M827.4,386.1 L829.0,384.8 M700.0,442.3 L699.3,441.8 M877.4,364.0 L878.0,365.4 M892.1,368.0 L893.5,368.1 M706.8,436.8 L707.8,436.7 M859.4,373.2 L859.4,370.9 M844.2,379.0 L845.2,379.5 M891.4,362.2 L891.7,360.9 M895.5,387.6 L895.9,388.6 M849.5,376.8 L849.1,375.4 M701.2,440.6 L702.9,440.2 M839.3,381.8 L840.1,380.0 M698.4,442.2 L697.9,441.6 M860.8,370.6 L861.3,370.5 M866.8,368.5 L868.1,368.8 M692.1,455.4 L691.4,455.7 M892.3,369.4 L892.1,368.0 M879.3,363.2 L880.2,362.6 M694.3,468.3 L693.5,467.5 M753.5,419.5 L757.0,418.3 M762.1,415.6 L763.8,414.2 M897.8,391.9 L897.2,391.5 M749.7,420.0 L750.0,417.5 M767.1,410.5 L768.3,410.8 M762.9,413.7 L763.3,412.6 M770.2,411.1 L773.0,411.5 M758.0,414.6 L759.0,414.5 M893.4,365.4 L894.3,364.5 M784.4,405.6 L786.3,405.4 M893.5,362.7 L894.2,362.9 M729.9,428.4 L730.7,429.5 M896.2,383.4 L895.5,383.5 M894.9,375.5 L894.1,376.5 M887.9,362.2 L890.8,361.0 M737.6,426.1 L738.2,424.3 M690.8,457.1 L690.5,455.9 M741.8,423.1 L741.5,423.3 M747.7,419.7 L747.6,420.7 M696.2,478.7 L695.4,480.9 M812.1,393.1 L812.9,392.7 M863.6,369.3 L864.5,370.4 M696.9,479.9 L696.0,475.7 M692.8,467.2 L692.0,465.7 M745.2,420.4 L744.4,421.9 M825.1,387.2 L826.3,385.6 M893.0,372.0 L893.4,372.2 M696.6,440.9 L696.3,441.3 M834.6,381.6 L835.3,381.5 M694.6,444.8 L694.2,443.4 M892.8,370.1 L893.8,370.4 M885.5,360.2 L887.2,361.1 M689.1,464.0 L691.2,462.3 M705.2,440.3 L706.4,438.9 M856.9,372.7 L858.2,373.3 M892.4,361.8 L893.6,361.7 M712.3,437.5 L711.6,436.5 M839.6,382.9 L843.1,381.4 M714.7,433.8 L716.3,434.6 M844.1,380.8 L847.0,379.8 M897.8,392.3 L895.4,393.2 M700.0,442.3 L701.2,440.6 M689.0,461.5 L691.2,460.2 M736.6,424.0 L738.2,424.3 M729.9,428.4 L729.4,428.0 M722.7,429.8 L723.8,429.0 M715.2,432.4 L714.7,433.8 M738.2,424.3 L737.9,423.3 M727.3,430.1 L725.9,429.5 M738.9,424.3 L740.5,423.3 M892.8,370.1 L892.3,369.4 M689.2,447.3 L690.5,448.4 M734.8,425.5 L733.4,425.5 M753.7,418.0 L754.1,415.9 M788.1,400.5 L790.2,400.7 M811.8,391.8 L812.9,392.7 M856.5,375.2 L856.8,374.0 M721.8,433.0 L724.8,431.7 M773.7,409.9 L775.3,409.2 M855.3,372.3 L856.9,372.7 M788.7,403.3 L788.6,401.8 M895.0,390.9 L895.8,390.0 M790.1,401.0 L790.8,401.0 M826.5,385.2 L827.0,385.4 M816.3,391.7 L817.3,391.1 M855.4,373.0 L856.8,374.0 M826.7,386.6 L826.3,385.6 M746.1,422.4 L746.5,421.6 M838.0,380.0 L838.8,380.7 M707.8,435.6 L706.8,436.8 M747.7,419.7 L749.2,420.5 M885.5,360.2 L886.9,359.5 M881.2,364.7 L879.5,364.2 M832.4,383.6 L833.8,383.5 M836.0,383.6 L836.1,381.2 M854.7,374.5 L855.1,373.7 M756.0,415.3 L754.9,415.4 M840.7,382.0 L843.1,381.4 M860.6,373.4 L860.5,373.0 M846.1,379.8 L847.0,379.8 M766.7,412.8 L766.6,411.8 M702.9,440.2 L705.2,440.3 M883.7,361.0 L882.8,360.9 M850.5,374.8 L850.1,374.8 M862.2,371.3 L862.9,370.0 M880.4,364.1 L881.5,362.4 M692.2,450.7 L690.8,452.2 M807.6,396.7 L805.5,397.3 M879.5,364.2 L879.3,363.2 M716.0,435.5 L716.3,434.6 M690.5,455.9 L691.4,455.7 M855.8,371.2 L855.3,372.3 M806.7,393.3 L805.4,395.5 M891.4,364.4 L891.4,362.2 M892.5,360.3 L893.5,359.9 M689.4,453.8 L690.8,453.4 M694.4,474.0 L696.0,474.1 M768.3,410.8 L769.7,409.5 M765.4,412.0 L765.0,413.4 M893.7,356.8 L892.9,358.7 M727.3,430.1 L727.5,429.2 M897.2,387.5 L896.8,386.2 M776.6,407.1 L777.5,406.6 M734.8,425.5 L734.7,425.2 M712.3,432.6 L713.4,433.9 M811.1,393.6 L810.4,392.3 M895.5,387.6 L895.0,390.0 M804.3,395.2 L805.4,395.5 M895.7,392.2 L896.1,391.0 M894.2,383.2 L894.1,384.0 M689.4,453.8 L689.6,451.9 M691.7,459.4 L691.2,460.2 M824.0,388.2 L825.1,387.2 M807.3,395.4 L808.3,392.8 M696.0,474.1 L695.6,471.7 M840.1,380.0 L841.6,378.5 M847.0,379.8 L846.5,378.5 M697.9,441.6 L699.3,441.8 M704.2,439.1 L703.6,438.1 M841.5,380.8 L843.1,381.4 M778.9,404.4 L779.0,405.6 M716.3,434.6 L717.0,432.4 M858.2,373.3 L859.4,373.2 M753.8,416.4 L753.7,418.0 M881.6,363.4 L881.5,362.4 M818.7,388.2 L816.9,389.0 M692.4,458.1 L693.6,459.7 M732.2,425.4 L733.4,425.5 M723.4,430.8 L722.7,429.8 M865.5,368.7 L865.3,368.3 M875.0,364.2 L876.5,363.6 M741.3,425.0 L741.5,423.3 M756.0,415.3 L756.5,414.8 M896.1,391.0 L895.8,390.0 M692.3,456.8 L692.6,456.3 M694.1,469.9 L695.6,471.7 M739.8,425.6 L738.9,424.3 M895.8,390.0 L895.9,388.6 M691.2,462.3 L691.9,460.5 M895.5,379.3 L895.7,377.9 M807.6,396.7 L807.3,395.4 M895.7,377.9 L895.1,376.4 M865.3,370.7 L862.3,373.0 M772.8,411.2 L773.7,409.9 M816.5,389.9 L818.3,390.0 M766.7,412.8 L766.2,414.2 M865.5,368.8 L865.5,370.3 M695.1,469.4 L695.6,471.7 M859.6,369.8 L861.3,370.5 M695.7,482.4 L695.4,480.9 M808.7,394.8 L809.1,394.7 M886.9,359.5 L887.4,360.1 M827.2,388.3 L826.7,386.6 M894.4,368.8 L893.5,368.1 M803.4,396.7 L804.3,396.0 M691.5,457.2 L690.8,457.1 M692.8,454.9 L692.2,452.8 M827.4,386.1 L828.7,386.1 M877.4,364.0 L876.5,363.6 M784.2,406.4 L784.4,405.6 M891.4,362.2 L892.4,361.8 M830.0,385.7 L830.9,383.7 M829.3,382.5 L826.5,385.2 M708.2,437.7 L707.8,436.7 M839.3,381.8 L840.7,381.3 M890.8,361.0 L891.7,360.9 M748.1,421.4 L747.6,420.7 M698.4,442.2 L698.5,443.3 M698.5,443.3 L700.8,442.4 M810.1,392.2 L812.0,391.2 M725.9,429.5 L725.6,428.9 M755.3,415.5 L756.0,415.3 M797.3,400.2 L795.3,400.4 M891.0,360.6 L889.8,360.2 M742.4,424.6 L741.5,423.3 M796.5,398.7 L794.9,399.0 M694.4,479.3 L694.8,477.4 M844.9,380.2 L846.1,379.8 M689.6,451.9 L690.7,449.9 M702.6,436.4 L702.2,438.7 M762.9,413.7 L763.8,414.2 M741.5,423.3 L741.8,422.0 M692.8,467.2 L693.5,467.5 M759.6,415.4 L759.0,414.5 M776.8,409.5 L776.5,408.4 M726.3,428.5 L727.1,427.4 M776.5,408.4 L776.6,407.1 M794.2,402.0 L794.1,401.1 M738.2,423.8 L738.2,424.3 M863.6,369.3 L862.9,370.0 M865.3,370.7 L863.2,371.3 M869.9,367.2 L869.2,368.8 M692.8,467.2 L691.9,467.4 M866.7,371.1 L867.0,369.7 M787.5,404.0 L788.7,403.3 M718.7,431.5 L718.3,431.8 M812.0,391.2 L812.9,392.7 M831.6,386.4 L831.3,385.3 M691.2,463.7 L692.0,465.7 M865.5,368.8 L866.8,368.5 M740.2,421.6 L741.8,422.0 M824.8,386.6 L826.3,385.6 M831.3,385.3 L830.9,383.7 M835.5,379.1 L835.3,381.5 M843.1,381.4 L844.1,380.8 M846.2,377.1 L848.2,377.6 M895.9,388.6 L897.4,389.2 M689.0,461.5 L691.2,462.3 M700.0,442.3 L700.8,442.4 M693.7,461.3 L693.6,459.7 M705.2,438.8 L706.4,438.9 M729.9,428.4 L729.8,429.7 M859.4,373.2 L860.5,373.0 M756.8,417.5 L757.0,418.3 M897.1,385.8 L896.9,385.0 M760.1,413.8 L759.6,415.4 M883.7,363.8 L883.3,362.2 M788.1,400.5 L788.6,401.8 M693.5,467.5 L694.6,467.0 M772.5,408.5 L774.7,407.3 M896.2,383.4 L896.3,383.3 M894.9,375.5 L895.1,376.4 M720.7,430.2 L719.7,431.1 M850.5,374.8 L851.2,374.7 M799.4,400.1 L804.6,398.0 M895.4,387.4 L895.0,385.4 M731.9,428.5 L730.9,428.1 M749.7,420.0 L751.3,418.8 M773.8,408.5 L775.3,409.2 M724.6,427.9 L725.6,428.9 M696.2,478.7 L696.0,475.7 M895.4,374.2 L894.9,373.1 M871.3,364.9 L869.9,367.2 M694.1,445.2 L691.4,446.5 M691.5,457.2 L691.1,458.0 M845.3,377.4 L846.2,377.1 M693.1,460.7 L693.6,459.7 M774.7,407.3 L775.1,406.8 M778.1,406.7 L778.4,407.6 M800.0,398.1 L798.6,398.4 M894.9,375.5 L894.2,373.9 M695.4,478.8 L694.8,477.4 M871.2,368.4 L871.1,368.0 M791.7,402.4 L792.6,401.1 M809.1,394.7 L811.1,393.6 M737.6,426.1 L739.8,425.6 M894.9,371.4 L893.4,372.2 M692.3,463.0 L691.2,462.3 M694.8,477.4 L694.4,476.1 M828.7,386.1 L830.0,385.7 M891.0,359.2 L891.9,357.8 M812.1,393.1 L814.4,393.4 M696.2,478.7 L694.8,477.4 M700.5,442.2 L700.0,442.3 M691.4,444.6 L690.9,443.6 M844.1,376.7 L841.6,378.5 M829.0,384.8 L829.7,383.5 M894.0,378.7 L895.5,379.3 M709.1,437.7 L708.9,435.4 M765.4,412.0 L766.6,411.8 M890.4,358.5 L891.9,357.8 M862.2,371.3 L863.2,371.3 M869.2,368.8 L869.2,367.5 M716.0,435.5 L716.5,435.8 M762.1,415.6 L759.6,415.4 M861.3,370.5 L862.9,370.0 M799.4,400.1 L797.8,399.6 M719.3,434.3 L718.5,433.5 M791.6,398.5 L790.2,400.7 M894.0,378.7 L894.1,376.5 M738.2,424.3 L738.9,424.3 M743.4,424.2 L743.0,423.1 M727.3,430.1 L727.6,430.5 M689.2,447.3 L690.2,445.8 M893.9,365.5 L894.3,364.5 M734.8,425.5 L735.1,425.6 M771.5,408.5 L772.3,408.7 M761.0,414.7 L760.7,413.2 M794.1,401.1 L795.3,400.4 M886.9,359.5 L887.2,361.1 M773.0,411.5 L773.7,409.9 M856.5,375.2 L858.3,374.9 M778.3,409.3 L778.4,407.6 M807.3,395.4 L808.7,394.8 M794.0,399.5 L795.3,400.4 M740.9,424.7 L739.8,425.6 M806.8,393.2 L808.3,392.8 M832.6,384.4 L834.5,384.9 M826.7,386.6 L827.0,385.4 M789.5,404.1 L786.3,405.4 M848.2,376.5 L849.5,376.8 M707.8,439.2 L708.2,437.7 M895.0,385.4 L896.9,385.0 M897.4,375.9 L895.1,376.4 M878.5,360.7 L879.3,363.2 M704.6,437.8 L706.8,436.8 M782.9,405.4 L781.6,404.9 M865.3,368.3 L866.8,368.5 M719.6,434.3 L719.9,432.6 M706.4,438.9 L708.2,437.7 M844.1,376.7 L843.4,378.3 M756.0,415.3 L756.5,417.5 M860.6,373.4 L862.3,373.0 M895.4,381.8 L896.0,380.4 M879.9,360.7 L879.3,363.2 M867.0,369.7 L868.1,368.8 M843.4,378.3 L844.3,377.9 M772.5,408.5 L770.9,407.1 M790.2,400.7 L790.8,401.0 M860.5,373.0 L862.2,371.3 M746.5,421.6 L745.7,419.8 M883.7,361.0 L884.8,362.1 M692.2,450.7 L690.5,448.4 M735.1,425.6 L736.6,424.0 M823.5,388.9 L824.0,388.2 M846.1,376.7 L846.2,377.1 M896.0,377.5 L896.0,380.4 M879.5,364.2 L880.4,364.1 M691.2,460.2 L691.9,460.5 M763.8,414.2 L763.3,412.6 M830.4,383.5 L831.6,381.0 M858.5,374.4 L858.2,373.3 M756.5,414.8 L758.0,414.6 M806.7,393.3 L807.3,395.4 M727.3,430.1 L728.2,429.6 M735.4,421.5 L736.6,424.0 M858.7,372.5 L858.2,373.3 M894.4,368.8 L893.3,369.4 M777.3,409.0 L776.5,408.4 M821.6,387.7 L822.9,389.0 M691.2,460.2 L690.3,459.4 M692.4,475.8 L693.3,475.0 M784.2,406.4 L784.8,406.5 M830.0,385.7 L831.3,385.3 M690.2,445.8 L690.2,443.9 M817.3,391.1 L821.1,389.6 M694.4,474.0 L694.1,472.6 M748.1,421.4 L747.3,422.2 M810.4,392.3 L812.0,391.2 M751.2,417.6 L751.9,418.3 M837.0,383.0 L836.1,381.2 M893.0,364.6 L894.2,362.9 M862.3,373.0 L862.2,371.3 M896.1,391.0 L897.4,389.2 M891.6,366.3 L893.0,365.8 M851.7,376.4 L851.2,374.7 M704.2,439.1 L705.2,438.8 M841.5,380.8 L842.7,379.0 M813.8,391.3 L814.3,390.2 M881.1,364.7 L880.4,364.1 M727.1,427.4 L728.3,427.4 M839.7,378.9 L840.1,380.0 M778.9,404.4 L780.5,404.6 M890.0,358.1 L889.8,360.2 M870.5,369.3 L871.1,368.0 M703.6,438.1 L704.6,437.8 M743.0,423.1 L744.4,421.9 M881.6,363.4 L883.3,362.2 M689.2,450.8 L690.7,449.9 M847.1,376.0 L846.2,377.1 M723.4,430.8 L724.0,430.7 M737.9,423.3 L739.0,422.2 M865.5,368.7 L866.8,368.5 M742.8,420.9 L744.3,420.3 M739.8,425.6 L741.3,425.0 M766.6,411.8 L766.3,413.1 M770.2,410.4 L768.3,410.8 M689.4,449.3 L690.7,449.9 M755.8,417.8 L756.5,417.5 M793.6,399.4 L794.0,399.3 M763.6,412.1 L763.3,412.6 M807.6,396.7 L808.7,395.7 M687.3,444.5 L690.2,443.9 M787.5,404.0 L786.9,401.9 M823.9,386.8 L822.9,389.0 M790.0,402.9 L790.8,401.0 M794.9,399.0 L796.6,398.5 M717.7,433.6 L716.5,435.8 M693.3,477.9 L693.6,476.2 M814.3,392.5 L816.3,391.7 M827.2,388.3 L827.4,386.1 M692.3,462.9 L692.7,462.0 M743.1,419.9 L744.3,420.3 M811.1,393.6 L814.4,393.4 M877.4,364.0 L877.6,363.0 M726.3,428.5 L725.9,426.0 M705.2,438.8 L704.6,437.8 M880.7,361.9 L880.2,362.6 M892.1,368.0 L893.0,365.8 M697.5,443.9 L696.6,442.6 M895.5,387.6 L895.4,387.4 M849.5,376.8 L850.7,376.7 M701.2,440.6 L702.2,438.7 M724.8,431.7 L724.0,430.7 M752.3,418.0 L753.8,416.4 M708.2,437.7 L708.9,435.4 M725.9,431.3 L727.6,430.5 M866.8,368.5 L868.3,367.7 M896.2,383.4 L896.9,385.0 M725.9,429.5 L727.5,429.2 M730.9,428.1 L730.9,425.9 M793.6,399.4 L791.6,398.5 M868.1,368.8 L869.2,368.8 M885.6,359.4 L885.1,359.9 M797.3,400.2 L796.1,400.0 M895.4,393.2 L895.0,390.9 M691.4,443.1 L690.2,443.9 M742.4,424.6 L743.4,424.2 M881.1,364.7 L881.6,363.4 M747.3,422.2 L747.6,420.7 M691.7,453.3 L690.8,453.4 M693.1,464.5 L693.7,461.3 M884.6,360.7 L885.1,359.9 M761.9,413.0 L761.0,414.7 M694.8,477.4 L696.0,475.7 M692.3,463.0 L693.1,464.5 M690.8,457.1 L691.4,455.7 M702.6,436.4 L703.6,438.1 M732.9,426.5 L730.9,428.1 M694.4,476.1 L696.0,474.1 M776.0,410.1 L775.3,409.2 M893.5,362.7 L893.6,361.7 M859.6,369.8 L857.8,371.9 M729.9,428.4 L729.5,427.1 M776.8,409.5 L778.3,409.3 M860.5,371.4 L859.4,370.9 M791.7,402.4 L790.8,401.0 M820.0,388.9 L819.6,389.6 M735.4,423.3 L734.7,425.2 M692.3,463.0 L691.5,463.7 M741.8,423.1 L741.8,422.0 M691.4,443.1 L690.9,443.6 M819.4,385.7 L819.5,388.9 M794.2,402.0 L795.3,400.4 M863.6,369.3 L864.3,368.9 M829.0,384.8 L830.0,385.7 M831.6,386.4 L832.6,384.4 M873.5,364.5 L875.0,364.2 M892.8,365.3 L891.6,366.3 M894.1,384.0 L895.0,385.4 M731.9,428.5 L732.9,426.5 M804.1,395.0 L804.3,395.2 M892.8,370.1 L893.3,369.4 M729.6,426.8 L728.3,427.4 M837.8,383.5 L838.0,382.3 M835.5,379.1 L836.1,381.2 M885.5,360.2 L886.3,359.3 M852.7,375.9 L854.7,374.5 M856.9,372.7 L857.8,371.9 M729.9,428.4 L729.8,426.6 M761.9,413.0 L763.6,412.1 M801.3,396.4 L800.4,396.5 M851.2,377.3 L849.2,378.7 M797.8,396.5 L796.6,398.5 M761.9,413.0 L762.9,413.7 M738.9,424.3 L740.1,422.8 M882.2,364.4 L881.6,363.4 M756.8,417.5 L756.5,414.8 M719.1,431.4 L718.5,433.5 M760.1,413.8 L761.0,414.7 M883.7,363.8 L884.6,363.6 M689.2,447.3 L690.4,447.2 M835.1,381.7 L834.6,381.6 M753.7,418.0 L755.8,417.8 M852.8,374.6 L851.7,376.4 M896.4,392.7 L896.1,391.0 M730.7,429.5 L729.8,429.7 M853.0,376.7 L854.7,374.5 M689.0,445.5 L690.2,445.8 M896.0,380.4 L895.5,379.3 M895.0,390.0 L894.1,384.0 M731.9,428.5 L732.7,428.7 M897.8,392.3 L896.4,392.7 M761.9,413.0 L761.7,415.1 M788.7,403.3 L790.0,402.9 M779.3,406.9 L781.0,407.0 M774.7,407.3 L776.5,408.4 M892.8,365.3 L891.5,365.2 M796.6,398.5 L797.9,397.6 M800.0,398.1 L800.5,398.0 M745.8,422.2 L743.4,424.2 M810.1,392.2 L810.1,392.8 M871.2,368.4 L871.9,368.0 M735.4,423.3 L736.6,424.0 M691.0,440.2 L693.2,442.8 M895.0,385.4 L896.8,386.2 M869.0,367.9 L868.3,367.7 M692.6,456.3 L692.8,454.9 M830.4,383.5 L830.0,385.7 M689.6,464.3 L692.0,465.7 M691.6,443.5 L690.9,443.6 M747.7,419.7 L748.9,418.8 M706.4,438.9 L706.8,436.8 M702.4,441.5 L705.2,440.3 M891.4,364.4 L892.1,363.9 M745.2,420.4 L745.7,419.8 M867.0,369.7 L866.8,368.5 M846.1,379.8 L846.5,378.5 M860.5,373.0 L862.3,373.0 M884.6,363.6 L884.8,362.1 M729.6,426.8 L729.8,426.6 M869.2,368.8 L871.1,368.0 M740.5,423.3 L740.1,422.8 M727.6,430.5 L728.2,429.6 M799.4,400.1 L798.6,398.4 M895.5,383.5 L895.4,382.1 M887.4,360.1 L887.2,361.1 M806.7,393.3 L805.6,393.8 M756.5,414.8 L757.9,416.7 M741.8,422.0 L742.8,420.9 M689.4,453.8 L690.8,452.2 M694.4,474.0 L695.6,471.7 M691.7,459.4 L691.9,460.5 M757.9,416.7 L758.0,414.6 M765.4,412.0 L764.4,412.3 M810.1,392.8 L809.1,394.7 M894.6,370.0 L894.6,368.3 M800.0,398.1 L799.4,400.1 M821.6,387.7 L821.3,388.0 M730.7,429.5 L731.3,429.1 M792.6,401.1 L792.1,400.3 M773.0,411.5 L776.0,410.1 M801.7,397.2 L803.4,396.7 M892.0,357.0 L890.0,358.1 M873.6,367.9 L871.9,368.0 M691.7,459.4 L690.3,459.4 M694.3,468.3 L695.1,469.4 M895.0,390.0 L895.9,388.6 M871.3,364.9 L870.5,367.0 M783.2,403.5 L782.9,404.3 M688.3,448.9 L689.4,449.3 M896.1,391.0 L897.2,391.5 M813.3,390.7 L814.3,390.2 M838.3,379.8 L838.0,380.0 M724.8,430.6 L724.8,431.7 M841.5,380.8 L843.2,380.3 M705.2,436.3 L704.6,437.8 M895.8,390.0 L897.4,389.2 M696.6,440.9 L697.7,440.3 M707.8,439.2 L709.1,437.7 M875.5,364.4 L874.7,364.7 M846.5,378.5 L846.2,377.1 M707.8,435.6 L708.9,435.4 M782.9,405.4 L783.6,405.1 M707.7,436.2 L706.8,436.8 M723.4,430.8 L724.8,431.7 M742.8,420.9 L744.4,421.9 M864.5,370.4 L864.3,368.9 M881.5,362.4 L883.3,362.2 M729.8,426.6 L730.9,425.9 M746.5,421.6 L747.6,420.7 M894.4,368.8 L894.6,368.3 M691.5,457.2 L692.3,456.8 M804.4,394.2 L804.3,395.2 M755.8,417.8 L757.0,418.3 M740.5,423.3 L741.8,422.0 M768.9,407.0 L768.3,410.8 M896.0,377.5 L895.7,377.9 M763.8,414.2 L765.0,413.4 M695.4,480.9 L696.9,479.9 M863.6,369.3 L862.7,367.6 M814.3,391.6 L816.3,391.7 M897.9,389.9 L896.1,391.0 M858.5,374.4 L859.4,373.2 M768.4,411.9 L773.0,411.5 M779.1,408.4 L779.3,406.9 M816.5,389.9 L818.2,389.3 M794.9,399.0 L796.1,400.0 M766.7,412.8 L766.3,413.1 M781.0,407.0 L782.1,406.2 M845.3,377.4 L846.1,376.7 M695.1,469.4 L694.6,467.0 M694.2,466.7 L693.7,461.3 M742.3,418.8 L741.8,422.0 M740.4,422.2 L740.1,422.8 M777.3,409.0 L778.3,409.3 M834.5,384.9 L833.8,383.5 M746.1,422.4 L743.4,424.2 M695.4,480.9 L695.4,478.8 M808.3,392.8 L809.6,392.8 M833.8,383.5 L833.4,382.3 M708.2,437.7 L709.1,437.7 M827.0,385.4 L829.0,384.8 M844.3,377.9 L845.2,377.1 M836.0,383.6 L834.5,384.9 M700.8,439.5 L702.2,438.7 M691.4,446.5 L691.4,444.6 M783.2,403.5 L784.8,403.6 M862.3,373.0 L863.2,371.3 M709.7,433.0 L708.9,435.4 M868.1,368.8 L868.3,367.7 M847.0,379.8 L849.2,378.7 M720.8,433.6 L721.7,431.6 M838.3,379.8 L838.8,380.7 M752.1,420.0 L752.9,419.0 M796.5,398.7 L796.1,400.0 M881.1,364.7 L882.2,364.4 M691.7,453.3 L691.4,455.7 M844.9,380.2 L845.2,379.5 M870.5,369.3 L871.9,368.0 M807.6,396.7 L808.8,395.9 M848.3,378.3 L848.2,377.6 M694.4,476.1 L696.0,475.7 M783.1,403.9 L782.9,404.3 M692.8,467.2 L693.4,466.1 M887.2,361.1 L888.3,361.0 M847.1,376.0 L848.2,376.5 M895.1,381.6 L894.3,380.2 M759.6,415.4 L761.0,414.7 M707.5,434.3 L706.8,436.8 M894.3,380.2 L894.0,378.7 M894.6,368.3 L894.6,367.5 M860.5,371.4 L859.4,373.2 M808.8,395.9 L808.7,395.7 M766.6,411.8 L767.1,412.8 M770.2,410.4 L769.7,409.5 M894.6,367.5 L893.9,365.5 M891.0,360.6 L891.0,359.2 M738.2,423.8 L737.9,423.3 M869.9,367.2 L869.2,367.5 M693.7,471.8 L694.1,469.9 M812.0,391.2 L813.3,390.7 M698.9,438.9 L697.7,440.3 M895.5,387.6 L896.8,386.2 M893.6,380.4 L894.3,380.2 M702.6,439.4 L701.2,440.6 M691.2,463.7 L691.5,463.7 M892.0,357.0 L890.4,358.5 M689.8,454.4 L690.5,455.9 M785.0,402.2 L784.8,403.6 M812.9,392.7 L814.4,393.4 M831.3,385.3 L832.6,384.4 M877.8,366.5 L879.5,364.2 M827.2,388.3 L828.7,386.1 M688.8,451.5 L689.4,453.8 M694.2,443.4 L694.2,442.2 M830.9,383.7 L832.8,382.6 M895.9,388.6 L897.2,387.5 M877.4,364.0 L879.3,363.2 M705.2,438.8 L706.8,436.8 M711.6,436.5 L711.7,434.6 M864.3,368.9 L865.3,368.3 M895.4,387.4 L896.8,386.2 M752.1,420.0 L751.9,418.3 M801.3,396.4 L800.5,398.0 M724.8,431.7 L725.9,431.3 M729.8,429.7 L729.4,428.0 M756.8,417.5 L756.5,417.5 M865.5,370.3 L867.0,369.7 M698.4,442.2 L699.3,441.8 M760.1,413.8 L759.0,414.5 M710.9,435.1 L710.8,435.1 M739.0,422.2 L740.1,422.8 M794.0,399.3 L794.0,399.5 M896.2,383.4 L896.6,382.0 M797.3,400.2 L797.8,399.6 M894.9,375.5 L895.4,374.2 M893.8,370.4 L893.3,369.4 M693.3,475.0 L694.4,476.1 M757.0,418.3 L757.9,416.7 M746.6,422.6 L746.5,421.6 M747.3,422.2 L748.6,421.5 M875.5,364.4 L874.7,365.2 M866.7,371.1 L862.3,373.0 M848.3,378.3 L849.5,376.8 M729.5,427.1 L728.3,427.4 M763.8,415.0 L763.8,414.2 M779.3,406.9 L779.0,405.6 M776.0,410.1 L776.8,409.5 M834.4,380.0 L833.4,382.3 M766.2,414.2 L773.0,411.5 M796.6,398.5 L797.8,399.6 M778.1,406.7 L777.5,406.6 M800.0,398.1 L799.3,397.0 M883.7,361.0 L884.4,358.2 M692.1,455.4 L692.8,454.9 M791.7,402.4 L792.1,400.3 M820.0,388.9 L821.1,389.6 M797.8,399.6 L797.9,397.6 M737.6,426.1 L738.9,424.3 M894.9,371.4 L893.8,370.4 M869.0,367.9 L868.1,368.8 M804.0,394.5 L802.3,395.4 M830.4,383.5 L829.0,384.8 M741.8,423.1 L743.0,423.1 M831.6,381.0 L830.9,383.7 M691.6,443.5 L691.4,444.6 M738.2,423.8 L739.0,422.2 M869.9,367.2 L870.5,367.0 M691.4,444.6 L692.9,443.9 M865.5,368.7 L865.5,368.8 M866.7,371.1 L869.2,368.8 M745.2,420.4 L746.5,421.6 M834.8,382.9 L835.3,381.5 M831.6,386.4 L834.5,384.9 M698.9,438.9 L699.5,439.6 M894.0,378.7 L895.7,377.9 M702.6,439.4 L702.9,440.2 M709.1,437.7 L710.5,436.1 M785.0,402.2 L786.2,402.7 M845.2,379.5 L846.5,378.5 M869.2,368.8 L870.5,369.3 M708.9,435.4 L710.8,435.1 M727.5,429.2 L728.2,429.6 M729.9,428.4 L730.9,428.1 M715.2,432.4 L716.1,432.5 M741.8,422.0 L743.0,423.1 M880.2,362.6 L881.5,362.4 M801.3,396.4 L801.4,396.2 M694.4,482.6 L695.7,482.4 M691.5,463.7 L693.1,464.5 M882.2,364.4 L883.7,363.8 M766.2,414.2 L766.3,413.1 M887.2,362.5 L887.2,361.1 M694.1,472.6 L695.6,471.7 M693.9,481.2 L695.4,480.9 M892.8,365.3 L893.0,364.6 M783.2,406.9 L783.6,405.1 M886.9,359.5 L886.3,359.3 M853.0,376.7 L855.4,374.7 M801.7,397.2 L801.4,396.2 M875.5,364.4 L875.0,364.2 M694.4,482.6 L693.9,481.2 M778.4,407.6 L779.1,408.4 M794.0,399.5 L794.9,399.0 M729.5,427.1 L729.8,426.6 M895.0,390.0 L895.8,390.0 M693.9,481.2 L694.0,480.2 M772.5,408.5 L771.5,408.5 M688.3,448.9 L689.2,450.8 M795.3,400.4 L796.1,400.0 M740.2,421.6 L739.0,422.2 M693.5,467.5 L693.4,466.1 M832.6,384.4 L833.8,383.5 M821.1,389.6 L821.3,388.0 M778.1,406.7 L779.0,405.6 M693.4,466.1 L693.1,464.5 M877.8,366.5 L875.5,367.2 M848.2,376.5 L849.1,375.4 M839.6,382.9 L839.3,381.8 M689.6,464.3 L691.2,462.3 M840.3,379.0 L840.1,380.0 M695.7,443.4 L695.8,441.8 M832.8,382.6 L833.8,383.5 M782.9,405.4 L783.2,406.9 M691.6,443.5 L692.7,443.1 M893.5,368.1 L894.6,368.3 M881.2,364.7 L880.4,364.1 M713.2,436.8 L713.8,434.9 M729.8,426.6 L730.9,428.1 M873.4,367.2 L872.6,365.1 M723.8,429.0 L725.6,428.9 M709.1,437.7 L711.6,436.5 M746.5,421.6 L747.3,422.2 M883.7,361.0 L884.6,360.7 M884.6,363.6 L885.6,362.0 M894.4,368.8 L894.6,370.0 M691.5,457.2 L692.4,458.1 M889.8,360.2 L889.2,358.0 M693.0,471.1 L693.7,471.8 M731.3,429.1 L730.9,428.1 M740.5,423.3 L741.5,423.3 M896.0,377.5 L895.5,379.3 M727.6,430.5 L729.8,429.7 M721.8,433.0 L720.8,433.6 M879.5,364.2 L880.2,362.6 M763.8,414.2 L764.7,414.7 M762.1,415.6 L762.4,416.0 M691.2,446.1 L690.2,445.8 M893.5,368.1 L893.0,365.8 M806.7,393.3 L806.8,393.2 M791.6,398.5 L790.8,401.0 M781.0,407.0 L782.0,407.4 M814.5,390.5 L816.3,391.7 M845.3,377.4 L844.3,377.9 M757.9,416.7 L759.0,414.5 M765.4,412.0 L766.3,413.1 M775.3,409.2 L776.5,408.4 M810.1,392.8 L811.1,393.6 M692.3,463.0 L691.2,463.7 M694.2,466.7 L694.6,467.0 M858.7,372.5 L857.8,371.9 M693.9,482.2 L694.4,482.6 M740.4,422.2 L740.5,423.3 M775.1,406.8 L776.6,407.1 M693.0,471.1 L692.6,470.6 M821.6,387.7 L822.0,387.4 M692.2,450.7 L691.4,446.5 M792.6,401.1 L794.1,401.1 M780.7,406.0 L779.0,405.6 M816.9,389.0 L818.2,389.3 M692.9,443.9 L694.2,443.4 M873.6,367.9 L873.4,367.2 M691.4,455.7 L690.8,453.4 M740.9,424.7 L740.5,423.3 M837.0,383.0 L837.8,383.5 M895.0,390.0 L895.0,385.4 M871.3,364.9 L871.6,366.4 M710.5,436.1 L711.6,436.5 M851.7,376.4 L852.7,375.9 M704.2,439.1 L704.6,437.8 M724.8,430.6 L723.8,429.0 M705.2,436.3 L706.8,436.8 M851.2,374.7 L852.4,374.0 M890.0,358.1 L889.2,358.0 M797.8,395.1 L799.3,397.0 M734.3,427.7 L733.9,426.9 M783.1,403.9 L783.6,405.1 M871.1,368.0 L871.9,368.0 M887.2,361.1 L887.9,362.2 M897.9,389.9 L897.2,391.5 M707.7,436.2 L707.8,436.7 M723.4,430.8 L723.8,429.0 M847.1,376.0 L848.2,377.6 M728.2,429.6 L729.8,429.7 M739.8,425.6 L740.5,423.3 M693.3,477.9 L694.4,476.1 M766.6,411.8 L766.0,410.9 M762.4,416.0 L763.8,415.0 M770.2,410.4 L770.2,411.1 M689.4,449.3 L690.5,448.4 M891.0,360.6 L890.8,361.0 M811.8,391.8 L811.1,393.6 M777.5,406.6 L779.0,405.6 M858.5,374.4 L860.6,373.4 M823.9,386.8 L822.0,387.4 M779.1,408.4 L781.0,407.0 M895.5,387.6 L897.2,387.5 M766.7,412.8 L767.1,412.8 M717.7,433.6 L716.3,434.6 M812.9,392.7 L813.3,390.7 M689.4,449.3 L689.2,447.3 M777.3,409.0 L777.5,406.6 M834.5,384.9 L834.8,382.9 M822.9,389.0 L822.0,387.4 M848.2,377.6 L848.2,376.5 M849.5,376.8 L850.2,375.4 M695.1,469.4 L694.1,469.9 M748.1,421.4 L749.2,420.5 M894.2,383.2 L895.5,383.5 M710.9,435.1 L710.5,436.1 M694.2,466.7 L693.5,467.5 M691.4,446.5 L692.9,443.9 M843.4,378.3 L841.6,378.5 M883.3,362.2 L882.8,360.9 M709.7,433.0 L710.8,435.1 M783.2,403.5 L785.0,402.2 M874.8,366.2 L874.7,365.2 M796.5,398.7 L797.8,399.6 M692.3,463.0 L692.3,462.9 M691.7,453.3 L690.8,452.2 M844.9,380.2 L847.0,379.8 M736.9,427.0 L739.8,425.6 M848.3,378.3 L849.2,378.7 M772.8,411.2 L770.2,411.1 M732.9,426.5 L730.9,425.9 M759.6,415.4 L762.4,416.0 M765.0,413.4 L766.2,414.2 M894.9,373.1 L894.9,371.5 M692.1,455.4 L692.6,456.3 M735.4,421.5 L733.4,425.5 M892.0,357.0 L891.9,357.8 M689.8,454.4 L690.8,453.4 M820.0,388.9 L819.5,388.9 M692.9,476.4 L693.3,477.9 M766.6,411.8 L768.4,411.9 M776.5,408.4 L777.5,406.6 M782.1,406.2 L783.2,406.9 M770.2,410.4 L771.5,408.5 M793.6,399.4 L792.1,400.3 M824.8,386.1 L823.6,386.3 M738.2,423.8 L738.9,424.3 M800.5,398.0 L801.7,397.2 M694.4,476.1 L694.4,474.0 M869.9,367.2 L871.1,368.0 M741.8,423.1 L742.9,423.6 M691.9,467.4 L692.0,465.7 M718.7,431.5 L719.7,431.1 M818.2,389.3 L819.5,388.9 M894.1,384.0 L895.5,383.5 M694.6,444.8 L695.7,443.4 M690.8,452.2 L690.7,449.9 M708.9,435.4 L710.5,436.1 M827.2,388.3 L830.0,385.7 M896.4,392.7 L897.8,391.9 M712.3,437.5 L713.2,436.8 M699.3,441.8 L699.5,439.6 M727.5,429.2 L727.1,427.4 M711.6,436.5 L713.8,434.9 M801.3,396.4 L801.7,397.2 M752.1,420.0 L753.5,419.5 M755.3,415.5 L754.1,415.9 M756.8,417.5 L757.9,416.7 M843.7,380.8 L843.2,380.3 M719.1,431.4 L718.3,431.8 M760.1,413.8 L760.7,413.2 M883.7,363.8 L884.8,362.1 M871.9,368.0 L873.4,367.2 M710.9,435.1 L711.6,436.5 M894.1,376.5 L894.0,375.5 M885.5,360.2 L885.6,359.4 M794.0,399.3 L794.9,399.0 M852.8,374.6 L851.2,374.7 M892.8,365.3 L893.0,365.8 M744.3,420.3 L745.7,419.8 M689.0,445.5 L690.2,443.9 M894.3,364.5 L894.2,362.9 M694.0,480.2 L695.4,480.9 M888.3,361.0 L889.8,360.2 M757.0,418.3 L759.6,415.4 M894.9,371.4 L894.6,370.0 M731.9,428.5 L733.1,427.6 M761.9,413.0 L761.4,412.9 M875.5,364.4 L875.4,365.9 M778.4,407.6 L777.5,406.6 M729.5,427.1 L729.4,428.0 M763.8,415.0 L764.7,414.7 M732.9,426.5 L732.2,425.4 M694.1,445.2 L692.9,443.9 M795.3,400.4 L794.9,399.0 M834.4,380.0 L835.3,381.5 M791.8,403.4 L794.2,402.0 M778.1,406.7 L779.3,406.9 M742.9,423.6 L742.4,424.6 M800.0,398.1 L800.4,396.5 M693.2,442.8 L692.7,443.1 M804.3,396.0 L805.5,397.3 M696.3,441.3 L695.8,441.8 M814.4,393.4 L814.3,392.5 M869.0,367.9 L869.2,368.8 M830.4,383.5 L829.7,383.5 M713.6,433.6 L712.9,431.5 M831.6,381.0 L832.8,382.6 M691.6,443.5 L692.9,443.9 M881.2,364.7 L881.1,364.7 M700.5,442.2 L700.8,442.4 M840.7,381.3 L841.5,380.8 M866.7,371.1 L870.5,369.3 M849.2,378.7 L849.5,376.8 M696.7,441.2 L697.9,441.6 M709.1,437.7 L712.3,437.5 M785.0,402.2 L786.9,401.9 M721.7,431.6 L721.3,430.5 M850.2,375.4 L851.2,374.7 M797.3,400.2 L796.5,398.7 M691.2,446.1 L690.4,447.2 M733.1,427.6 L734.3,427.7 M884.8,362.1 L884.6,360.7 M814.5,390.5 L814.3,390.2 M719.3,434.3 L719.9,432.6 M691.7,459.4 L692.4,458.1 M845.3,377.4 L844.2,379.0 M757.9,416.7 L759.6,415.4 M810.1,392.8 L809.6,392.8 M895.4,382.1 L895.1,381.6 M766.2,414.2 L767.1,412.8 M719.1,431.4 L719.7,431.1 M726.3,428.5 L725.9,429.5 M775.1,406.8 L776.5,408.4 M761.0,414.7 L761.4,412.9 M798.6,398.4 L799.3,397.0 M730.7,429.5 L730.9,428.1 M783.2,406.9 L784.8,406.5 M691.1,458.0 L692.4,458.1 M692.2,450.7 L692.2,452.8 M889.8,360.2 L890.8,361.0 M792.6,401.1 L794.2,402.0 M780.7,406.0 L779.3,406.9 M801.7,397.2 L802.3,395.4 M691.2,446.1 L691.4,446.5 M818.3,390.0 L818.2,389.3 M740.9,424.7 L741.3,425.0 M895.0,390.0 L895.4,387.4 M694.1,472.6 L693.7,471.8 M873.5,364.5 L873.4,367.2 M772.5,408.5 L772.8,409.6 M688.3,448.9 L689.2,447.3 M894.0,383.0 L895.1,381.6 M742.9,423.6 L743.4,424.2 M691.1,458.0 L690.8,457.1 M885.5,360.2 L884.8,362.1 M724.8,430.6 L724.0,430.7 M789.5,404.1 L787.5,404.0 M894.2,373.9 L895.4,374.2 M839.6,382.9 L840.7,382.0 M840.3,379.0 L841.6,378.5 M695.7,443.4 L696.6,442.6 M788.4,402.4 L786.9,401.9 M846.5,378.5 L848.2,377.6 M818.7,388.2 L818.2,389.3 M871.1,368.0 L870.5,367.0 M782.9,405.4 L782.9,404.3 M897.9,389.9 L897.8,391.9 M881.2,364.7 L882.2,364.4 M728.2,429.6 L728.3,427.4 M693.1,460.7 L691.9,460.5 M864.5,370.4 L865.5,370.3 M881.5,362.4 L882.8,360.9 M879.9,360.7 L880.2,362.6 M873.4,367.2 L874.7,365.2 M713.6,433.6 L713.8,434.9 M693.3,477.9 L694.8,477.4 M887.9,362.2 L888.3,361.0 M884.6,363.6 L887.2,362.5 M894.2,373.9 L893.4,372.2 M691.5,457.2 L691.4,455.7 M744.4,421.9 L744.3,420.3 M896.0,377.5 L895.1,376.4 M763.8,414.2 L764.4,412.3 M893.4,372.2 L893.8,370.4 M893.6,361.7 L893.5,359.9 M887.4,360.1 L887.9,359.5 M791.6,398.5 L792.1,400.3 M893.5,359.9 L892.9,358.7 M845.3,377.4 L845.2,379.5 M734.7,427.4 L733.9,426.9 M786.3,404.5 L787.5,404.0 M808.8,395.9 L814.4,393.4 M858.7,372.5 L859.4,370.9 M777.3,409.0 L778.4,407.6 M814.3,390.2 L816.0,389.4 M692.7,462.0 L691.9,460.5 M833.8,383.5 L834.8,382.9 M740.4,422.2 L740.2,421.6 M780.7,406.0 L780.5,404.6 M893.4,365.4 L893.0,364.6 M829.3,382.5 L830.4,383.5 M832.4,383.6 L831.3,385.3 M747.7,419.7 L745.7,419.8 M696.6,442.6 L696.7,441.2 M873.6,367.9 L874.8,366.2 M748.1,421.4 L748.6,421.5 M849.1,375.4 L850.2,375.4 M895.1,381.6 L896.0,380.4 M871.3,364.9 L872.6,365.1 M834.4,380.0 L834.6,381.6 M714.7,434.4 L714.7,433.8 M834.6,381.6 L833.4,382.3 M697.7,440.3 L699.5,439.6 M894.3,380.2 L895.5,379.3 M707.8,436.7 L708.9,435.4 M796.5,398.7 L796.6,398.5 M724.8,430.6 L725.9,429.5 M868.3,367.7 L869.2,367.5 M891.0,360.6 L891.7,360.9 M716.0,435.5 L713.8,434.9 M707.8,439.2 L712.3,437.5 M789.5,404.1 L791.7,403.4 M732.7,428.7 L733.1,427.6 M797.8,395.1 L800.4,396.5 M885.6,362.0 L887.2,362.5 M734.3,427.7 L735.6,427.1 M707.7,436.2 L708.9,435.4 M765.0,413.4 L764.4,412.3 M748.9,418.8 L750.0,417.5 M804.1,395.0 L804.0,394.5 M766.6,411.8 L767.1,410.5 M782.1,406.2 L781.6,404.9 M770.2,410.4 L771.8,410.2 M691.7,459.4 L691.1,458.0 M793.6,399.4 L792.6,401.1 M895.4,393.2 L896.4,392.7 M862.7,367.6 L861.3,370.5 M811.8,391.8 L812.1,393.1 M763.6,412.1 L764.4,412.3 M800.5,398.0 L800.4,396.5 M865.3,370.7 L864.5,370.4 M823.9,386.8 L824.0,388.2 M893.6,380.4 L894.0,378.7 M691.2,463.7 L691.2,462.3 M689.8,454.4 L689.4,453.8 M717.7,433.6 L717.7,433.4 M812.9,392.7 L814.3,392.5 M783.2,403.5 L780.5,404.6 M819.6,389.6 L819.5,388.9 M892.6,374.3 L894.1,376.5 M688.8,451.5 L689.6,451.9 M694.2,443.4 L695.7,443.4 M838.0,382.3 L838.0,380.0 M893.8,370.4 L894.6,370.0 M694.2,442.2 L695.8,441.8 M880.7,361.9 L881.5,362.4 M711.6,436.5 L713.2,436.8 M848.2,377.6 L849.5,376.8 M791.7,403.4 L790.0,402.9 M751.2,417.6 L750.0,417.5 M755.3,415.5 L753.7,418.0 M711.7,434.6 L713.8,434.9 M843.7,380.8 L843.1,381.4 M814.5,390.5 L814.3,391.6 M865.5,370.3 L866.8,368.5 M854.7,374.5 L854.0,373.6 M892.8,365.3 L893.4,365.4 M871.9,368.0 L871.6,366.4 M894.2,383.2 L895.1,381.6 M686.6,446.1 L689.2,447.3 M694.2,466.7 L693.1,464.5 M801.3,393.9 L800.4,396.5 M883.3,362.2 L884.8,362.1 M871.6,366.4 L873.4,367.2 M720.7,430.2 L721.3,430.5 M885.6,359.4 L886.3,359.3 M888.3,361.0 L887.9,359.5 M838.3,379.8 L839.7,378.9 M874.8,366.2 L875.4,365.9 M693.3,475.0 L694.4,474.0 M894.9,371.4 L894.9,371.5 M887.9,359.5 L889.8,360.2 M729.6,426.8 L729.5,427.1 M855.8,371.2 L856.9,372.7 M692.9,473.2 L694.1,472.6 M895.7,392.2 L895.4,393.2 M772.8,411.2 L771.8,410.2 M732.9,426.5 L733.1,427.6 M893.3,369.4 L893.5,368.1 M776.0,410.1 L776.5,408.4 M772.2,409.0 L771.5,408.5 M779.0,405.6 L780.5,404.6 M707.5,434.3 L708.9,435.4 M693.2,442.8 L692.9,443.9 M804.3,396.0 L804.3,395.2 M860.5,371.4 L860.8,370.6 M693.3,475.0 L692.9,473.2 M791.7,402.4 L794.2,402.0 M820.0,388.9 L821.3,388.0 M692.9,476.4 L693.3,475.0 M797.8,399.6 L798.6,398.4 M824.2,389.0 L824.0,388.2 M793.6,399.4 L794.1,401.1 M692.9,473.2 L693.0,471.1 M813.8,391.3 L814.3,391.6 M797.9,397.6 L799.3,397.0 M824.8,386.1 L824.8,386.6 M816.0,389.4 L816.9,389.0 M763.6,412.1 L766.0,410.9 M691.7,453.3 L692.2,452.8 M840.7,381.3 L840.1,380.0 M892.5,360.3 L891.7,360.9 M692.4,458.1 L692.3,456.8 M817.3,391.1 L818.3,390.0 M894.0,378.7 L895.1,376.4 M702.6,439.4 L702.2,438.7 M694.6,444.8 L697.5,443.9 M835.3,381.5 L836.1,381.2 M747.4,416.8 L748.9,418.8 M893.8,382.1 L894.3,380.2 M691.9,481.1 L694.0,480.2 M753.5,419.5 L752.9,419.0 M827.2,388.3 L831.6,386.4 M697.9,441.6 L697.7,440.3 M716.5,435.8 L716.3,434.6 M699.3,441.8 L701.2,440.6 M824.8,386.1 L823.9,386.8 M727.5,429.2 L728.3,427.4 M716.3,434.6 L716.1,432.5 M880.7,361.9 L882.8,360.9 M717.0,432.4 L718.3,431.8 M694.4,482.6 L695.4,480.9 M851.2,377.3 L850.7,376.7 M743.4,424.2 L744.4,421.9 M882.2,364.4 L883.3,362.2 M748.6,421.5 L749.2,420.5 M719.1,431.4 L719.9,432.6 M733.4,425.5 L734.7,425.2 M891.7,360.9 L891.6,359.6 M761.0,414.7 L761.7,415.1 M749.2,420.5 L748.9,418.8 M852.8,374.6 L852.4,374.0 M892.8,365.3 L892.1,363.9 M891.6,359.6 L891.9,357.8 M760.7,413.2 L761.4,412.9 M778.3,409.3 L779.1,408.4 M804.0,394.5 L804.4,394.2 M875.5,364.4 L877.0,365.8 M855.8,371.2 L857.8,371.9 M778.4,407.6 L779.3,406.9 M783.6,405.1 L782.9,404.3 M772.8,411.2 L772.8,409.6 M688.8,451.5 L688.3,448.9 M732.9,426.5 L733.9,426.9 M694.1,445.2 L694.6,444.8 M865.5,368.8 L864.5,370.4 M690.5,448.4 L690.4,447.2 M692.4,475.8 L692.2,474.2 M821.1,389.6 L822.9,389.0 M745.8,422.2 L744.4,421.9 M691.1,458.0 L690.3,459.4 M814.4,393.4 L816.3,391.7 M700.8,442.4 L701.2,440.6 M694.3,468.3 L694.6,467.0 M693.1,464.5 L692.7,462.0 M745.8,422.2 L746.1,422.4 M695.7,443.4 L697.5,443.9 M788.4,402.4 L787.5,404.0 M832.8,382.6 L833.4,382.3 M854.0,373.6 L855.1,373.7 M893.5,368.1 L894.6,367.5 M762.1,415.6 L762.9,413.7 M695.8,441.8 L696.6,442.6 M693.1,460.7 L692.7,462.0 M849.2,378.7 L850.7,376.7 M867.0,369.7 L869.2,368.8 M855.4,374.7 L856.8,374.0 M893.0,365.8 L893.9,365.5 M897.0,373.6 L894.9,373.1 M698.4,442.2 L696.6,442.6 M873.4,367.2 L874.8,366.2 M713.8,434.9 L714.7,434.4 M690.5,448.4 L691.4,446.5 M820.0,388.9 L819.4,385.7 M717.7,433.6 L719.3,434.3 M693.0,471.1 L694.1,469.9 M797.3,400.2 L799.4,400.1 M762.1,415.6 L761.7,415.1 M887.4,360.1 L888.3,361.0 M694.4,479.3 L695.4,480.9 M819.4,385.7 L821.6,387.7 M829.3,382.5 L827.0,385.4 M745.7,419.8 L747.6,420.7 M814.5,390.5 L816.0,389.4 M692.6,470.6 L694.1,469.9 M894.1,384.0 L894.0,383.0 M765.4,412.0 L766.0,410.9 M851.2,377.3 L851.7,376.4 M810.1,392.8 L810.4,392.3 M780.5,404.6 L781.6,404.9 M734.7,427.4 L734.3,427.7 M766.2,414.2 L768.4,411.9 M786.3,404.5 L786.2,402.7 M858.7,372.5 L859.4,373.2 M693.9,482.2 L693.9,481.2 M786.2,402.7 L787.5,404.0 M730.7,429.5 L732.7,428.7 M805.5,397.3 L805.4,395.5 M889.8,360.2 L890.4,358.5 M737.6,426.1 L736.9,427.0 M694.4,479.3 L694.0,480.2 M692.5,471.2 L693.0,471.1 M780.7,406.0 L781.0,407.0 M805.4,395.5 L805.6,393.8 M893.4,365.4 L893.0,365.8 M692.6,470.6 L692.2,468.2 M799.3,397.0 L800.4,396.5 M818.3,390.0 L819.5,388.9 M893.5,362.7 L893.0,364.6 M837.0,383.0 L838.0,382.3 M825.1,387.2 L824.8,386.6 M834.6,381.6 L833.8,383.5 M850.7,376.7 L850.2,375.4 M894.3,380.2 L896.0,380.4 M836.1,381.2 L838.0,380.0 M804.1,395.0 L803.4,396.7 M892.5,371.3 L893.8,370.4 M745.8,422.2 L746.5,421.6 M873.6,363.2 L875.0,364.2 M707.7,436.2 L707.8,435.6 M885.5,360.2 L885.6,362.0 M724.8,430.6 L725.9,431.3 M789.5,404.1 L788.7,403.3 M716.1,432.5 L717.0,432.4 M716.0,435.5 L713.2,436.8 M891.9,357.8 L892.9,358.7 M788.4,402.4 L788.6,401.8 M818.7,388.2 L819.5,388.9 M871.1,368.0 L871.6,366.4 M897.9,389.9 L897.4,389.2 M877.0,365.8 L876.5,363.6 M728.2,429.6 L729.4,428.0 M713.2,436.8 L716.5,435.8 M748.9,418.8 L749.7,420.0 M897.1,385.8 L897.2,387.5 M893.8,375.0 L894.0,375.5 M892.5,371.3 L892.3,369.4 M788.1,400.5 L786.9,401.9 M766.0,410.9 L767.1,410.5 M887.9,362.2 L889.8,360.2 M804.4,394.2 L805.6,393.8 M811.8,391.8 L810.4,392.3 M767.1,412.8 L768.4,411.9 M890.0,358.1 L890.4,358.5 M865.3,370.7 L866.7,371.1 M892.6,374.3 L894.0,378.7 M689.6,464.3 L691.2,463.7 M734.7,427.4 L735.6,427.1 M740.4,422.2 L741.8,422.0 M855.4,373.0 L854.0,373.6 M690.3,459.4 L690.8,457.1 M822.9,389.0 L824.2,389.0 M710.9,435.1 L709.7,433.0 M707.8,439.2 L705.2,440.3 M694.2,442.2 L695.7,443.4 M696.9,481.4 L695.7,482.4 M697.5,443.9 L698.5,443.3 M780.7,406.0 L782.1,406.2 M832.4,383.6 L832.6,384.4 M696.6,442.6 L697.9,441.6 M873.6,367.9 L875.5,367.2 M836.0,383.6 L834.8,382.9 M702.4,441.5 L702.9,440.2 M894.2,383.2 L895.4,382.1 M694.2,466.7 L693.4,466.1 M790.2,400.7 L788.6,401.8 M884.4,358.2 L884.6,360.7 M714.7,434.4 L716.3,434.6 M719.9,432.6 L719.7,431.1 M850.7,376.7 L851.2,374.7 M856.8,374.0 L858.3,374.9 M751.9,418.3 L751.4,417.4 M874.8,366.2 L875.5,367.2 M880.4,364.1 L880.2,362.6 M730.9,425.9 L732.2,425.4 M736.9,425.8 L736.6,424.0 M707.5,434.3 L707.8,435.6 M874.7,365.2 L875.4,365.9 M692.9,473.2 L694.4,474.0 M716.0,435.5 L714.7,434.4 M891.0,359.2 L890.4,358.5 M732.7,428.7 L734.3,427.7 M747.6,420.7 L749.2,420.5 M783.1,403.9 L784.8,403.6 M847.1,376.0 L849.1,375.4 M893.0,372.0 L892.5,371.3 M772.2,409.0 L771.8,410.2 M759.6,415.4 L761.7,415.1 M783.1,403.9 L783.2,403.5 M765.0,413.4 L766.3,413.1 M859.6,369.8 L859.4,370.9 M747.5,418.8 L748.9,418.8 M896.3,383.3 L896.6,382.0 M771.8,410.2 L771.5,408.5 M860.5,371.4 L860.5,373.0 M808.8,395.9 L809.1,394.7 M692.9,476.4 L693.6,476.2 M766.6,411.8 L768.3,410.8 M764.4,412.3 L766.0,410.9 M712.3,432.6 L711.7,434.6 M691.4,443.1 L692.7,443.1 M819.4,385.7 L821.3,388.0 M692.2,474.2 L693.3,475.0 M797.9,397.6 L798.6,398.4 M862.7,367.6 L862.9,370.0 M781.6,404.9 L782.9,404.3 M691.7,453.3 L692.8,454.9 M865.3,370.7 L865.5,370.3 M892.5,360.3 L892.4,361.8 M692.1,455.4 L691.7,453.3 M807.3,395.4 L806.8,393.2 M810.1,392.2 L808.3,392.8 M894.1,376.5 L895.1,376.4 M691.6,443.5 L691.4,443.1 M724.6,427.9 L726.3,428.5 M892.6,374.3 L894.2,373.9 M837.8,383.5 L839.6,382.9 M826.4,388.4 L826.7,386.6 M893.8,382.1 L895.1,381.6 M896.4,392.7 L897.2,391.5 M851.8,377.3 L851.7,376.4 M838.0,382.3 L839.3,381.8 M834.5,384.9 L837.8,383.5 M778.9,404.4 L777.5,406.6 M707.8,439.2 L706.4,438.9 M791.7,403.4 L791.8,403.4 M751.2,417.6 L751.3,418.8 M897.8,392.3 L897.8,391.9 M878.0,365.4 L879.5,364.2 M755.3,415.5 L755.8,417.8 M797.8,396.5 L797.9,397.6 M865.5,368.7 L864.5,370.4 M710.9,435.1 L711.7,434.6 M852.8,374.6 L852.7,375.9 M690.8,452.2 L692.2,452.8 M801.3,393.9 L801.4,396.2 M720.7,430.2 L722.7,429.8 M850.1,374.8 L849.1,375.4 M756.5,417.5 L756.5,414.8 M846.1,376.7 L847.1,376.0 M750.0,417.5 L751.3,418.8 M894.0,375.5 L894.2,373.9 M772.8,411.2 L773.0,411.5 M768.4,411.9 L770.2,411.1 M894.2,362.9 L893.6,361.7 M816.5,389.9 L816.0,389.4 M895.4,381.8 L895.1,381.6 M776.0,410.1 L778.3,409.3 M859.6,369.8 L860.8,370.6 M772.2,409.0 L772.8,409.6 M692.4,475.8 L692.9,476.4 M784.8,403.6 L786.3,404.5 M770.9,407.1 L769.7,409.5 M804.3,396.0 L805.4,395.5 M694.0,480.2 L693.3,477.9 M855.4,373.0 L855.3,372.3 M860.5,371.4 L862.2,371.3 M869.0,367.9 L869.2,367.5 M824.2,389.0 L825.1,387.2 M693.1,464.5 L692.3,462.9 M700.5,442.2 L701.2,440.6 M784.2,406.4 L783.6,405.1 M696.7,441.2 L697.7,440.3 M696.0,475.7 L696.0,474.1 M817.3,391.1 L819.6,389.6 M702.2,438.7 L703.6,438.1 M698.9,438.9 L700.8,439.5 M855.4,374.7 L855.1,373.7 M698.4,442.2 L697.5,443.9 M702.6,439.4 L703.6,438.1 M713.8,434.9 L713.4,433.9 M698.5,443.3 L700.0,442.3 M895.4,382.1 L896.6,382.0 M721.7,431.6 L723.4,430.8 M797.3,400.2 L794.2,402.0 M753.5,419.5 L753.7,418.0 M863.2,371.3 L862.9,370.0 M799.4,400.1 L800.5,398.0 M752.3,418.0 L752.1,417.2 M844.9,380.2 L844.1,380.8 M702.6,436.4 L700.8,439.5 M762.9,413.7 L761.7,415.1 M884.8,362.1 L885.6,362.0 M733.1,427.6 L733.9,426.9 M851.2,377.3 L851.8,377.3 M743.4,424.2 L746.6,422.6 M748.6,421.5 L749.8,421.0 M893.0,364.6 L892.1,363.9 M754.1,415.9 L754.9,415.4 M726.3,428.5 L725.6,428.9 M893.8,382.1 L894.0,383.0 M692.2,468.2 L694.1,469.9 M764.7,414.7 L765.0,413.4 M891.6,366.3 L892.1,368.0 M749.2,420.5 L749.7,420.0 M852.8,374.6 L854.0,373.6 M886.9,359.5 L887.9,359.5 M772.8,409.6 L773.7,409.9 M889.8,360.2 L891.0,359.2 M782.0,407.4 L782.1,406.2 M692.5,471.2 L692.9,473.2 M757.0,418.3 L762.4,416.0 M801.7,397.2 L804.6,398.0 M691.2,446.1 L691.4,444.6 M788.6,401.8 L790.1,401.0 M818.3,390.0 L819.6,389.6 M783.6,405.1 L784.4,405.6 M879.9,360.7 L880.7,361.9 M873.5,364.5 L872.6,365.1 M772.5,408.5 L772.3,408.7 M740.2,421.6 L740.1,422.8 M836.1,381.2 L838.0,382.3 M742.9,423.6 L743.0,423.1 M826.3,385.6 L827.0,385.4 M885.5,360.2 L884.6,360.7 M877.8,366.5 L877.0,365.8 M700.8,442.4 L702.4,441.5 M894.2,373.9 L894.9,373.1 M743.1,419.9 L742.8,420.9 M687.3,444.5 L689.0,445.5 M717.7,433.4 L717.0,432.4 M788.4,402.4 L788.7,403.3 M893.4,372.2 L894.9,371.5 M712.3,432.6 L710.9,435.1 M706.8,436.8 L708.2,437.7 M719.3,434.3 L716.5,435.8 M733.9,426.9 L733.4,425.5 M701.2,440.6 L702.4,441.5 M849.2,378.7 L851.8,377.3 M870.5,367.0 L871.6,366.4 M725.9,431.3 L725.9,429.5 M713.6,433.6 L713.4,433.9 M728.3,427.4 L729.4,428.0 M692.1,455.4 L692.3,456.8 M749.8,421.0 L749.7,420.0 M734.7,425.2 L736.6,424.0 M853.0,376.7 L851.8,377.3 M694.3,468.3 L694.1,469.9 M850.5,374.8 L850.2,375.4 M721.8,433.0 L721.7,431.6 M762.1,415.6 L763.8,415.0 M693.6,476.2 L694.4,476.1 M855.3,372.3 L854.0,373.6 M829.3,382.5 L829.0,384.8 M784.8,406.5 L784.4,405.6 M893.4,365.4 L893.9,365.5 M724.6,427.9 L723.8,429.0 M845.3,377.4 L845.2,377.1 M784.4,405.6 L784.8,403.6 M774.7,407.3 L773.8,408.5 M896.2,383.4 L895.0,385.4 M694.3,468.3 L692.2,468.2 M775.1,406.8 L777.5,406.6 M804.6,398.0 L804.3,396.0 M805.5,397.3 L807.3,395.4 M696.6,440.9 L694.2,442.2 M693.6,476.2 L693.3,475.0 M741.8,423.1 L742.4,424.6 M778.3,409.3 L782.0,407.4 M832.4,383.6 L830.9,383.7 M840.7,382.0 L840.7,381.3 M740.9,424.7 L741.5,423.3 M893.5,362.7 L892.4,361.8 M825.1,387.2 L826.7,386.6 M834.6,381.6 L834.8,382.9 M850.7,376.7 L851.7,376.4 M856.8,374.0 L856.9,372.7 M751.9,418.3 L751.3,418.8 M841.6,378.5 L842.7,379.0 M724.8,430.6 L725.6,428.9 M789.5,404.1 L790.0,402.9 M891.0,360.6 L891.6,359.6 M690.2,443.9 L690.9,443.6 M717.7,433.4 L718.3,431.8 M885.6,362.0 L887.2,361.1 M875.5,367.2 L875.4,365.9 M893.0,372.0 L892.6,374.3 M727.3,430.1 L725.9,431.3 M892.1,363.9 L892.4,361.8 M692.0,465.7 L693.1,464.5 M892.8,370.1 L892.5,371.3 M734.8,425.5 L733.9,426.9 M762.4,416.0 L764.7,414.7 M892.4,361.8 L891.7,360.9 M853.0,376.7 L852.7,375.9 M811.8,391.8 L812.0,391.2 M773.7,409.9 L776.0,410.1 M696.9,481.4 L696.9,479.9 M823.9,386.8 L823.6,386.3 M800.4,396.5 L801.4,396.2 M895.0,390.9 L896.1,391.0 M717.7,433.6 L717.0,432.4 M692.0,465.7 L691.5,463.7 M819.6,389.6 L821.1,389.6 M892.6,374.3 L894.0,375.5 M843.2,380.3 L842.7,379.0 M688.8,451.5 L689.2,450.8 M874.7,364.7 L874.7,365.2 M690.7,449.9 L690.5,448.4 M855.4,373.0 L855.1,373.7 M804.1,395.0 L804.4,394.2 M838.0,382.3 L839.6,382.9 M746.1,422.4 L746.6,422.6 M852.4,374.0 L854.0,373.6 M711.7,434.6 L713.4,433.9 M836.0,383.6 L837.0,383.0 M854.7,374.5 L855.4,374.7 M756.0,415.3 L755.8,417.8 M718.5,433.5 L718.3,431.8 M790.2,400.7 L790.1,401.0 M735.6,427.1 L735.1,425.6 M843.4,378.3 L842.7,379.0 M871.6,366.4 L872.6,365.1 M719.9,432.6 L721.3,430.5 M718.7,431.5 L719.1,431.4 M883.7,361.0 L883.3,362.2 M891.5,365.2 L891.4,364.4 M751.9,418.3 L752.1,417.2 M880.4,364.1 L881.6,363.4 M746.6,422.6 L747.3,422.2 M735.1,425.6 L734.7,425.2 M823.5,388.9 L822.9,389.0 M846.1,376.7 L845.2,377.1 M887.9,359.5 L889.2,358.0 M692.9,473.2 L693.7,471.8 M895.7,392.2 L895.0,390.9 M897.4,389.2 L897.2,387.5 M814.3,391.6 L812.9,392.7 M751.8,420.1 L751.3,418.8 M858.5,374.4 L856.8,374.0 M768.4,411.9 L768.3,410.8 M899.0,389.8 L897.8,391.9 M816.5,389.9 L816.3,391.7 M892.5,360.3 L893.6,361.7 M873.5,364.5 L874.7,364.7 M895.4,381.8 L895.4,382.1 M768.3,410.8 L770.2,411.1 M893.7,356.8 L893.5,359.9 M771.8,410.2 L772.8,409.6 M808.8,395.9 L811.1,393.6 M786.3,405.4 L786.3,404.5 M793.6,399.4 L794.0,399.5 M784.2,406.4 L783.2,406.9 M892.5,360.3 L891.6,359.6 M895.7,392.2 L896.4,392.7 M893.7,356.8 L891.9,357.8 M702.6,439.4 L704.2,439.1 M810.1,392.2 L809.6,392.8 M840.1,380.0 L841.5,380.8 M874.7,364.7 L875.0,364.2 M699.3,441.8 L700.8,439.5 M851.8,377.3 L852.7,375.9 M841.5,380.8 L841.6,378.5 M813.8,391.3 L813.3,390.7 M839.7,378.9 L838.8,380.7 M891.6,359.6 L892.9,358.7 M875.4,365.9 L877.0,365.8 M752.3,418.0 L752.9,419.0 M689.7,468.2 L692.2,468.2 M858.2,373.3 L857.8,371.9 M753.8,416.4 L752.1,417.2 M797.8,396.5 L799.3,397.0 M843.7,380.8 L844.2,379.0 M887.2,362.5 L887.9,362.2 M741.3,425.0 L742.4,424.6 M749.2,420.5 L749.8,421.0 M852.8,374.6 L854.7,374.5 M801.3,393.9 L802.3,395.4 M735.6,427.1 L736.9,425.8 M772.8,409.6 L772.3,408.7 M850.1,374.8 L850.2,375.4 M691.2,462.3 L692.7,462.0 M788.6,401.8 L790.0,402.9 M763.6,412.1 L761.4,412.9 M761.9,413.0 L763.3,412.6 M875.5,364.4 L876.5,363.6 M814.3,391.6 L814.3,392.5 M790.0,402.9 L790.1,401.0 M816.5,389.9 L816.9,389.0 M732.9,426.5 L733.4,425.5 M808.7,395.7 L808.7,394.8 M694.1,445.2 L694.2,443.4 M801.4,396.2 L802.3,395.4 M808.7,394.8 L808.3,392.8 M770.9,407.1 L771.5,408.5 M693.2,442.8 L694.2,442.2 M810.1,392.2 L812.2,389.2 M696.3,441.3 L696.7,441.2 M827.2,388.3 L826.4,388.4 M691.2,462.3 L691.2,460.2 M803.4,396.7 L804.6,398.0 M827.4,386.1 L827.0,385.4 M824.2,389.0 L826.4,388.4 M844.1,380.8 L844.2,379.0 M830.4,383.5 L830.9,383.7 M877.4,364.0 L877.0,365.8 M713.6,433.6 L715.2,432.4 M745.8,422.2 L745.2,420.4 M690.4,447.2 L690.2,445.8 M831.6,381.0 L833.4,382.3 M893.4,372.2 L894.9,373.1 M893.5,368.1 L893.9,365.5 M844.2,379.0 L844.3,377.9 M891.4,362.2 L892.1,363.9 M701.2,440.6 L700.8,439.5 M752.3,418.0 L751.9,418.3 M844.1,376.7 L844.3,377.9 M839.3,381.8 L840.7,382.0 M713.8,434.9 L714.7,433.8 M835.1,381.7 L835.3,381.5 M858.3,374.9 L860.6,373.4 M753.5,419.5 L755.8,417.8 M731.3,429.1 L732.7,428.7 M720.8,433.6 L719.9,432.6 M716.5,435.8 L719.6,434.3 M799.4,400.1 L801.7,397.2 M752.1,420.0 L751.3,418.8 M694.4,479.3 L695.4,478.8 M891.4,362.2 L890.8,361.0 M824.8,386.1 L826.5,385.2 M745.7,419.8 L747.5,418.8 M689.6,451.9 L690.8,452.2 M736.9,427.0 L736.9,425.8 M751.4,417.4 L752.1,417.2 M848.3,378.3 L846.5,378.5 M770.2,411.1 L771.8,410.2 M896.8,386.2 L896.9,385.0 M763.3,412.6 L764.4,412.3 M769.7,409.5 L771.5,408.5 M726.3,428.5 L727.5,429.2 M896.9,385.0 L896.3,383.3 M764.7,414.7 L766.2,414.2 M735.4,423.3 L733.4,425.5 M786.2,402.7 L786.9,401.9 M737.6,426.1 L736.9,425.8 M694.4,479.3 L693.3,477.9 M782.0,407.4 L783.2,406.9 M692.5,471.2 L692.6,470.6 M689.6,451.9 L689.2,450.8 M805.4,395.5 L807.3,395.4 M863.6,369.3 L863.2,371.3 M692.8,467.2 L692.2,468.2 M689.2,450.8 L689.4,449.3 M893.5,362.7 L892.1,363.9 M825.1,387.2 L826.4,388.4 M691.7,459.4 L693.6,459.7 M873.5,364.5 L874.7,365.2 M772.5,408.5 L773.8,408.5 M694.6,467.0 L693.7,461.3 M747.4,416.8 L745.7,419.8 M804.1,395.0 L802.3,395.4 M885.5,360.2 L885.1,359.9 M877.8,366.5 L878.0,365.4 M705.2,440.3 L705.2,438.8 M892.3,369.4 L893.5,368.1 M857.8,371.9 L859.4,370.9 M690.2,443.9 L691.4,444.6 M717.7,433.4 L718.5,433.5 M712.3,432.6 L713.6,433.6 M859.4,373.2 L860.6,373.4 M877.0,365.8 L878.0,365.4" stroke="#000" stroke-width="0.9" fill="none"/>
<polygon points="697.2,481.7 692.3,451.0 692.3,449.7 692.5,448.5 692.9,447.3 693.6,446.2 694.5,445.4 695.5,444.8 887.4,362.5 888.3,362.3 889.2,362.3 890.0,362.7 890.6,363.3 891.1,364.1 891.4,365.2 895.1,393.5" fill="#000"/>
<polygon points="733.5,446 736,442 779,425.5 786,426.5 791,430 791,439.5 741,460.5 735,457" fill="#5b9686"/>
<polygon points="733.5,446 736,442 740,441 742,446 742,459 741,460.5 735,457" fill="#6aa696"/>
<path d="M736.5,441.5 L779,425.5" stroke="#4a7d70" stroke-width="1.2"/>
</svg>

<!-- TOOLBAR -->
<svg class="abs" style="left:0;top:44px" width="1218" height="32">
  <rect x="13.3" y="12.6" width="12.7" height="2.5" rx="1" fill="#566175"/>
  <rect x="13.3" y="17.4" width="12.7" height="2.5" rx="1" fill="#566175"/>
  <rect x="23.2" y="13.3" width="1.8" height="1.1" fill="#e8eaee"/>
  <rect x="14.3" y="18.1" width="1.8" height="1.1" fill="#e8eaee"/>
  <rect x="161" y="7" width="137" height="18" rx="3" fill="#ececec"/>
  <path d="M283.5 14 L287 17 L290.5 14" stroke="#777" stroke-width="1" fill="none"/>
  <rect x="454" y="7" width="1" height="18" fill="#dcdcdc"/>
  <rect x="691.5" y="7" width="1" height="18" fill="#dcdcdc"/>
  <path d="M1194 14 L1198 18 L1202 14" stroke="#555" stroke-width="1.2" fill="none"/>
  <g stroke="#2f3b4c" stroke-width="1" fill="none" stroke-linejoin="round">
    <!-- icon1 cube wire -->
    <path d="M327.8 13.9 L332.2 15.7 L332.2 24.2 L327.8 22 Z" fill="#7ab8f5" stroke="none"/>
    <path d="M332.2 15.7 L335.9 13.7 L335.9 20.5 L332.2 22.5 Z" fill="#8cc4f7" stroke="none"/>
    <path d="M332 8.4 L339.8 12.5 L339.8 20.3 L332 24.5 L324.1 20.3 L324.1 12.5 Z" stroke-width="1.1"/>
    <path d="M327.8 13.9 L331.5 11.8 L335.9 13.7 L332.2 15.7 Z M327.8 13.9 L327.8 22 L332.2 24.2 M332.2 15.7 L332.2 24.4 M335.9 13.7 L335.9 20.5 L339.8 20.3 M335.9 20.5 L332.2 22.5 M324.1 12.5 L327.8 13.9 M331.5 11.8 L332 8.4" stroke-width="0.9"/>
    <!-- icon2 -->
    <path d="M356.8 12.7 L365.5 9.1 L367.5 10.2 L359.5 14 L359.5 22.4 L356.8 20.3 Z" fill="#7ab8f5" stroke="none"/>
    <path d="M359.5 14 L367.5 10.2 L369 12 L369 20 L364 24 L359.5 22.4 Z" fill="#cfe5fa" stroke="none"/>
    <path d="M364.4 8.4 L372 12.5 L372 20.3 L364.4 24.5 L356.6 20.3 L356.6 12.5 Z" stroke-width="1.1"/>
    <path d="M359.5 14 L359.5 22.4 M359.5 14 L364 15.8 L369 13 M364 15.8 L364 24.4 M369 13 L368 20.5 L364 22.5 M368 20.5 L372 20.3 M367.5 10.2 L359.5 14" stroke-width="0.9"/>
    <!-- icon3 eye flow -->
    <path d="M390.3 9.6 C393.5 7.6 397 8.6 400 10.8 C402.5 12.3 404.5 11.9 405.8 11.4" stroke-width="1"/>
    <path d="M389.4 14.2 C391.5 11.2 395.5 10.9 399 13.3 C401.8 15 404 14.8 405.8 14.5" stroke-width="1"/>
    <path d="M390.3 23 C393.5 25 397 24 400 21.8 C402.5 20.3 404.5 20.7 405.8 21.2" stroke-width="1"/>
    <path d="M389.4 18.4 C391.5 21.4 395.5 21.7 399 19.3 C401.8 17.6 404 17.8 405.8 18.1" stroke-width="1"/>
    <circle cx="394.9" cy="16.3" r="2.3" fill="#6aa8ea"/>
    <!-- icon4 triangle -->
    <path d="M422 10.2 L436 10.2 L429 22.4 Z" fill="#cfe3f8"/>
    <path d="M422.5 10.4 L435.5 10.4 L434 13 L424 13 Z" fill="#6aa8ea" stroke="none"/>
    <path d="M422 10.2 L436 10.2 L429 22.4 Z M424 13 L434 13" stroke-width="1"/>
    <!-- eye -->
    <circle cx="480" cy="16" r="7.8"/>
    <path d="M472.5 16 q7.5 -6 15 0 q-7.5 6 -15 0 Z"/>
    <circle cx="480" cy="16" r="2.7" fill="#9cc8f2"/>
    <!-- camera -->
    <rect x="504.5" y="11" width="12" height="11" rx="1.8" fill="#cfe3f8"/>
    <path d="M516.5 14.5 L521 12.5 L521 20.5 L516.5 18.5 Z" fill="#6aa8ea"/>
    <!-- rotate -->
    <path d="M551.5 19.5 A7.5 7.5 0 1 1 552 13.5"/>
    <path d="M550 13.5 L553 13.5 L552.5 10.5 Z" fill="#2f3b4c"/>
    <circle cx="545" cy="16" r="1.4" fill="#cfe3f8" stroke-width="0.9"/>
    <!-- cube solid -->
    <path d="M570 13 L573.5 9.5 L584.5 9.5 L584.5 19.5 L581 23 L570 23 Z" fill="#cfe3f8"/><path d="M570 13 L573.5 9.5 L584.5 9.5 L581 13 Z" fill="#fff" stroke="none"/>
    <path d="M581 13 L584.5 9.5 L584.5 19.5 L581 23 Z" fill="#6aa8ea"/>
    <path d="M570 13 L581 13 L581 23"/>
    <!-- ruler pencil -->
    <g transform="translate(610,16.3) rotate(45)">
      <rect x="-8.3" y="-2.6" width="16.6" height="5.2" rx="0.6" fill="#9cc8f2"/>
      <rect x="-8.3" y="-2.6" width="3.2" height="5.2" rx="0.6" fill="#fff"/>
      <path d="M8.3 -2.6 L11 0 L8.3 2.6" fill="#fff"/>
    </g>
    <g transform="translate(609.8,16.3) rotate(-45)">
      <rect x="-8.8" y="-2.8" width="17.6" height="5.6" rx="0.6" fill="#cfe3f8"/>
      <path d="M-6 -2.8 V0 M-3.5 -2.8 V-0.8 M-1 -2.8 V0 M1.5 -2.8 V-0.8 M4 -2.8 V0 M6.5 -2.8 V-0.8" stroke-width="0.9"/>
    </g>
    <path d="M623.5 14 L627.6 17.7 L631.7 14" stroke="#4f5a6e" stroke-width="1.1"/>
    <!-- tools mug -->
    <path d="M647 16.5 L658.5 16.5 L658.5 24.6 L647 24.6 Z" stroke-width="1.2"/>
    <path d="M658.5 18 q4.3 0 4.3 3 q0 3 -4.3 3" stroke-width="1.1"/>
    <path d="M648.2 16 L648.2 11.5 q-1.6 -0.8 -1.6 -3.3 l0 -1.2 l1.4 -0.6 l0 2.4 l1.8 0.6 l1.8 -0.6 l0 -2.4 l1.4 0.6 l0 1.2 q0 2.5 -1.6 3.3 L651.4 16 Z" fill="#7ab4ee" stroke="#2f3b4c" stroke-width="0.8"/>
    <path d="M657 16 L657 12 M657 11 L657 8" stroke="#2f3b4c" stroke-width="1.2"/>
    <path d="M655.8 16 L655.8 13 L658.2 13 L658.2 16 Z" fill="#cfe3f8" stroke-width="0.8"/>
    <path d="M667.8 14 L671.9 17.7 L676 14" stroke="#4f5a6e" stroke-width="1.1"/>
    <!-- focus cube -->
    <path d="M709 11.5 L709 8.5 L712 8.5 M722 8.5 L725 8.5 L725 11.5 M725 20.5 L725 23.5 L722 23.5 M712 23.5 L709 23.5 L709 20.5"/>
    <path d="M717 9.5 L722.5 12.5 L722.5 19.5 L717 22.5 L711.5 19.5 L711.5 12.5 Z" fill="#cfe3f8"/><path d="M717 9.5 L722.5 12.5 L717 15.5 L711.5 12.5 Z" fill="#fff" stroke="none"/>
    <path d="M717 15.5 L722.5 12.5 L722.5 19.5 L717 22.5 Z" fill="#6aa8ea"/>
    <path d="M711.5 12.5 L717 15.5 L722.5 12.5 M717 15.5 L717 22.5"/>
    <!-- screen -->
    <rect x="741.5" y="8.5" width="14.5" height="11" rx="2"/>
    <path d="M742 17 L755.5 17 L755.5 18 q0 1.5 -1.5 1.5 L743.5 19.5 q-1.5 0 -1.5 -1.5 Z" fill="#6aa8ea"/>
    <path d="M745 9 V17 M748.7 9 V17 M752.5 9 V17 M742 11.5 H755.5 M742 14 H755.5" stroke-width="0.8"/><path d="M748.7 19.5 V22.5 M744.5 22.8 H753" stroke-width="1.2"/>
  </g>
  <g fill="#4a5364"><circle cx="776.8" cy="16.2" r="1.35"/><circle cx="781.5" cy="16.2" r="1.35"/><circle cx="786.2" cy="16.2" r="1.35"/></g>
</svg>
<div class="abs" style="left:35px;top:52px;font-size:12.95px;line-height:15px;color:#333;white-space:nowrap">Advanced options</div>
<div class="abs" style="left:166px;top:51.5px;font-size:12.5px;line-height:15px;color:#444;white-space:nowrap">Surface</div>
<div class="abs" style="left:1096.5px;top:52px;font-size:13.05px;line-height:15px;color:#333;white-space:nowrap">Configuration 3</div>

<!-- LEFT CARDS -->
<div class="card" style="left:9px;top:85px;width:43px;height:531px"></div>
<div class="card" style="left:57px;top:85px;width:55px;height:450px"></div>
<div class="card" style="left:118px;top:85px;width:242px;height:167px"></div>
<div class="abs" style="left:364px;top:159.6px;width:1px;height:19px;background:#d9d9d9"></div><div class="abs" style="left:366px;top:159.6px;width:1px;height:19px;background:#d9d9d9"></div>

<svg class="abs" style="left:0;top:0" width="400" height="646">
  <rect x="18.2" y="94.2" width="24.8" height="24.6" rx="2" fill="#e3f1fc"/>
  <g stroke="#2f7bbf" stroke-width="1.9" fill="none" stroke-linecap="round">
    <path d="M25 101.2 H34 q2.8 0 2.8 2.6 q0 2.4 -2.8 2.4 H27.5 q-2.8 0 -2.8 2.6 q0 2.9 2.8 2.9 H36.5"/>
  </g>
  <g fill="#2f7bbf"><circle cx="25" cy="101.2" r="2"/><circle cx="36.5" cy="111.8" r="2"/><circle cx="30.8" cy="106.2" r="1.3"/></g>
  <g stroke="#505b6e" stroke-width="1.7" fill="none" stroke-linejoin="round" stroke-linecap="round">
    <path d="M26.3 137.2 L23 141 L26.3 144.8 M34.5 137.2 L37.8 141 L34.5 144.8"/>
    <rect x="24" y="168.5" width="13" height="5.6" rx="2"/>
    <rect x="24" y="174.1" width="13" height="5.6" rx="2"/>
    <path d="M28.5 182.5 H32.5"/>
    <rect x="24" y="203.3" width="13" height="10.8" rx="2"/>
    <circle cx="30.6" cy="243" r="6.5"/>
    <rect x="24" y="271.7" width="13" height="11.2" rx="2"/>
    <path d="M27 275 L29.5 277 L27 279 M30.5 279.5 H34"/>
    <circle cx="30.2" cy="595.8" r="7.6"/>
    <path d="M27.8 593.6 q0 -2.7 2.5 -2.7 q2.5 0 2.5 2.4 q0 1.5 -1.8 2.2 q-0.7 0.4 -0.7 1.7"/>
  </g>
  <g fill="#505b6e">
    <circle cx="30.6" cy="141" r="1.2"/>
    <rect x="26" y="170.5" width="1.4" height="1.2"/><rect x="26" y="176.3" width="1.4" height="1.2"/>
    <rect x="27" y="207.5" width="4" height="1.6"/><rect x="32" y="207.5" width="1.6" height="1.6"/><rect x="30" y="210" width="4" height="1.6"/>
    <rect x="26.6" y="242.4" width="1.5" height="1.3"/><rect x="30.2" y="239.5" width="1.3" height="4.2"/><rect x="30.2" y="242.4" width="3.2" height="1.3"/><rect x="30" y="246" width="1.4" height="1.4"/>
    <circle cx="30.3" cy="599.6" r="1"/>
  </g>
  <!-- stepper -->
  <path d="M82.3 105 L84.8 107.6 L82.3 110.2 M85.6 105 L88.1 107.6 L85.6 110.2" stroke="#6a7383" stroke-width="1" fill="none"/>
  <circle cx="85" cy="159.5" r="8.6" stroke="#2a7abf" stroke-width="1.8" fill="none"/>
  <circle cx="85" cy="159.5" r="3.6" fill="#2a7abf"/>
  <g stroke="#bdbdbd" stroke-width="1.2" fill="none">
    <circle cx="85" cy="216.9" r="2.8"/><circle cx="85" cy="241.2" r="2.8"/><circle cx="85" cy="265.5" r="2.8"/><circle cx="85" cy="289.7" r="2.8"/>
    <path d="M85 219.7 V238.4 M85 244 V262.7 M85 268.3 V286.9"/>
    <circle cx="85" cy="347.4" r="2.8"/><circle cx="85" cy="371.6" r="2.8"/><circle cx="85" cy="395.8" r="2.8"/>
    <path d="M85 350.2 V368.8 M85 374.4 V393 M85 398.6 V417.5"/>
    <circle cx="85" cy="464.5" r="2.8"/>
    <circle cx="85" cy="514.8" r="5.8"/>
  </g>
  <rect x="57" y="492.3" width="55" height="1" fill="#ececec"/>
  <g fill="#c4c4c4"><rect x="84.4" y="511.6" width="1.2" height="1.2"/><rect x="84.4" y="514" width="1.2" height="3.6"/></g>
  <!-- mesh card arrows -->
  <path d="M321 104.8 L318 108 L321 111.2" stroke="#c6c6c6" stroke-width="1" fill="none"/>
  <path d="M342 104.8 L345 108 L342 111.2" stroke="#556073" stroke-width="1.1" fill="none"/>
  <rect x="131.9" y="169.9" width="213.3" height="26" rx="2" fill="#2577b5"/>
  <rect x="132.4" y="207.7" width="212.3" height="24.5" rx="2" fill="#f3f3f3" stroke="#dcdcdc" stroke-width="1"/>
  <path d="M208.5 213.5 H219 M213.7 226 V216.5 M209.7 220 L213.7 216 L217.7 220" stroke="#556073" stroke-width="1.7" fill="none"/>
  <path d="M352.5 250.5 L357.5 245.5 M355 251 L358 248" stroke="#c8c8c8" stroke-width="0.8"/>
</svg>
<div class="abs" style="left:80.5px;top:128.5px;font-size:12px;color:#333;width:9px;text-align:center">G</div>
<div class="abs" style="left:80.5px;top:186.3px;font-size:12px;color:#333;width:9px;text-align:center">S</div>
<div class="abs" style="left:80.5px;top:316.5px;font-size:12px;color:#333;width:9px;text-align:center">A</div>
<div class="abs" style="left:80.5px;top:434.3px;font-size:12px;color:#333;width:9px;text-align:center">R</div>
<div class="abs" style="left:131.8px;top:101.5px;font-size:11px;font-weight:normal;-webkit-text-stroke:0.4px #333;color:#333;letter-spacing:0.1px">MESH</div>
<div class="abs" style="left:131.8px;top:124.5px;font-size:12.85px;line-height:16.7px;color:#444;white-space:nowrap">Import mesh from other applications</div><div class="abs" style="left:131.8px;top:141.2px;font-size:12.37px;line-height:16.7px;color:#444;white-space:nowrap">or upload OpenFOAM case as a ZIP.</div>
<div class="abs" style="left:131.9px;top:175px;width:213.3px;text-align:center;font-size:13.4px;font-weight:normal;-webkit-text-stroke:0.45px #fff;color:#fff">Import</div>
<div class="abs" style="left:226.7px;top:212.5px;font-size:13.1px;color:#556073">Upload</div>

<!-- right floating widget -->
<div class="card" style="left:1197px;top:85px;width:20px;height:22px;border-radius:4px 0 0 4px"></div>
<svg class="abs" style="left:1190px;top:80px" width="28" height="30">
  <rect x="11.5" y="10.5" width="8" height="10" rx="1.5" stroke="#333" stroke-width="1.6" fill="none"/>
  <path d="M22.3 11.5 V19.5" stroke="#333" stroke-width="1.8"/><path d="M25.5 13 V18" stroke="#333" stroke-width="1.5"/>
</svg>

<!-- FOOTER TEXT -->
<div class="abs" style="left:992.2px;top:627px;font-size:12.5px;color:#444;white-space:nowrap">Config</div>
<div class="abs" style="left:1035px;top:627px;font-size:12.5px;color:#444;white-space:nowrap">|</div>
<div class="abs" style="left:1045px;top:627px;font-size:12.55px;color:#444;white-space:nowrap">OpenFOAM SnappyHexMesh</div>

</body></html>
